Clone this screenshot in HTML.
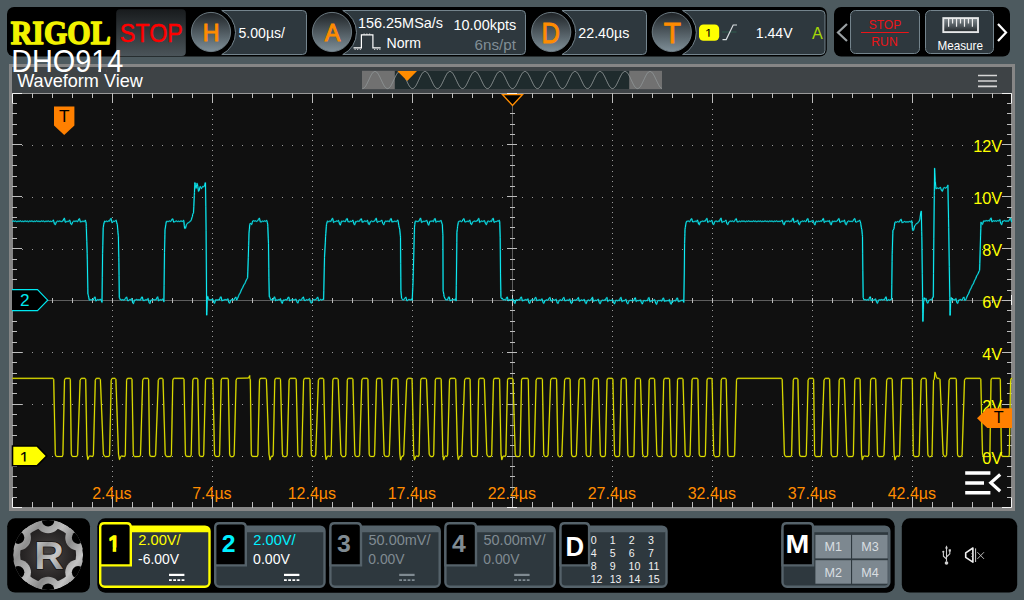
<!DOCTYPE html>
<html lang="en"><head><meta charset="utf-8"><title>RIGOL DHO914 - Waveform View</title>
<style>
html,body{margin:0;padding:0;background:#4d5a5f;overflow:hidden}
body{width:1024px;height:600px;font-family:"Liberation Sans", sans-serif}
svg{display:block;font-family:"Liberation Sans", sans-serif}
text{white-space:pre}
</style></head><body>
<svg width="1024" height="600" viewBox="0 0 1024 600">
<defs>
<linearGradient id="gc" x1="0" y1="0" x2="0" y2="1"><stop offset="0" stop-color="#1f2326"/><stop offset="0.45" stop-color="#4a545a"/><stop offset="1" stop-color="#7f8f98"/></linearGradient>
<linearGradient id="gs" x1="0" y1="0" x2="0" y2="1"><stop offset="0" stop-color="#181b1d"/><stop offset="1" stop-color="#4b5459"/></linearGradient>
<linearGradient id="gr" x1="0" y1="0" x2="0" y2="1"><stop offset="0" stop-color="#858e93"/><stop offset="0.6" stop-color="#4a5257"/><stop offset="1" stop-color="#22272a"/></linearGradient>
<linearGradient id="gm" gradientUnits="userSpaceOnUse" x1="13" y1="530" x2="83" y2="580"><stop offset="0" stop-color="#c9c9c9"/><stop offset="0.22" stop-color="#8f8f8f"/><stop offset="0.45" stop-color="#bdbdbd"/><stop offset="0.62" stop-color="#8a8a8a"/><stop offset="0.82" stop-color="#c4c4c4"/><stop offset="1" stop-color="#808080"/></linearGradient>
<radialGradient id="gd" gradientUnits="userSpaceOnUse" cx="48" cy="555" r="30"><stop offset="0" stop-color="#4b4746"/><stop offset="0.7" stop-color="#2c2929"/><stop offset="1" stop-color="#201e1e"/></radialGradient>
<linearGradient id="gl" x1="0" y1="0" x2="1" y2="1"><stop offset="0" stop-color="#e4e4e4"/><stop offset="0.35" stop-color="#9c9c9c"/><stop offset="0.6" stop-color="#c8c8c8"/><stop offset="1" stop-color="#7a7a7a"/></linearGradient>
</defs>
<rect x="0" y="0" width="1024" height="600" fill="#4d5a5f"/>
<rect x="7" y="7" width="819.8" height="49.5" rx="7" fill="#000"/>
<rect x="834" y="7" width="176" height="49.5" rx="7" fill="#000"/>
<text x="10.7" y="44.4" font-size="34.6" fill="#f2f200" textLength="100" lengthAdjust="spacingAndGlyphs" font-weight="bold" font-family='"Liberation Serif", serif' stroke="#f2f200" stroke-width="1.5" stroke-linejoin="round">RIGOL</text>
<rect x="116.2" y="9.2" width="69.6" height="46.7" rx="4" fill="url(#gs)"/>
<text x="119.8" y="42.2" font-size="26.6" fill="#ff0000" textLength="63" lengthAdjust="spacingAndGlyphs" stroke="#ff0000" stroke-width="0.45">STOP</text>
<path d="M221.78,10.5 H302.5 A4,4 0 0 1 306.5,14.5 V50.5 A4,4 0 0 1 302.5,54.5 H221.78 A24.5,24.5 0 0 0 221.78,10.5 Z" fill="#2e383e" stroke="#74848d" stroke-width="1"/>
<circle cx="211" cy="32" r="19.6" fill="url(#gc)" stroke="#74828a" stroke-width="0.9"/>
<text x="211.0" y="40.9" font-size="23.2" fill="#ff8c00" text-anchor="middle" stroke="#ff8c00" stroke-width="0.9">H</text>
<text x="238.5" y="38" font-size="14.5" fill="#fff" textLength="46.5" lengthAdjust="spacingAndGlyphs">5.00µs/</text>
<path d="M342.78,10.5 H521.5 A4,4 0 0 1 525.5,14.5 V50.5 A4,4 0 0 1 521.5,54.5 H342.78 A24.5,24.5 0 0 0 342.78,10.5 Z" fill="#2e383e" stroke="#74848d" stroke-width="1"/>
<circle cx="332" cy="32" r="19.6" fill="url(#gc)" stroke="#74828a" stroke-width="0.9"/>
<text x="332.6" y="40.9" font-size="23.2" fill="#ff8c00" text-anchor="middle" stroke="#ff8c00" stroke-width="0.9">A</text>
<text x="358" y="28.2" font-size="14.5" fill="#fff" textLength="85" lengthAdjust="spacingAndGlyphs">156.25MSa/s</text>
<text x="453.5" y="29.7" font-size="14.5" fill="#fff" textLength="62.7" lengthAdjust="spacingAndGlyphs">10.00kpts</text>
<text x="386.5" y="48" font-size="14.5" fill="#fff" textLength="34.5" lengthAdjust="spacingAndGlyphs">Norm</text>
<text x="474.6" y="49.7" font-size="14.5" fill="#818e96" textLength="41.3" lengthAdjust="spacingAndGlyphs">6ns/pt</text>
<path d="M353.5,47.9 H361.4 V34.9 H372.9 V47.9 H380.7" fill="none" stroke="#fff" stroke-width="1.2"/>
<path d="M354.6,49.4 h1 m1.6,0 h1 m1.6,0 h1 M374.2,49.4 h1 m1.6,0 h1 m1.6,0 h1 M363.6,34 h1 m1.8,0 h1 m1.8,0 h1" fill="none" stroke="#fff" stroke-width="0.9"/>
<path d="M561.98,10.5 H642.5 A4,4 0 0 1 646.5,14.5 V50.5 A4,4 0 0 1 642.5,54.5 H561.98 A24.5,24.5 0 0 0 561.98,10.5 Z" fill="#2e383e" stroke="#74848d" stroke-width="1"/>
<circle cx="551.2" cy="32" r="19.6" fill="url(#gc)" stroke="#74828a" stroke-width="0.9"/>
<text x="541.6" y="42.9" font-size="29.3" fill="#ff8c00" textLength="18.4" lengthAdjust="spacingAndGlyphs" stroke="#ff8c00" stroke-width="0.9">D</text>
<text x="578.3" y="38" font-size="14.5" fill="#fff" textLength="51" lengthAdjust="spacingAndGlyphs">22.40µs</text>
<path d="M682.58,10.5 H821.0 A4,4 0 0 1 825.0,14.5 V50.5 A4,4 0 0 1 821.0,54.5 H682.58 A24.5,24.5 0 0 0 682.58,10.5 Z" fill="#2e383e" stroke="#74848d" stroke-width="1"/>
<circle cx="671.8" cy="32" r="19.6" fill="url(#gc)" stroke="#74828a" stroke-width="0.9"/>
<text x="663.8" y="42.9" font-size="29.3" fill="#ff8c00" textLength="17.2" lengthAdjust="spacingAndGlyphs" stroke="#ff8c00" stroke-width="0.9">T</text>
<rect x="699" y="24.5" width="20.2" height="16.3" rx="4.5" fill="#ffff00"/>
<clipPath id="k1"><rect x="695.6" y="24.0" width="26" height="12.70"/></clipPath>
<g clip-path="url(#k1)">
<text x="708.6" y="38.23" font-size="13" fill="#000" text-anchor="middle">1</text>
</g>
<path d="M722,32 H736.5" stroke="#2f5a4c" stroke-width="1" fill="none"/>
<path d="M722.5,39.6 H726.2 L733.2,25 H737" stroke="#d8dde0" stroke-width="1.2" fill="none"/>
<text x="755.8" y="38" font-size="14.5" fill="#fff" textLength="36.8" lengthAdjust="spacingAndGlyphs">1.44V</text>
<text x="812.0" y="39.2" font-size="16.6" fill="#a6d608" textLength="10.8" lengthAdjust="spacingAndGlyphs">A</text>
<path d="M847,24 L838,32.5 L847,41" fill="none" stroke="#9aa0a3" stroke-width="2.2"/>
<rect x="850.5" y="10.5" width="69" height="43" rx="5" fill="#2e383e" stroke="#74848d" stroke-width="1"/>
<text x="868.7" y="28.8" font-size="12.6" fill="#ec1418" textLength="32.6" lengthAdjust="spacingAndGlyphs">STOP</text>
<path d="M861,32.5 H908.8" stroke="#ec1418" stroke-width="1"/>
<text x="871.3" y="45.6" font-size="12.6" fill="#ec1418" textLength="26.4" lengthAdjust="spacingAndGlyphs">RUN</text>
<rect x="925.5" y="10.5" width="68" height="43" rx="5" fill="#2e383e" stroke="#74848d" stroke-width="1"/>
<rect x="943.3" y="18.1" width="34.7" height="14" fill="url(#gr)" stroke="#e6e7e8" stroke-width="1.9"/>
<path d="M948.60,18.6 v8.2 M952.57,18.6 v5.0 M956.54,18.6 v8.2 M960.51,18.6 v5.0 M964.48,18.6 v8.2 M968.45,18.6 v5.0 M972.42,18.6 v8.2 " stroke="#eeeeee" stroke-width="1.2" fill="none"/>
<text x="937.5" y="50.2" font-size="12.8" fill="#fff" textLength="45.5" lengthAdjust="spacingAndGlyphs">Measure</text>
<path d="M998,24 L1006,32.5 L998,41" fill="none" stroke="#fff" stroke-width="2.2"/>
<rect x="9" y="64" width="1006" height="447" fill="#868686"/>
<rect x="12" y="67" width="1000" height="26" fill="#3e4346"/>
<rect x="13" y="94" width="998" height="413" fill="#101010"/>
<rect x="12" y="93" width="1000" height="1" fill="#9a9a9a"/>
<text x="17.2" y="86.6" font-size="18.6" fill="#fff" textLength="125.6" lengthAdjust="spacingAndGlyphs">Waveform View</text>
<path d="M978,75.5 H997 M978,81 H997 M978,86.3 H997" stroke="#d6d6d6" stroke-width="1.7" fill="none"/>
<rect x="362" y="70.8" width="300" height="18.4" fill="#717171"/>
<rect x="394.8" y="70.8" width="234.4" height="18.4" fill="#1f2b2d"/>
<polyline points="362.5,88.6 363.0,88.5 363.5,88.3 364.0,88.0 364.5,87.5 365.0,87.0 365.5,86.3 366.0,85.5 366.5,84.6 367.0,83.7 367.5,82.7 368.0,81.6 368.5,80.5 369.0,79.5 369.5,78.4 370.0,77.3 370.5,76.3 371.0,75.4 371.5,74.5 372.0,73.7 372.5,73.0 373.0,72.5 373.5,72.0 374.0,71.7 374.5,71.5 375.0,71.4 375.5,71.5 376.0,71.7 376.5,72.0 377.0,72.5 377.5,73.0 378.0,73.7 378.5,74.5 379.0,75.4 379.5,76.3 380.0,77.3 380.5,78.4 381.0,79.5 381.5,80.5 382.0,81.6 382.5,82.7 383.0,83.7 383.5,84.6 384.0,85.5 384.5,86.3 385.0,87.0 385.5,87.5 386.0,88.0 386.5,88.3 387.0,88.5 387.5,88.6 388.0,88.5 388.5,88.3 389.0,88.0 389.5,87.5 390.0,87.0 390.5,86.3 391.0,85.5 391.5,84.6 392.0,83.7 392.5,82.7 393.0,81.6 393.5,80.5 394.0,79.5 394.5,78.4 395.0,77.3 395.5,76.3 396.0,75.4 396.5,74.5 397.0,73.7 397.5,73.0 398.0,72.5 398.5,72.0 399.0,71.7 399.5,71.5 400.0,71.4 400.5,71.5 401.0,71.7 401.5,72.0 402.0,72.5 402.5,73.0 403.0,73.7 403.5,74.5 404.0,75.4 404.5,76.3 405.0,77.3 405.5,78.4 406.0,79.5 406.5,80.5 407.0,81.6 407.5,82.7 408.0,83.7 408.5,84.6 409.0,85.5 409.5,86.3 410.0,87.0 410.5,87.5 411.0,88.0 411.5,88.3 412.0,88.5 412.5,88.6 413.0,88.5 413.5,88.3 414.0,88.0 414.5,87.5 415.0,87.0 415.5,86.3 416.0,85.5 416.5,84.6 417.0,83.7 417.5,82.7 418.0,81.6 418.5,80.5 419.0,79.5 419.5,78.4 420.0,77.3 420.5,76.3 421.0,75.4 421.5,74.5 422.0,73.7 422.5,73.0 423.0,72.5 423.5,72.0 424.0,71.7 424.5,71.5 425.0,71.4 425.5,71.5 426.0,71.7 426.5,72.0 427.0,72.5 427.5,73.0 428.0,73.7 428.5,74.5 429.0,75.4 429.5,76.3 430.0,77.3 430.5,78.4 431.0,79.5 431.5,80.5 432.0,81.6 432.5,82.7 433.0,83.7 433.5,84.6 434.0,85.5 434.5,86.3 435.0,87.0 435.5,87.5 436.0,88.0 436.5,88.3 437.0,88.5 437.5,88.6 438.0,88.5 438.5,88.3 439.0,88.0 439.5,87.5 440.0,87.0 440.5,86.3 441.0,85.5 441.5,84.6 442.0,83.7 442.5,82.7 443.0,81.6 443.5,80.5 444.0,79.5 444.5,78.4 445.0,77.3 445.5,76.3 446.0,75.4 446.5,74.5 447.0,73.7 447.5,73.0 448.0,72.5 448.5,72.0 449.0,71.7 449.5,71.5 450.0,71.4 450.5,71.5 451.0,71.7 451.5,72.0 452.0,72.5 452.5,73.0 453.0,73.7 453.5,74.5 454.0,75.4 454.5,76.3 455.0,77.3 455.5,78.4 456.0,79.5 456.5,80.5 457.0,81.6 457.5,82.7 458.0,83.7 458.5,84.6 459.0,85.5 459.5,86.3 460.0,87.0 460.5,87.5 461.0,88.0 461.5,88.3 462.0,88.5 462.5,88.6 463.0,88.5 463.5,88.3 464.0,88.0 464.5,87.5 465.0,87.0 465.5,86.3 466.0,85.5 466.5,84.6 467.0,83.7 467.5,82.7 468.0,81.6 468.5,80.5 469.0,79.5 469.5,78.4 470.0,77.3 470.5,76.3 471.0,75.4 471.5,74.5 472.0,73.7 472.5,73.0 473.0,72.5 473.5,72.0 474.0,71.7 474.5,71.5 475.0,71.4 475.5,71.5 476.0,71.7 476.5,72.0 477.0,72.5 477.5,73.0 478.0,73.7 478.5,74.5 479.0,75.4 479.5,76.3 480.0,77.3 480.5,78.4 481.0,79.5 481.5,80.5 482.0,81.6 482.5,82.7 483.0,83.7 483.5,84.6 484.0,85.5 484.5,86.3 485.0,87.0 485.5,87.5 486.0,88.0 486.5,88.3 487.0,88.5 487.5,88.6 488.0,88.5 488.5,88.3 489.0,88.0 489.5,87.5 490.0,87.0 490.5,86.3 491.0,85.5 491.5,84.6 492.0,83.7 492.5,82.7 493.0,81.6 493.5,80.5 494.0,79.5 494.5,78.4 495.0,77.3 495.5,76.3 496.0,75.4 496.5,74.5 497.0,73.7 497.5,73.0 498.0,72.5 498.5,72.0 499.0,71.7 499.5,71.5 500.0,71.4 500.5,71.5 501.0,71.7 501.5,72.0 502.0,72.5 502.5,73.0 503.0,73.7 503.5,74.5 504.0,75.4 504.5,76.3 505.0,77.3 505.5,78.4 506.0,79.5 506.5,80.5 507.0,81.6 507.5,82.7 508.0,83.7 508.5,84.6 509.0,85.5 509.5,86.3 510.0,87.0 510.5,87.5 511.0,88.0 511.5,88.3 512.0,88.5 512.5,88.6 513.0,88.5 513.5,88.3 514.0,88.0 514.5,87.5 515.0,87.0 515.5,86.3 516.0,85.5 516.5,84.6 517.0,83.7 517.5,82.7 518.0,81.6 518.5,80.5 519.0,79.5 519.5,78.4 520.0,77.3 520.5,76.3 521.0,75.4 521.5,74.5 522.0,73.7 522.5,73.0 523.0,72.5 523.5,72.0 524.0,71.7 524.5,71.5 525.0,71.4 525.5,71.5 526.0,71.7 526.5,72.0 527.0,72.5 527.5,73.0 528.0,73.7 528.5,74.5 529.0,75.4 529.5,76.3 530.0,77.3 530.5,78.4 531.0,79.5 531.5,80.5 532.0,81.6 532.5,82.7 533.0,83.7 533.5,84.6 534.0,85.5 534.5,86.3 535.0,87.0 535.5,87.5 536.0,88.0 536.5,88.3 537.0,88.5 537.5,88.6 538.0,88.5 538.5,88.3 539.0,88.0 539.5,87.5 540.0,87.0 540.5,86.3 541.0,85.5 541.5,84.6 542.0,83.7 542.5,82.7 543.0,81.6 543.5,80.5 544.0,79.5 544.5,78.4 545.0,77.3 545.5,76.3 546.0,75.4 546.5,74.5 547.0,73.7 547.5,73.0 548.0,72.5 548.5,72.0 549.0,71.7 549.5,71.5 550.0,71.4 550.5,71.5 551.0,71.7 551.5,72.0 552.0,72.5 552.5,73.0 553.0,73.7 553.5,74.5 554.0,75.4 554.5,76.3 555.0,77.3 555.5,78.4 556.0,79.5 556.5,80.5 557.0,81.6 557.5,82.7 558.0,83.7 558.5,84.6 559.0,85.5 559.5,86.3 560.0,87.0 560.5,87.5 561.0,88.0 561.5,88.3 562.0,88.5 562.5,88.6 563.0,88.5 563.5,88.3 564.0,88.0 564.5,87.5 565.0,87.0 565.5,86.3 566.0,85.5 566.5,84.6 567.0,83.7 567.5,82.7 568.0,81.6 568.5,80.5 569.0,79.5 569.5,78.4 570.0,77.3 570.5,76.3 571.0,75.4 571.5,74.5 572.0,73.7 572.5,73.0 573.0,72.5 573.5,72.0 574.0,71.7 574.5,71.5 575.0,71.4 575.5,71.5 576.0,71.7 576.5,72.0 577.0,72.5 577.5,73.0 578.0,73.7 578.5,74.5 579.0,75.4 579.5,76.3 580.0,77.3 580.5,78.4 581.0,79.5 581.5,80.5 582.0,81.6 582.5,82.7 583.0,83.7 583.5,84.6 584.0,85.5 584.5,86.3 585.0,87.0 585.5,87.5 586.0,88.0 586.5,88.3 587.0,88.5 587.5,88.6 588.0,88.5 588.5,88.3 589.0,88.0 589.5,87.5 590.0,87.0 590.5,86.3 591.0,85.5 591.5,84.6 592.0,83.7 592.5,82.7 593.0,81.6 593.5,80.5 594.0,79.5 594.5,78.4 595.0,77.3 595.5,76.3 596.0,75.4 596.5,74.5 597.0,73.7 597.5,73.0 598.0,72.5 598.5,72.0 599.0,71.7 599.5,71.5 600.0,71.4 600.5,71.5 601.0,71.7 601.5,72.0 602.0,72.5 602.5,73.0 603.0,73.7 603.5,74.5 604.0,75.4 604.5,76.3 605.0,77.3 605.5,78.4 606.0,79.5 606.5,80.5 607.0,81.6 607.5,82.7 608.0,83.7 608.5,84.6 609.0,85.5 609.5,86.3 610.0,87.0 610.5,87.5 611.0,88.0 611.5,88.3 612.0,88.5 612.5,88.6 613.0,88.5 613.5,88.3 614.0,88.0 614.5,87.5 615.0,87.0 615.5,86.3 616.0,85.5 616.5,84.6 617.0,83.7 617.5,82.7 618.0,81.6 618.5,80.5 619.0,79.5 619.5,78.4 620.0,77.3 620.5,76.3 621.0,75.4 621.5,74.5 622.0,73.7 622.5,73.0 623.0,72.5 623.5,72.0 624.0,71.7 624.5,71.5 625.0,71.4 625.5,71.5 626.0,71.7 626.5,72.0 627.0,72.5 627.5,73.0 628.0,73.7 628.5,74.5 629.0,75.4 629.5,76.3 630.0,77.3 630.5,78.4 631.0,79.5 631.5,80.5 632.0,81.6 632.5,82.7 633.0,83.7 633.5,84.6 634.0,85.5 634.5,86.3 635.0,87.0 635.5,87.5 636.0,88.0 636.5,88.3 637.0,88.5 637.5,88.6 638.0,88.5 638.5,88.3 639.0,88.0 639.5,87.5 640.0,87.0 640.5,86.3 641.0,85.5 641.5,84.6 642.0,83.7 642.5,82.7 643.0,81.6 643.5,80.5 644.0,79.5 644.5,78.4 645.0,77.3 645.5,76.3 646.0,75.4 646.5,74.5 647.0,73.7 647.5,73.0 648.0,72.5 648.5,72.0 649.0,71.7 649.5,71.5 650.0,71.4 650.5,71.5 651.0,71.7 651.5,72.0 652.0,72.5 652.5,73.0 653.0,73.7 653.5,74.5 654.0,75.4 654.5,76.3 655.0,77.3 655.5,78.4 656.0,79.5 656.5,80.5 657.0,81.6 657.5,82.7 658.0,83.7 658.5,84.6 659.0,85.5 659.5,86.3 660.0,87.0 660.5,87.5 661.0,88.0 661.5,88.3 662.0,88.5" fill="none" stroke="#8f9596" stroke-width="1"/>
<path d="M397.3,71 H417 L407.2,81 Z" fill="#ff8c00"/>
<path d="M112,109.5h1M112,114.5h1M112,119.5h1M112,124.5h1M112,129.5h1M112,134.5h1M112,140.5h1M112,145.5h1M112,150.5h1M112,155.5h1M112,160.5h1M112,165.5h1M112,171.5h1M112,176.5h1M112,181.5h1M112,186.5h1M112,191.5h1M112,197.5h1M112,202.5h1M112,207.5h1M112,212.5h1M112,217.5h1M112,222.5h1M112,228.5h1M112,233.5h1M112,238.5h1M112,243.5h1M112,248.5h1M112,253.5h1M112,259.5h1M112,264.5h1M112,269.5h1M112,274.5h1M112,279.5h1M112,284.5h1M112,290.5h1M112,295.5h1M112,300.5h1M112,305.5h1M112,310.5h1M112,316.5h1M112,321.5h1M112,326.5h1M112,331.5h1M112,336.5h1M112,341.5h1M112,347.5h1M112,352.5h1M112,357.5h1M112,362.5h1M112,367.5h1M112,372.5h1M112,378.5h1M112,383.5h1M112,388.5h1M112,393.5h1M112,398.5h1M112,404.5h1M112,409.5h1M112,414.5h1M112,419.5h1M112,424.5h1M112,429.5h1M112,435.5h1M112,440.5h1M112,445.5h1M112,450.5h1M112,455.5h1M112,460.5h1M112,466.5h1M112,471.5h1M112,476.5h1M112,481.5h1M112,486.5h1M112,491.5h1M112,497.5h1M212,109.5h1M212,114.5h1M212,119.5h1M212,124.5h1M212,129.5h1M212,134.5h1M212,140.5h1M212,145.5h1M212,150.5h1M212,155.5h1M212,160.5h1M212,165.5h1M212,171.5h1M212,176.5h1M212,181.5h1M212,186.5h1M212,191.5h1M212,197.5h1M212,202.5h1M212,207.5h1M212,212.5h1M212,217.5h1M212,222.5h1M212,228.5h1M212,233.5h1M212,238.5h1M212,243.5h1M212,248.5h1M212,253.5h1M212,259.5h1M212,264.5h1M212,269.5h1M212,274.5h1M212,279.5h1M212,284.5h1M212,290.5h1M212,295.5h1M212,300.5h1M212,305.5h1M212,310.5h1M212,316.5h1M212,321.5h1M212,326.5h1M212,331.5h1M212,336.5h1M212,341.5h1M212,347.5h1M212,352.5h1M212,357.5h1M212,362.5h1M212,367.5h1M212,372.5h1M212,378.5h1M212,383.5h1M212,388.5h1M212,393.5h1M212,398.5h1M212,404.5h1M212,409.5h1M212,414.5h1M212,419.5h1M212,424.5h1M212,429.5h1M212,435.5h1M212,440.5h1M212,445.5h1M212,450.5h1M212,455.5h1M212,460.5h1M212,466.5h1M212,471.5h1M212,476.5h1M212,481.5h1M212,486.5h1M212,491.5h1M212,497.5h1M312,109.5h1M312,114.5h1M312,119.5h1M312,124.5h1M312,129.5h1M312,134.5h1M312,140.5h1M312,145.5h1M312,150.5h1M312,155.5h1M312,160.5h1M312,165.5h1M312,171.5h1M312,176.5h1M312,181.5h1M312,186.5h1M312,191.5h1M312,197.5h1M312,202.5h1M312,207.5h1M312,212.5h1M312,217.5h1M312,222.5h1M312,228.5h1M312,233.5h1M312,238.5h1M312,243.5h1M312,248.5h1M312,253.5h1M312,259.5h1M312,264.5h1M312,269.5h1M312,274.5h1M312,279.5h1M312,284.5h1M312,290.5h1M312,295.5h1M312,300.5h1M312,305.5h1M312,310.5h1M312,316.5h1M312,321.5h1M312,326.5h1M312,331.5h1M312,336.5h1M312,341.5h1M312,347.5h1M312,352.5h1M312,357.5h1M312,362.5h1M312,367.5h1M312,372.5h1M312,378.5h1M312,383.5h1M312,388.5h1M312,393.5h1M312,398.5h1M312,404.5h1M312,409.5h1M312,414.5h1M312,419.5h1M312,424.5h1M312,429.5h1M312,435.5h1M312,440.5h1M312,445.5h1M312,450.5h1M312,455.5h1M312,460.5h1M312,466.5h1M312,471.5h1M312,476.5h1M312,481.5h1M312,486.5h1M312,491.5h1M312,497.5h1M412,109.5h1M412,114.5h1M412,119.5h1M412,124.5h1M412,129.5h1M412,134.5h1M412,140.5h1M412,145.5h1M412,150.5h1M412,155.5h1M412,160.5h1M412,165.5h1M412,171.5h1M412,176.5h1M412,181.5h1M412,186.5h1M412,191.5h1M412,197.5h1M412,202.5h1M412,207.5h1M412,212.5h1M412,217.5h1M412,222.5h1M412,228.5h1M412,233.5h1M412,238.5h1M412,243.5h1M412,248.5h1M412,253.5h1M412,259.5h1M412,264.5h1M412,269.5h1M412,274.5h1M412,279.5h1M412,284.5h1M412,290.5h1M412,295.5h1M412,300.5h1M412,305.5h1M412,310.5h1M412,316.5h1M412,321.5h1M412,326.5h1M412,331.5h1M412,336.5h1M412,341.5h1M412,347.5h1M412,352.5h1M412,357.5h1M412,362.5h1M412,367.5h1M412,372.5h1M412,378.5h1M412,383.5h1M412,388.5h1M412,393.5h1M412,398.5h1M412,404.5h1M412,409.5h1M412,414.5h1M412,419.5h1M412,424.5h1M412,429.5h1M412,435.5h1M412,440.5h1M412,445.5h1M412,450.5h1M412,455.5h1M412,460.5h1M412,466.5h1M412,471.5h1M412,476.5h1M412,481.5h1M412,486.5h1M412,491.5h1M412,497.5h1M612,109.5h1M612,114.5h1M612,119.5h1M612,124.5h1M612,129.5h1M612,134.5h1M612,140.5h1M612,145.5h1M612,150.5h1M612,155.5h1M612,160.5h1M612,165.5h1M612,171.5h1M612,176.5h1M612,181.5h1M612,186.5h1M612,191.5h1M612,197.5h1M612,202.5h1M612,207.5h1M612,212.5h1M612,217.5h1M612,222.5h1M612,228.5h1M612,233.5h1M612,238.5h1M612,243.5h1M612,248.5h1M612,253.5h1M612,259.5h1M612,264.5h1M612,269.5h1M612,274.5h1M612,279.5h1M612,284.5h1M612,290.5h1M612,295.5h1M612,300.5h1M612,305.5h1M612,310.5h1M612,316.5h1M612,321.5h1M612,326.5h1M612,331.5h1M612,336.5h1M612,341.5h1M612,347.5h1M612,352.5h1M612,357.5h1M612,362.5h1M612,367.5h1M612,372.5h1M612,378.5h1M612,383.5h1M612,388.5h1M612,393.5h1M612,398.5h1M612,404.5h1M612,409.5h1M612,414.5h1M612,419.5h1M612,424.5h1M612,429.5h1M612,435.5h1M612,440.5h1M612,445.5h1M612,450.5h1M612,455.5h1M612,460.5h1M612,466.5h1M612,471.5h1M612,476.5h1M612,481.5h1M612,486.5h1M612,491.5h1M612,497.5h1M712,109.5h1M712,114.5h1M712,119.5h1M712,124.5h1M712,129.5h1M712,134.5h1M712,140.5h1M712,145.5h1M712,150.5h1M712,155.5h1M712,160.5h1M712,165.5h1M712,171.5h1M712,176.5h1M712,181.5h1M712,186.5h1M712,191.5h1M712,197.5h1M712,202.5h1M712,207.5h1M712,212.5h1M712,217.5h1M712,222.5h1M712,228.5h1M712,233.5h1M712,238.5h1M712,243.5h1M712,248.5h1M712,253.5h1M712,259.5h1M712,264.5h1M712,269.5h1M712,274.5h1M712,279.5h1M712,284.5h1M712,290.5h1M712,295.5h1M712,300.5h1M712,305.5h1M712,310.5h1M712,316.5h1M712,321.5h1M712,326.5h1M712,331.5h1M712,336.5h1M712,341.5h1M712,347.5h1M712,352.5h1M712,357.5h1M712,362.5h1M712,367.5h1M712,372.5h1M712,378.5h1M712,383.5h1M712,388.5h1M712,393.5h1M712,398.5h1M712,404.5h1M712,409.5h1M712,414.5h1M712,419.5h1M712,424.5h1M712,429.5h1M712,435.5h1M712,440.5h1M712,445.5h1M712,450.5h1M712,455.5h1M712,460.5h1M712,466.5h1M712,471.5h1M712,476.5h1M712,481.5h1M712,486.5h1M712,491.5h1M712,497.5h1M812,109.5h1M812,114.5h1M812,119.5h1M812,124.5h1M812,129.5h1M812,134.5h1M812,140.5h1M812,145.5h1M812,150.5h1M812,155.5h1M812,160.5h1M812,165.5h1M812,171.5h1M812,176.5h1M812,181.5h1M812,186.5h1M812,191.5h1M812,197.5h1M812,202.5h1M812,207.5h1M812,212.5h1M812,217.5h1M812,222.5h1M812,228.5h1M812,233.5h1M812,238.5h1M812,243.5h1M812,248.5h1M812,253.5h1M812,259.5h1M812,264.5h1M812,269.5h1M812,274.5h1M812,279.5h1M812,284.5h1M812,290.5h1M812,295.5h1M812,300.5h1M812,305.5h1M812,310.5h1M812,316.5h1M812,321.5h1M812,326.5h1M812,331.5h1M812,336.5h1M812,341.5h1M812,347.5h1M812,352.5h1M812,357.5h1M812,362.5h1M812,367.5h1M812,372.5h1M812,378.5h1M812,383.5h1M812,388.5h1M812,393.5h1M812,398.5h1M812,404.5h1M812,409.5h1M812,414.5h1M812,419.5h1M812,424.5h1M812,429.5h1M812,435.5h1M812,440.5h1M812,445.5h1M812,450.5h1M812,455.5h1M812,460.5h1M812,466.5h1M812,471.5h1M812,476.5h1M812,481.5h1M812,486.5h1M812,491.5h1M812,497.5h1M912,109.5h1M912,114.5h1M912,119.5h1M912,124.5h1M912,129.5h1M912,134.5h1M912,140.5h1M912,145.5h1M912,150.5h1M912,155.5h1M912,160.5h1M912,165.5h1M912,171.5h1M912,176.5h1M912,181.5h1M912,186.5h1M912,191.5h1M912,197.5h1M912,202.5h1M912,207.5h1M912,212.5h1M912,217.5h1M912,222.5h1M912,228.5h1M912,233.5h1M912,238.5h1M912,243.5h1M912,248.5h1M912,253.5h1M912,259.5h1M912,264.5h1M912,269.5h1M912,274.5h1M912,279.5h1M912,284.5h1M912,290.5h1M912,295.5h1M912,300.5h1M912,305.5h1M912,310.5h1M912,316.5h1M912,321.5h1M912,326.5h1M912,331.5h1M912,336.5h1M912,341.5h1M912,347.5h1M912,352.5h1M912,357.5h1M912,362.5h1M912,367.5h1M912,372.5h1M912,378.5h1M912,383.5h1M912,388.5h1M912,393.5h1M912,398.5h1M912,404.5h1M912,409.5h1M912,414.5h1M912,419.5h1M912,424.5h1M912,429.5h1M912,435.5h1M912,440.5h1M912,445.5h1M912,450.5h1M912,455.5h1M912,460.5h1M912,466.5h1M912,471.5h1M912,476.5h1M912,481.5h1M912,486.5h1M912,491.5h1M912,497.5h1M22,145.5h1M32,145.5h1M42,145.5h1M52,145.5h1M62,145.5h1M72,145.5h1M82,145.5h1M92,145.5h1M102,145.5h1M122,145.5h1M132,145.5h1M142,145.5h1M152,145.5h1M162,145.5h1M172,145.5h1M182,145.5h1M192,145.5h1M202,145.5h1M222,145.5h1M232,145.5h1M242,145.5h1M252,145.5h1M262,145.5h1M272,145.5h1M282,145.5h1M292,145.5h1M302,145.5h1M322,145.5h1M332,145.5h1M342,145.5h1M352,145.5h1M362,145.5h1M372,145.5h1M382,145.5h1M392,145.5h1M402,145.5h1M422,145.5h1M432,145.5h1M442,145.5h1M452,145.5h1M462,145.5h1M472,145.5h1M482,145.5h1M492,145.5h1M502,145.5h1M522,145.5h1M532,145.5h1M542,145.5h1M552,145.5h1M562,145.5h1M572,145.5h1M582,145.5h1M592,145.5h1M602,145.5h1M622,145.5h1M632,145.5h1M642,145.5h1M652,145.5h1M662,145.5h1M672,145.5h1M682,145.5h1M692,145.5h1M702,145.5h1M722,145.5h1M732,145.5h1M742,145.5h1M752,145.5h1M762,145.5h1M772,145.5h1M782,145.5h1M792,145.5h1M802,145.5h1M822,145.5h1M832,145.5h1M842,145.5h1M852,145.5h1M862,145.5h1M872,145.5h1M882,145.5h1M892,145.5h1M902,145.5h1M922,145.5h1M932,145.5h1M942,145.5h1M952,145.5h1M962,145.5h1M972,145.5h1M982,145.5h1M992,145.5h1M22,197.5h1M32,197.5h1M42,197.5h1M52,197.5h1M62,197.5h1M72,197.5h1M82,197.5h1M92,197.5h1M102,197.5h1M122,197.5h1M132,197.5h1M142,197.5h1M152,197.5h1M162,197.5h1M172,197.5h1M182,197.5h1M192,197.5h1M202,197.5h1M222,197.5h1M232,197.5h1M242,197.5h1M252,197.5h1M262,197.5h1M272,197.5h1M282,197.5h1M292,197.5h1M302,197.5h1M322,197.5h1M332,197.5h1M342,197.5h1M352,197.5h1M362,197.5h1M372,197.5h1M382,197.5h1M392,197.5h1M402,197.5h1M422,197.5h1M432,197.5h1M442,197.5h1M452,197.5h1M462,197.5h1M472,197.5h1M482,197.5h1M492,197.5h1M502,197.5h1M522,197.5h1M532,197.5h1M542,197.5h1M552,197.5h1M562,197.5h1M572,197.5h1M582,197.5h1M592,197.5h1M602,197.5h1M622,197.5h1M632,197.5h1M642,197.5h1M652,197.5h1M662,197.5h1M672,197.5h1M682,197.5h1M692,197.5h1M702,197.5h1M722,197.5h1M732,197.5h1M742,197.5h1M752,197.5h1M762,197.5h1M772,197.5h1M782,197.5h1M792,197.5h1M802,197.5h1M822,197.5h1M832,197.5h1M842,197.5h1M852,197.5h1M862,197.5h1M872,197.5h1M882,197.5h1M892,197.5h1M902,197.5h1M922,197.5h1M932,197.5h1M942,197.5h1M952,197.5h1M962,197.5h1M972,197.5h1M982,197.5h1M992,197.5h1M22,249.5h1M32,249.5h1M42,249.5h1M52,249.5h1M62,249.5h1M72,249.5h1M82,249.5h1M92,249.5h1M102,249.5h1M122,249.5h1M132,249.5h1M142,249.5h1M152,249.5h1M162,249.5h1M172,249.5h1M182,249.5h1M192,249.5h1M202,249.5h1M222,249.5h1M232,249.5h1M242,249.5h1M252,249.5h1M262,249.5h1M272,249.5h1M282,249.5h1M292,249.5h1M302,249.5h1M322,249.5h1M332,249.5h1M342,249.5h1M352,249.5h1M362,249.5h1M372,249.5h1M382,249.5h1M392,249.5h1M402,249.5h1M422,249.5h1M432,249.5h1M442,249.5h1M452,249.5h1M462,249.5h1M472,249.5h1M482,249.5h1M492,249.5h1M502,249.5h1M522,249.5h1M532,249.5h1M542,249.5h1M552,249.5h1M562,249.5h1M572,249.5h1M582,249.5h1M592,249.5h1M602,249.5h1M622,249.5h1M632,249.5h1M642,249.5h1M652,249.5h1M662,249.5h1M672,249.5h1M682,249.5h1M692,249.5h1M702,249.5h1M722,249.5h1M732,249.5h1M742,249.5h1M752,249.5h1M762,249.5h1M772,249.5h1M782,249.5h1M792,249.5h1M802,249.5h1M822,249.5h1M832,249.5h1M842,249.5h1M852,249.5h1M862,249.5h1M872,249.5h1M882,249.5h1M892,249.5h1M902,249.5h1M922,249.5h1M932,249.5h1M942,249.5h1M952,249.5h1M962,249.5h1M972,249.5h1M982,249.5h1M992,249.5h1M22,352.5h1M32,352.5h1M42,352.5h1M52,352.5h1M62,352.5h1M72,352.5h1M82,352.5h1M92,352.5h1M102,352.5h1M122,352.5h1M132,352.5h1M142,352.5h1M152,352.5h1M162,352.5h1M172,352.5h1M182,352.5h1M192,352.5h1M202,352.5h1M222,352.5h1M232,352.5h1M242,352.5h1M252,352.5h1M262,352.5h1M272,352.5h1M282,352.5h1M292,352.5h1M302,352.5h1M322,352.5h1M332,352.5h1M342,352.5h1M352,352.5h1M362,352.5h1M372,352.5h1M382,352.5h1M392,352.5h1M402,352.5h1M422,352.5h1M432,352.5h1M442,352.5h1M452,352.5h1M462,352.5h1M472,352.5h1M482,352.5h1M492,352.5h1M502,352.5h1M522,352.5h1M532,352.5h1M542,352.5h1M552,352.5h1M562,352.5h1M572,352.5h1M582,352.5h1M592,352.5h1M602,352.5h1M622,352.5h1M632,352.5h1M642,352.5h1M652,352.5h1M662,352.5h1M672,352.5h1M682,352.5h1M692,352.5h1M702,352.5h1M722,352.5h1M732,352.5h1M742,352.5h1M752,352.5h1M762,352.5h1M772,352.5h1M782,352.5h1M792,352.5h1M802,352.5h1M822,352.5h1M832,352.5h1M842,352.5h1M852,352.5h1M862,352.5h1M872,352.5h1M882,352.5h1M892,352.5h1M902,352.5h1M922,352.5h1M932,352.5h1M942,352.5h1M952,352.5h1M962,352.5h1M972,352.5h1M982,352.5h1M992,352.5h1M22,404.5h1M32,404.5h1M42,404.5h1M52,404.5h1M62,404.5h1M72,404.5h1M82,404.5h1M92,404.5h1M102,404.5h1M122,404.5h1M132,404.5h1M142,404.5h1M152,404.5h1M162,404.5h1M172,404.5h1M182,404.5h1M192,404.5h1M202,404.5h1M222,404.5h1M232,404.5h1M242,404.5h1M252,404.5h1M262,404.5h1M272,404.5h1M282,404.5h1M292,404.5h1M302,404.5h1M322,404.5h1M332,404.5h1M342,404.5h1M352,404.5h1M362,404.5h1M372,404.5h1M382,404.5h1M392,404.5h1M402,404.5h1M422,404.5h1M432,404.5h1M442,404.5h1M452,404.5h1M462,404.5h1M472,404.5h1M482,404.5h1M492,404.5h1M502,404.5h1M522,404.5h1M532,404.5h1M542,404.5h1M552,404.5h1M562,404.5h1M572,404.5h1M582,404.5h1M592,404.5h1M602,404.5h1M622,404.5h1M632,404.5h1M642,404.5h1M652,404.5h1M662,404.5h1M672,404.5h1M682,404.5h1M692,404.5h1M702,404.5h1M722,404.5h1M732,404.5h1M742,404.5h1M752,404.5h1M762,404.5h1M772,404.5h1M782,404.5h1M792,404.5h1M802,404.5h1M822,404.5h1M832,404.5h1M842,404.5h1M852,404.5h1M862,404.5h1M872,404.5h1M882,404.5h1M892,404.5h1M902,404.5h1M922,404.5h1M932,404.5h1M942,404.5h1M952,404.5h1M962,404.5h1M972,404.5h1M982,404.5h1M992,404.5h1M22,456.5h1M32,456.5h1M42,456.5h1M52,456.5h1M62,456.5h1M72,456.5h1M82,456.5h1M92,456.5h1M102,456.5h1M122,456.5h1M132,456.5h1M142,456.5h1M152,456.5h1M162,456.5h1M172,456.5h1M182,456.5h1M192,456.5h1M202,456.5h1M222,456.5h1M232,456.5h1M242,456.5h1M252,456.5h1M262,456.5h1M272,456.5h1M282,456.5h1M292,456.5h1M302,456.5h1M322,456.5h1M332,456.5h1M342,456.5h1M352,456.5h1M362,456.5h1M372,456.5h1M382,456.5h1M392,456.5h1M402,456.5h1M422,456.5h1M432,456.5h1M442,456.5h1M452,456.5h1M462,456.5h1M472,456.5h1M482,456.5h1M492,456.5h1M502,456.5h1M522,456.5h1M532,456.5h1M542,456.5h1M552,456.5h1M562,456.5h1M572,456.5h1M582,456.5h1M592,456.5h1M602,456.5h1M622,456.5h1M632,456.5h1M642,456.5h1M652,456.5h1M662,456.5h1M672,456.5h1M682,456.5h1M692,456.5h1M702,456.5h1M722,456.5h1M732,456.5h1M742,456.5h1M752,456.5h1M762,456.5h1M772,456.5h1M782,456.5h1M792,456.5h1M802,456.5h1M822,456.5h1M832,456.5h1M842,456.5h1M852,456.5h1M862,456.5h1M872,456.5h1M882,456.5h1M892,456.5h1M902,456.5h1M922,456.5h1M932,456.5h1M942,456.5h1M952,456.5h1M962,456.5h1M972,456.5h1M982,456.5h1M992,456.5h1" stroke="#9a9a9a" stroke-width="1" fill="none"/>
<path d="M13,300.5 H1011 M512.5,94 V507" stroke="#5e5e5e" stroke-width="1" fill="none"/>
<path d="M32.5,93v5M32.5,508v-6M32.5,298v5M52.5,93v5M52.5,508v-6M52.5,298v5M72.5,93v5M72.5,508v-6M72.5,298v5M92.5,93v5M92.5,508v-6M92.5,298v5M112.5,93v10M112.5,508v-11M112.5,298v5M132.5,93v5M132.5,508v-6M132.5,298v5M152.5,93v5M152.5,508v-6M152.5,298v5M172.5,93v5M172.5,508v-6M172.5,298v5M192.5,93v5M192.5,508v-6M192.5,298v5M212.5,93v10M212.5,508v-11M212.5,298v5M232.5,93v5M232.5,508v-6M232.5,298v5M252.5,93v5M252.5,508v-6M252.5,298v5M272.5,93v5M272.5,508v-6M272.5,298v5M292.5,93v5M292.5,508v-6M292.5,298v5M312.5,93v10M312.5,508v-11M312.5,298v5M332.5,93v5M332.5,508v-6M332.5,298v5M352.5,93v5M352.5,508v-6M352.5,298v5M372.5,93v5M372.5,508v-6M372.5,298v5M392.5,93v5M392.5,508v-6M392.5,298v5M412.5,93v10M412.5,508v-11M412.5,298v5M432.5,93v5M432.5,508v-6M432.5,298v5M452.5,93v5M452.5,508v-6M452.5,298v5M472.5,93v5M472.5,508v-6M472.5,298v5M492.5,93v5M492.5,508v-6M492.5,298v5M512.5,93v10M512.5,508v-11M532.5,93v5M532.5,508v-6M532.5,298v5M552.5,93v5M552.5,508v-6M552.5,298v5M572.5,93v5M572.5,508v-6M572.5,298v5M592.5,93v5M592.5,508v-6M592.5,298v5M612.5,93v10M612.5,508v-11M612.5,298v5M632.5,93v5M632.5,508v-6M632.5,298v5M652.5,93v5M652.5,508v-6M652.5,298v5M672.5,93v5M672.5,508v-6M672.5,298v5M692.5,93v5M692.5,508v-6M692.5,298v5M712.5,93v10M712.5,508v-11M712.5,298v5M732.5,93v5M732.5,508v-6M732.5,298v5M752.5,93v5M752.5,508v-6M752.5,298v5M772.5,93v5M772.5,508v-6M772.5,298v5M792.5,93v5M792.5,508v-6M792.5,298v5M812.5,93v10M812.5,508v-11M812.5,298v5M832.5,93v5M832.5,508v-6M832.5,298v5M852.5,93v5M852.5,508v-6M852.5,298v5M872.5,93v5M872.5,508v-6M872.5,298v5M892.5,93v5M892.5,508v-6M892.5,298v5M912.5,93v10M912.5,508v-11M912.5,298v5M932.5,93v5M932.5,508v-6M932.5,298v5M952.5,93v5M952.5,508v-6M952.5,298v5M972.5,93v5M972.5,508v-6M972.5,298v5M992.5,93v5M992.5,508v-6M992.5,298v5M12,103.5h5M1012,103.5h-5M510,103.5h5M12,113.5h5M1012,113.5h-5M510,113.5h5M12,124.5h5M1012,124.5h-5M510,124.5h5M12,134.5h5M1012,134.5h-5M510,134.5h5M12,144.5h10M1012,144.5h-10M507,144.5h10M12,155.5h5M1012,155.5h-5M510,155.5h5M12,165.5h5M1012,165.5h-5M510,165.5h5M12,176.5h5M1012,176.5h-5M510,176.5h5M12,186.5h5M1012,186.5h-5M510,186.5h5M12,196.5h10M1012,196.5h-10M507,196.5h10M12,207.5h5M1012,207.5h-5M510,207.5h5M12,217.5h5M1012,217.5h-5M510,217.5h5M12,227.5h5M1012,227.5h-5M510,227.5h5M12,238.5h5M1012,238.5h-5M510,238.5h5M12,248.5h10M1012,248.5h-10M507,248.5h10M12,259.5h5M1012,259.5h-5M510,259.5h5M12,269.5h5M1012,269.5h-5M510,269.5h5M12,279.5h5M1012,279.5h-5M510,279.5h5M12,290.5h5M1012,290.5h-5M510,290.5h5M12,300.5h10M1012,300.5h-10M12,310.5h5M1012,310.5h-5M510,310.5h5M12,321.5h5M1012,321.5h-5M510,321.5h5M12,331.5h5M1012,331.5h-5M510,331.5h5M12,342.5h5M1012,342.5h-5M510,342.5h5M12,352.5h10M1012,352.5h-10M507,352.5h10M12,362.5h5M1012,362.5h-5M510,362.5h5M12,373.5h5M1012,373.5h-5M510,373.5h5M12,383.5h5M1012,383.5h-5M510,383.5h5M12,393.5h5M1012,393.5h-5M510,393.5h5M12,404.5h10M1012,404.5h-10M507,404.5h10M12,414.5h5M1012,414.5h-5M510,414.5h5M12,425.5h5M1012,425.5h-5M510,425.5h5M12,435.5h5M1012,435.5h-5M510,435.5h5M1012,445.5h-5M510,445.5h5M12,456.5h10M1012,456.5h-10M507,456.5h10M12,466.5h5M1012,466.5h-5M510,466.5h5M12,476.5h5M1012,476.5h-5M510,476.5h5M12,487.5h5M1012,487.5h-5M510,487.5h5M12,497.5h5M1012,497.5h-5M510,497.5h5" stroke="#bdbdbd" stroke-width="1" fill="none"/>
<path d="M12.5,103 V93.5 H22 M1002,93.5 H1011.5 V103 M12.5,498 V507.5 H22 M1002,507.5 H1011.5 V498" stroke="#f2f2f2" stroke-width="1" fill="none"/>
<path d="M507,300.5 h11 M512.5,295 v11" stroke="#cfcfcf" stroke-width="1" fill="none"/>
<path d="M507,93.5 h10 M507,507.5 h10 M1011.5,295 v10" stroke="#f2f2f2" stroke-width="1" fill="none"/>
<path d="M12.30,221.6 L12.80,221.3 L13.30,221.0 L13.80,221.1 L14.30,221.3 L14.80,221.3 L15.30,221.1 L15.80,221.1 L16.30,221.4 L16.80,221.7 L17.30,221.5 L17.80,221.2 L18.30,221.2 L18.80,221.4 L19.30,221.4 L19.80,221.1 L20.30,220.9 L20.80,221.1 L21.30,221.5 L21.80,221.5 L22.30,221.3 L22.80,221.2 L23.30,221.4 L23.80,221.6 L24.30,221.4 L24.80,221.0 L25.30,221.0 L25.80,221.3 L26.30,221.4 L26.80,221.3 L27.30,221.1 L27.80,221.4 L28.30,221.6 L28.80,221.6 L29.30,221.2 L29.80,221.1 L30.30,221.2 L30.80,221.4 L31.30,221.2 L31.80,221.0 L32.30,221.1 L32.80,221.5 L33.30,221.6 L33.80,221.4 L34.30,221.2 L34.80,221.3 L35.30,221.5 L35.80,221.4 L36.30,221.0 L36.80,220.9 L37.30,221.2 L37.80,221.5 L38.30,221.4 L38.80,221.2 L39.30,221.3 L39.80,221.6 L40.30,221.6 L40.80,221.3 L41.30,221.0 L41.80,221.1 L42.30,221.3 L42.80,221.3 L43.30,221.1 L43.80,221.1 L44.30,221.5 L44.80,221.7 L45.30,221.5 L45.80,221.2 L46.30,221.2 L46.80,221.4 L47.30,221.4 L47.80,221.1 L48.30,221.0 L48.80,221.2 L49.30,221.5 L49.80,221.5 L50.30,221.3 L50.80,221.3 L51.30,221.5 L51.80,221.5 L52.30,221.3 L52.35,221.2 L52.80,220.6 L53.30,220.2 L53.45,220.1 L53.80,221.5 L54.30,223.3 L54.50,224.0 L54.80,224.2 L55.30,224.7 L55.80,223.4 L56.30,222.1 L56.35,222.0 L56.80,221.7 L57.30,221.2 L57.35,221.2 L57.80,221.1 L58.30,221.3 L58.80,221.4 L59.30,221.2 L59.80,221.0 L60.30,221.2 L60.80,221.5 L61.30,221.6 L61.80,221.4 L62.30,221.2 L62.65,221.3 L62.80,221.0 L63.30,220.0 L63.70,219.1 L63.80,218.9 L64.30,218.3 L64.40,218.2 L64.80,219.9 L65.25,222.2 L65.30,222.2 L65.80,222.2 L66.15,222.0 L66.30,221.8 L66.80,221.4 L67.15,221.3 L67.30,221.3 L67.80,221.6 L68.30,221.5 L68.65,221.3 L68.80,221.0 L69.30,220.4 L69.75,220.1 L69.80,220.3 L70.30,222.3 L70.80,223.9 L71.30,224.3 L71.60,224.6 L71.80,224.1 L72.30,222.9 L72.65,222.0 L72.80,221.9 L73.30,221.5 L73.65,221.2 L73.80,221.1 L74.30,221.2 L74.80,221.4 L75.30,221.3 L75.80,221.1 L76.30,221.0 L76.80,221.3 L77.30,221.6 L77.80,221.5 L78.30,220.2 L78.80,219.1 L78.85,219.0 L79.30,218.9 L79.55,218.7 L79.80,219.8 L80.30,221.7 L80.40,222.0 L80.80,221.7 L81.30,221.6 L81.80,221.6 L82.30,221.4 L82.80,221.2 L83.30,221.2 L83.80,221.5 L84.20,221.6 L84.30,221.6 L84.80,220.9 L85.30,220.1 L85.80,221.8 L86.20,223.3 L86.30,226.6 L86.35,228.2 L86.80,241.7 L87.15,252.0 L87.20,253.3 L87.30,259.1 L87.80,288.1 L87.90,294.0 L88.20,294.6 L88.30,295.2 L88.80,297.8 L89.20,299.6 L89.30,300.1 L89.80,299.8 L90.30,299.7 L90.80,299.8 L91.30,299.9 L91.80,299.7 L92.30,299.5 L92.80,299.5 L93.30,299.9 L93.80,298.9 L94.30,297.7 L94.35,297.5 L94.80,297.1 L95.05,297.0 L95.30,298.2 L95.80,300.6 L95.90,301.0 L96.30,300.7 L96.80,300.1 L97.30,299.7 L97.80,299.7 L98.30,299.9 L98.80,299.8 L99.30,299.6 L99.75,299.7 L99.80,299.7 L100.30,299.6 L100.80,299.2 L100.85,299.1 L101.30,300.4 L101.80,301.9 L101.90,302.2 L102.00,302.3 L102.30,277.8 L102.60,253.4 L102.70,249.6 L102.80,245.3 L103.20,228.0 L103.30,227.3 L103.75,224.2 L103.80,224.0 L104.30,222.2 L104.60,221.2 L104.75,221.3 L104.80,221.4 L105.30,221.6 L105.80,221.5 L106.30,221.2 L106.80,221.3 L107.30,221.5 L107.80,221.5 L108.30,221.1 L108.80,220.9 L109.30,221.1 L109.35,221.2 L109.80,220.4 L110.30,219.3 L110.40,219.1 L110.80,218.6 L111.10,218.4 L111.30,219.3 L111.80,221.8 L111.95,222.5 L112.30,222.4 L112.80,221.9 L112.85,221.9 L113.30,221.3 L113.80,221.1 L113.85,221.1 L114.30,221.3 L114.80,221.4 L115.05,221.3 L115.30,220.9 L115.80,220.4 L116.15,220.2 L116.30,220.8 L116.80,222.9 L117.20,224.2 L117.30,224.3 L117.80,230.3 L118.00,232.8 L118.30,235.3 L118.40,236.2 L118.80,257.5 L118.90,262.8 L119.05,275.5 L119.30,297.3 L119.80,298.7 L120.05,299.4 L120.10,299.5 L120.30,299.4 L120.80,299.6 L121.30,299.9 L121.80,300.0 L122.30,299.8 L122.80,299.7 L123.30,299.9 L123.80,300.1 L124.30,299.9 L124.80,299.5 L124.90,299.5 L125.30,298.6 L125.80,297.8 L125.95,297.5 L126.30,297.4 L126.65,297.0 L126.80,297.6 L127.30,299.7 L127.50,300.6 L127.80,300.6 L128.30,300.7 L128.40,300.6 L128.80,300.4 L129.30,299.8 L129.40,299.7 L129.80,299.6 L130.30,299.7 L130.50,299.8 L130.80,299.6 L131.30,299.0 L131.60,298.6 L131.80,299.2 L132.30,301.0 L132.65,302.4 L132.80,302.7 L133.30,303.5 L133.45,303.6 L133.80,302.4 L134.30,300.6 L134.50,300.0 L134.80,300.0 L135.30,300.0 L135.50,300.0 L135.80,299.9 L136.30,299.6 L136.80,299.4 L137.30,299.7 L137.80,300.0 L138.30,299.9 L138.80,299.7 L139.30,299.8 L139.80,300.0 L140.30,300.1 L140.55,300.0 L140.80,299.3 L141.30,297.9 L141.60,297.2 L141.80,297.1 L142.30,297.0 L142.80,299.2 L143.15,300.6 L143.30,300.5 L143.80,300.2 L144.05,300.2 L144.30,300.3 L144.80,300.3 L145.05,300.1 L145.30,300.0 L145.80,299.7 L146.30,299.7 L146.80,299.9 L146.95,299.9 L147.30,299.6 L147.80,298.9 L148.05,298.5 L148.30,299.3 L148.80,301.2 L149.10,302.5 L149.30,302.8 L149.80,303.4 L149.90,303.5 L150.30,302.1 L150.80,300.5 L150.95,300.1 L151.30,300.1 L151.80,300.1 L151.95,300.0 L152.30,299.8 L152.80,299.5 L153.30,299.5 L153.80,299.8 L154.30,299.9 L154.80,299.8 L155.30,299.7 L155.80,299.9 L155.90,299.9 L156.30,299.3 L156.80,298.1 L156.95,297.7 L157.30,297.2 L157.65,296.8 L157.80,297.4 L158.30,299.8 L158.50,300.7 L158.80,300.6 L159.30,300.3 L159.40,300.2 L159.80,299.8 L160.30,299.7 L160.40,299.7 L160.80,300.0 L161.30,300.1 L161.80,299.9 L161.95,299.8 L162.30,299.4 L162.80,299.0 L163.05,298.9 L163.30,299.8 L163.80,301.4 L163.90,301.7 L164.10,285.6 L164.30,269.1 L164.50,252.7 L164.80,239.2 L164.90,234.8 L165.00,229.9 L165.30,228.0 L165.80,224.7 L165.95,223.6 L166.30,222.0 L166.40,221.5 L166.80,221.3 L166.95,221.2 L167.30,221.3 L167.80,221.6 L168.30,221.6 L168.80,221.2 L169.30,221.0 L169.80,221.1 L170.30,221.4 L170.80,221.3 L171.05,221.2 L171.30,220.6 L171.80,219.5 L172.10,219.0 L172.30,219.0 L172.80,218.9 L173.30,220.9 L173.65,222.1 L173.80,222.0 L174.30,221.8 L174.55,221.8 L174.80,221.7 L175.30,221.5 L175.55,221.2 L175.80,221.1 L176.30,221.0 L176.80,221.2 L177.30,221.5 L177.80,221.5 L178.30,221.3 L178.80,221.2 L179.30,221.5 L179.80,221.5 L180.30,221.3 L180.80,221.0 L181.30,221.0 L181.80,221.3 L182.30,221.4 L182.55,221.4 L182.80,221.0 L183.30,220.5 L183.65,220.3 L183.80,220.9 L184.30,225.6 L184.60,228.2 L184.70,228.4 L184.80,228.4 L185.30,228.2 L185.50,228.2 L185.80,227.0 L186.30,225.3 L186.55,224.5 L186.80,224.2 L187.30,223.5 L187.55,223.1 L187.80,222.9 L188.00,222.8 L188.30,222.7 L188.80,222.6 L189.30,222.3 L189.80,221.6 L190.30,221.1 L190.80,220.8 L190.95,220.7 L191.30,219.8 L191.80,218.1 L192.00,217.4 L192.30,216.8 L192.40,216.6 L192.70,214.3 L192.80,214.1 L193.30,213.2 L193.50,212.8 L193.55,212.0 L193.80,206.6 L194.30,195.7 L194.45,192.4 L194.80,184.8 L194.90,182.7 L195.30,184.6 L195.45,185.4 L195.80,187.3 L196.00,188.3 L196.30,187.1 L196.35,186.9 L196.80,184.5 L197.00,183.4 L197.30,184.0 L197.45,184.3 L197.80,186.6 L198.30,190.0 L198.50,191.3 L198.80,190.9 L199.30,190.2 L199.80,187.6 L200.00,186.7 L200.30,186.6 L200.35,186.6 L200.80,187.6 L201.30,188.3 L201.35,188.3 L201.50,188.6 L201.80,187.9 L202.30,187.1 L202.80,186.4 L203.00,186.1 L203.30,186.5 L203.55,186.8 L203.80,186.6 L204.30,186.3 L204.40,186.3 L204.60,185.2 L204.80,184.5 L205.30,182.7 L205.50,182.9 L205.80,206.8 L206.10,230.7 L206.15,238.0 L206.30,259.0 L206.70,315.1 L206.80,312.2 L207.05,304.9 L207.20,300.5 L207.30,299.7 L207.70,296.4 L207.80,296.7 L208.05,297.5 L208.30,298.4 L208.60,299.5 L208.80,299.4 L209.30,299.6 L209.80,299.9 L210.30,299.9 L210.80,299.8 L211.30,299.7 L211.55,299.8 L211.80,299.7 L212.30,299.5 L212.65,299.0 L212.80,299.5 L213.30,300.8 L213.70,302.1 L213.80,302.3 L214.30,303.0 L214.50,303.3 L214.80,302.4 L215.30,300.7 L215.55,299.9 L215.80,299.8 L216.30,299.9 L216.55,300.0 L216.80,300.1 L217.30,300.1 L217.80,299.8 L218.30,299.7 L218.80,299.8 L219.30,299.9 L219.35,299.9 L219.80,298.7 L220.30,297.4 L220.40,297.1 L220.80,297.0 L221.10,296.9 L221.30,298.0 L221.80,300.3 L221.95,300.9 L222.30,300.6 L222.80,300.3 L222.85,300.2 L223.30,300.2 L223.80,300.1 L223.85,300.1 L224.30,299.9 L224.80,299.6 L225.30,299.5 L225.80,299.7 L226.30,299.9 L226.80,299.8 L227.30,299.2 L227.80,298.9 L227.90,298.8 L228.30,300.5 L228.80,302.2 L228.95,302.7 L229.30,302.8 L229.75,303.1 L229.80,302.9 L230.30,301.5 L230.80,300.2 L231.30,299.9 L231.80,299.5 L232.30,299.5 L232.80,299.9 L233.30,300.1 L233.80,300.0 L234.10,299.8 L234.30,299.3 L234.80,298.2 L235.15,297.6 L235.30,297.6 L235.80,297.2 L235.85,297.1 L236.30,298.8 L236.60,299.9 L236.70,300.1 L236.80,299.9 L237.30,298.9 L237.60,298.3 L237.80,297.9 L238.30,296.7 L238.60,295.8 L238.80,295.3 L239.30,294.3 L239.80,293.6 L240.30,292.7 L240.80,291.4 L241.30,290.1 L241.80,289.1 L242.30,288.3 L242.80,287.3 L243.30,286.1 L243.80,285.1 L244.30,284.3 L244.80,283.6 L245.30,282.5 L245.80,281.2 L246.30,280.1 L246.80,279.2 L247.30,278.3 L247.60,277.6 L247.80,271.9 L248.30,257.7 L248.65,245.5 L248.80,240.2 L249.00,233.1 L249.30,229.9 L249.75,224.8 L249.80,224.5 L249.90,223.7 L250.30,223.6 L250.80,223.4 L251.30,224.2 L251.60,224.6 L251.80,224.1 L252.30,222.4 L252.65,221.1 L252.80,220.9 L253.30,220.7 L253.65,220.8 L253.80,220.9 L254.30,221.1 L254.80,221.0 L255.30,220.9 L255.80,221.0 L256.30,221.3 L256.80,221.3 L257.30,221.0 L257.65,220.9 L257.80,220.5 L258.30,219.6 L258.70,218.8 L258.80,218.8 L259.30,218.3 L259.40,218.2 L259.80,219.8 L260.25,221.8 L260.30,221.8 L260.80,221.9 L261.15,222.0 L261.30,221.9 L261.80,221.5 L262.15,221.1 L262.30,221.1 L262.80,221.2 L263.30,221.4 L263.80,221.3 L264.30,221.0 L264.80,220.9 L265.30,221.1 L265.55,221.3 L265.80,221.2 L266.30,220.7 L266.65,220.3 L266.80,220.7 L267.30,222.5 L267.70,224.1 L267.80,226.6 L268.30,238.9 L268.50,243.7 L268.80,268.8 L268.90,277.2 L269.30,296.8 L269.55,296.6 L269.80,297.3 L270.30,298.6 L270.55,299.2 L270.80,299.8 L271.30,299.6 L271.80,299.6 L272.30,299.9 L272.80,300.2 L272.95,300.2 L273.30,299.3 L273.80,297.8 L274.00,297.3 L274.30,297.1 L274.70,297.0 L274.80,297.5 L275.30,299.7 L275.55,300.7 L275.80,300.4 L276.30,300.0 L276.45,300.0 L276.80,300.0 L277.30,300.1 L277.45,300.1 L277.80,300.1 L278.30,299.8 L278.80,299.7 L279.30,299.9 L279.80,299.6 L280.30,298.9 L280.40,298.7 L280.80,299.9 L281.30,301.6 L281.45,302.2 L281.80,302.8 L282.25,303.4 L282.30,303.3 L282.80,301.6 L283.30,300.0 L283.80,300.0 L284.30,300.1 L284.80,300.1 L285.30,299.7 L285.80,299.5 L286.30,299.7 L286.80,299.9 L287.10,299.8 L287.30,299.3 L287.80,298.0 L288.15,297.3 L288.30,297.3 L288.80,297.3 L288.85,297.2 L289.30,299.3 L289.70,300.9 L289.80,300.8 L290.30,300.3 L290.60,300.2 L290.80,300.2 L291.30,300.1 L291.60,299.9 L291.80,299.8 L292.30,299.5 L292.80,299.5 L293.30,299.8 L293.80,300.0 L294.30,299.9 L294.80,299.7 L294.85,299.7 L295.30,299.4 L295.80,299.2 L295.95,299.1 L296.30,300.2 L296.80,301.6 L297.00,302.2 L297.30,302.4 L297.80,303.1 L298.30,301.8 L298.80,300.3 L298.85,300.1 L299.30,299.8 L299.80,299.7 L299.85,299.7 L300.30,300.0 L300.80,300.2 L301.30,300.0 L301.65,299.7 L301.80,299.3 L302.30,298.2 L302.70,297.5 L302.80,297.5 L303.30,297.1 L303.40,297.0 L303.80,298.5 L304.25,300.4 L304.30,300.4 L304.80,300.4 L305.15,300.5 L305.30,300.5 L305.80,300.2 L306.15,299.9 L306.30,299.8 L306.80,299.7 L307.30,299.9 L307.80,300.0 L308.30,299.7 L308.50,299.6 L308.80,299.2 L309.30,298.8 L309.60,298.7 L309.80,299.5 L310.30,301.4 L310.65,302.4 L310.80,302.5 L311.30,303.0 L311.45,303.2 L311.80,302.4 L312.30,301.1 L312.50,300.4 L312.80,300.2 L313.30,299.7 L313.50,299.5 L313.80,299.5 L314.30,299.7 L314.80,299.9 L315.30,299.7 L315.80,299.5 L316.00,299.6 L316.30,299.1 L316.80,298.3 L317.05,297.9 L317.30,297.6 L317.75,297.1 L317.80,297.3 L318.30,299.3 L318.60,300.6 L318.80,300.6 L319.30,300.5 L319.50,300.4 L319.80,300.1 L320.30,299.6 L320.50,299.4 L320.80,299.5 L321.30,299.8 L321.80,300.0 L322.30,299.9 L322.35,299.9 L322.80,299.3 L323.30,299.0 L323.45,298.9 L323.60,299.5 L323.80,290.3 L324.30,267.1 L324.50,257.7 L324.80,252.0 L325.30,242.9 L325.60,236.3 L325.80,233.6 L326.30,226.8 L326.35,226.1 L326.50,224.4 L326.80,223.3 L327.30,221.5 L327.35,221.3 L327.40,221.1 L327.80,221.2 L328.30,221.5 L328.80,221.7 L329.30,221.4 L329.80,221.1 L330.30,221.2 L330.80,221.4 L330.95,221.4 L331.30,220.5 L331.80,219.2 L332.00,218.7 L332.30,218.5 L332.70,218.4 L332.80,219.0 L333.30,221.4 L333.55,222.5 L333.80,222.3 L334.30,221.8 L334.45,221.7 L334.80,221.6 L335.30,221.5 L335.45,221.5 L335.80,221.5 L336.30,221.2 L336.80,220.9 L337.30,221.1 L337.40,221.2 L337.80,221.0 L338.30,220.6 L338.50,220.4 L338.80,221.3 L339.30,223.0 L339.55,223.9 L339.80,224.4 L340.30,225.1 L340.35,225.1 L340.80,223.5 L341.30,221.7 L341.40,221.3 L341.80,221.2 L342.30,221.3 L342.40,221.3 L342.80,221.4 L343.30,221.2 L343.80,221.1 L344.30,221.3 L344.80,221.6 L345.30,221.6 L345.50,221.5 L345.80,220.6 L346.30,219.4 L346.55,218.9 L346.80,218.8 L347.25,218.6 L347.30,218.8 L347.80,220.8 L348.10,221.9 L348.30,221.8 L348.80,221.6 L349.00,221.7 L349.30,221.8 L349.80,221.7 L350.00,221.5 L350.30,221.4 L350.80,221.2 L351.30,221.4 L351.70,221.5 L351.80,221.5 L352.30,220.9 L352.80,220.1 L353.30,221.7 L353.80,223.6 L353.85,223.8 L354.30,224.5 L354.65,224.9 L354.80,224.4 L355.30,222.7 L355.70,221.5 L355.80,221.6 L356.30,221.7 L356.70,221.7 L356.80,221.6 L357.30,221.3 L357.80,221.1 L358.30,221.2 L358.80,221.4 L359.30,221.3 L359.65,221.1 L359.80,220.7 L360.30,219.6 L360.70,219.0 L360.80,219.0 L361.30,218.9 L361.40,218.8 L361.80,220.4 L362.25,222.2 L362.30,222.1 L362.80,221.9 L363.15,221.9 L363.30,221.9 L363.80,221.6 L364.15,221.2 L364.30,221.1 L364.80,220.9 L365.30,221.1 L365.80,221.5 L366.30,221.5 L366.40,221.4 L366.80,220.9 L367.30,220.4 L367.50,220.3 L367.80,221.5 L368.30,223.4 L368.55,224.1 L368.80,224.2 L369.30,224.5 L369.35,224.5 L369.80,223.2 L370.30,221.9 L370.40,221.6 L370.80,221.5 L371.30,221.2 L371.40,221.1 L371.80,221.1 L372.30,221.4 L372.80,221.7 L373.30,221.6 L373.80,221.2 L374.30,221.1 L374.50,221.2 L374.80,220.7 L375.30,219.6 L375.55,219.0 L375.80,218.7 L376.25,218.2 L376.30,218.4 L376.80,220.7 L377.10,222.2 L377.30,222.3 L377.80,222.2 L378.00,222.0 L378.30,221.7 L378.80,221.3 L379.00,221.3 L379.30,221.4 L379.80,221.5 L380.30,221.4 L380.80,221.0 L381.30,220.5 L381.80,220.3 L381.90,220.3 L382.30,221.8 L382.80,223.4 L382.95,223.8 L383.30,224.2 L383.75,224.8 L383.80,224.7 L384.30,223.4 L384.80,221.9 L385.30,221.4 L385.80,221.0 L386.30,221.2 L386.80,221.4 L387.30,221.3 L387.80,221.0 L388.30,221.1 L388.80,221.5 L389.30,221.6 L389.50,221.6 L389.80,220.8 L390.30,219.5 L390.55,218.9 L390.80,218.8 L391.25,218.6 L391.30,218.9 L391.80,221.0 L392.10,222.1 L392.30,221.9 L392.80,221.5 L393.00,221.5 L393.30,221.6 L393.80,221.6 L394.00,221.5 L394.30,221.4 L394.80,221.2 L395.30,221.3 L395.80,221.5 L396.30,221.6 L396.70,221.3 L396.80,221.2 L397.30,220.4 L397.80,220.1 L398.30,222.1 L398.80,225.5 L398.85,225.8 L399.30,227.6 L399.65,229.1 L399.70,229.2 L399.80,230.1 L400.30,235.2 L400.50,237.2 L400.70,263.7 L400.80,277.1 L400.90,290.6 L401.30,295.1 L401.60,298.3 L401.70,298.4 L401.80,298.5 L402.30,299.3 L402.50,299.7 L402.80,299.8 L403.30,299.9 L403.80,299.6 L404.15,299.5 L404.30,299.1 L404.80,298.3 L405.20,297.7 L405.30,297.7 L405.80,297.3 L405.90,297.2 L406.30,298.8 L406.75,300.6 L406.80,300.6 L407.30,300.6 L407.65,300.5 L407.80,300.4 L408.30,300.0 L408.65,299.5 L408.80,299.5 L409.30,299.5 L409.80,299.8 L410.30,300.0 L410.75,299.8 L410.80,299.8 L411.30,299.2 L411.80,298.9 L411.85,298.9 L412.20,300.3 L412.30,298.2 L412.80,287.4 L412.90,285.2 L413.00,282.8 L413.30,271.7 L413.70,257.0 L413.80,252.9 L414.30,234.4 L414.50,227.1 L414.75,224.7 L414.80,224.3 L415.20,221.4 L415.30,221.4 L415.75,221.1 L415.80,221.0 L416.30,221.2 L416.80,221.5 L417.30,221.6 L417.80,221.4 L418.30,221.2 L418.80,221.3 L418.85,221.3 L419.30,220.5 L419.80,219.2 L419.90,218.9 L420.30,218.4 L420.60,218.1 L420.80,219.0 L421.30,221.5 L421.45,222.3 L421.80,222.3 L422.30,222.0 L422.35,221.9 L422.80,221.5 L423.30,221.3 L423.35,221.3 L423.80,221.5 L424.30,221.5 L424.80,221.2 L425.30,221.0 L425.70,221.1 L425.80,221.0 L426.30,220.8 L426.80,220.4 L427.30,221.9 L427.80,223.6 L427.85,223.8 L428.30,224.6 L428.65,225.2 L428.80,224.7 L429.30,223.0 L429.70,221.5 L429.80,221.4 L430.30,221.3 L430.70,221.3 L430.80,221.3 L431.30,221.3 L431.80,221.1 L432.30,221.0 L432.80,221.3 L433.30,221.6 L433.45,221.6 L433.80,220.8 L434.30,219.4 L434.50,218.9 L434.80,218.7 L435.20,218.6 L435.30,219.1 L435.80,221.3 L436.05,222.3 L436.30,222.0 L436.80,221.5 L436.95,221.4 L437.30,221.4 L437.80,221.4 L437.95,221.4 L438.30,221.5 L438.80,221.3 L439.30,221.2 L439.80,221.4 L439.85,221.5 L440.30,221.2 L440.80,220.6 L440.95,220.4 L441.30,221.3 L441.80,222.9 L442.00,223.7 L442.30,224.2 L442.80,233.8 L442.90,235.3 L443.10,290.6 L443.30,291.7 L443.80,294.4 L443.85,294.7 L444.00,296.1 L444.30,296.8 L444.80,298.0 L444.85,298.1 L445.30,299.1 L445.80,299.8 L446.30,299.7 L446.80,299.8 L447.30,299.9 L447.50,299.9 L447.80,299.1 L448.30,297.7 L448.55,297.1 L448.80,297.0 L449.25,297.0 L449.30,297.3 L449.80,299.7 L450.10,300.9 L450.30,300.7 L450.80,300.3 L451.00,300.2 L451.30,300.2 L451.80,300.2 L452.00,300.1 L452.30,300.0 L452.80,299.6 L453.30,299.5 L453.80,299.7 L454.30,299.9 L454.45,299.9 L454.80,299.5 L455.30,298.9 L455.55,298.7 L455.80,299.6 L456.10,300.8 L456.30,285.7 L456.60,263.0 L456.80,242.5 L456.90,232.3 L457.30,229.3 L457.40,228.6 L457.60,226.3 L457.80,225.1 L458.30,222.6 L458.45,221.8 L458.60,221.5 L458.80,221.5 L459.30,221.4 L459.45,221.2 L459.80,221.1 L460.30,221.0 L460.80,221.3 L461.30,221.6 L461.80,221.5 L462.20,221.3 L462.30,221.0 L462.80,219.9 L463.25,219.1 L463.30,219.1 L463.80,218.7 L463.95,218.6 L464.30,219.9 L464.80,221.8 L465.30,221.8 L465.70,221.9 L465.80,221.9 L466.30,221.7 L466.70,221.3 L466.80,221.3 L467.30,221.2 L467.80,221.5 L468.30,221.6 L468.65,221.5 L468.80,221.3 L469.30,220.5 L469.75,220.0 L469.80,220.2 L470.30,222.2 L470.80,224.0 L471.30,224.4 L471.60,224.6 L471.80,224.0 L472.30,222.7 L472.65,221.9 L472.80,221.9 L473.30,221.7 L473.65,221.4 L473.80,221.3 L474.30,221.1 L474.80,221.3 L475.30,221.4 L475.80,221.2 L476.30,221.0 L476.80,221.1 L477.00,221.2 L477.30,220.8 L477.80,219.8 L478.05,219.2 L478.30,218.9 L478.75,218.4 L478.80,218.6 L479.30,221.0 L479.60,222.4 L479.80,222.4 L480.30,222.0 L480.50,221.8 L480.80,221.4 L481.30,221.1 L481.50,221.0 L481.80,221.2 L482.30,221.4 L482.80,221.3 L483.30,221.2 L483.40,221.2 L483.80,220.9 L484.30,220.8 L484.50,220.7 L484.80,221.6 L485.30,223.0 L485.55,223.7 L485.80,223.9 L486.30,224.6 L486.35,224.7 L486.80,223.5 L487.30,221.9 L487.40,221.5 L487.80,221.2 L488.30,221.1 L488.40,221.1 L488.80,221.4 L489.30,221.6 L489.80,221.5 L490.30,221.2 L490.80,221.2 L491.30,221.4 L491.55,221.5 L491.80,220.8 L492.30,219.4 L492.60,218.7 L492.80,218.5 L493.30,218.4 L493.80,220.9 L494.15,222.4 L494.30,222.3 L494.80,221.9 L495.05,221.7 L495.30,221.6 L495.80,221.6 L496.05,221.6 L496.30,221.6 L496.80,221.3 L497.30,221.0 L497.80,221.0 L498.15,221.2 L498.30,221.2 L498.80,220.8 L499.25,220.2 L499.30,220.4 L499.70,221.7 L499.80,224.8 L500.20,237.3 L500.30,249.4 L500.50,273.1 L500.80,290.8 L500.90,296.6 L501.10,297.8 L501.30,298.1 L501.80,298.8 L502.15,298.2 L502.30,298.3 L502.80,299.1 L503.15,299.7 L503.30,299.9 L503.80,299.7 L504.30,299.5 L504.80,299.7 L505.30,300.0 L505.65,300.1 L505.80,299.8 L506.30,298.4 L506.70,297.4 L506.80,297.4 L507.30,297.2 L507.40,297.2 L507.80,299.0 L508.25,300.8 L508.30,300.7 L508.80,300.2 L509.15,300.0 L509.30,299.9 L509.80,300.0 L510.15,300.0 L510.30,300.0 L510.80,299.9 L511.30,299.7 L511.80,299.9 L511.95,300.0 L512.30,299.8 L512.80,299.3 L513.05,299.0 L513.30,299.6 L513.80,301.2 L514.10,302.3 L514.30,302.6 L514.80,303.3 L514.90,303.4 L515.30,302.1 L515.80,300.4 L515.95,299.9 L516.30,299.9 L516.80,300.1 L516.95,300.2 L517.30,300.2 L517.80,300.0 L518.30,299.8 L518.80,299.8 L519.30,300.0 L519.75,300.0 L519.80,299.8 L520.30,298.4 L520.80,297.3 L521.30,297.2 L521.50,297.2 L521.80,298.6 L522.30,300.7 L522.35,300.9 L522.80,300.6 L523.25,300.4 L523.30,300.4 L523.80,300.4 L524.25,300.2 L524.30,300.2 L524.80,299.9 L525.30,299.6 L525.80,299.7 L526.30,300.0 L526.80,300.0 L527.30,299.4 L527.80,298.9 L527.90,298.8 L528.30,300.5 L528.80,302.4 L528.95,302.9 L529.30,303.1 L529.75,303.3 L529.80,303.2 L530.30,301.6 L530.80,300.3 L531.30,300.2 L531.80,299.8 L532.30,299.6 L532.80,299.9 L533.30,300.2 L533.80,300.2 L534.10,300.1 L534.30,299.6 L534.80,298.4 L535.15,297.7 L535.30,297.7 L535.80,297.4 L535.85,297.4 L536.30,299.1 L536.70,300.6 L536.80,300.5 L537.30,300.3 L537.60,300.4 L537.80,300.4 L538.30,300.3 L538.60,300.1 L538.80,300.0 L539.30,299.9 L539.80,300.1 L540.30,300.3 L540.80,300.2 L540.90,300.2 L541.30,299.5 L541.80,298.9 L542.00,298.8 L542.30,300.0 L542.80,301.8 L543.05,302.7 L543.30,302.8 L543.80,303.2 L543.85,303.3 L544.30,302.1 L544.80,300.9 L544.90,300.6 L545.30,300.6 L545.80,300.1 L545.90,300.1 L546.30,299.9 L546.80,300.0 L547.30,300.2 L547.80,300.0 L548.30,299.8 L548.80,298.6 L549.30,297.9 L549.35,297.8 L549.80,297.7 L550.05,297.5 L550.30,298.5 L550.80,300.5 L550.90,300.9 L551.30,300.8 L551.80,300.8 L552.30,300.5 L552.80,299.9 L553.30,299.7 L553.80,299.9 L554.30,300.2 L554.80,300.1 L555.10,300.0 L555.30,299.8 L555.80,299.4 L556.20,299.2 L556.30,299.7 L556.80,301.5 L557.25,302.9 L557.30,302.9 L557.80,303.1 L558.05,303.4 L558.30,302.7 L558.80,301.4 L559.10,300.5 L559.30,300.4 L559.80,300.0 L560.10,299.8 L560.30,299.8 L560.80,300.1 L561.30,300.4 L561.80,300.4 L562.20,300.2 L562.30,299.9 L562.80,298.7 L563.25,297.9 L563.30,297.9 L563.80,297.6 L563.95,297.4 L564.30,298.8 L564.80,300.7 L565.30,300.6 L565.70,300.7 L565.80,300.7 L566.30,300.5 L566.70,300.2 L566.80,300.1 L567.30,300.1 L567.80,300.3 L568.30,300.5 L568.65,300.4 L568.80,300.2 L569.30,299.4 L569.75,298.9 L569.80,299.1 L570.30,301.0 L570.80,302.9 L571.30,303.3 L571.60,303.5 L571.80,302.9 L572.30,301.5 L572.65,300.7 L572.80,300.7 L573.30,300.6 L573.65,300.3 L573.80,300.2 L574.30,300.0 L574.80,300.2 L575.30,300.3 L575.80,300.1 L576.30,299.9 L576.65,299.9 L576.80,299.6 L577.30,298.9 L577.70,298.2 L577.80,298.1 L578.30,297.6 L578.40,297.5 L578.80,299.1 L579.25,301.1 L579.30,301.1 L579.80,301.1 L580.15,300.9 L580.30,300.8 L580.80,300.2 L581.15,299.9 L581.30,299.9 L581.80,300.1 L582.30,300.4 L582.80,300.3 L583.25,300.1 L583.30,300.1 L583.80,299.7 L584.30,299.6 L584.35,299.5 L584.80,301.1 L585.30,302.6 L585.40,302.8 L585.80,303.1 L586.20,303.6 L586.30,303.3 L586.80,302.0 L587.25,300.6 L587.30,300.6 L587.80,300.2 L588.25,300.0 L588.30,300.0 L588.80,300.3 L589.30,300.6 L589.80,300.5 L590.30,300.2 L590.75,300.2 L590.80,300.1 L591.30,299.2 L591.80,298.1 L592.30,297.5 L592.50,297.2 L592.80,298.4 L593.30,300.8 L593.35,301.1 L593.80,301.1 L594.25,301.0 L594.30,301.0 L594.80,300.5 L595.25,300.2 L595.30,300.3 L595.80,300.5 L596.30,300.6 L596.80,300.4 L597.20,300.1 L597.30,300.0 L597.80,299.5 L598.30,299.3 L598.80,301.1 L599.30,302.7 L599.35,302.8 L599.80,303.2 L600.15,303.8 L600.30,303.4 L600.80,302.2 L601.20,301.0 L601.30,300.9 L601.80,300.4 L602.20,300.2 L602.30,300.2 L602.80,300.3 L603.30,300.4 L603.80,300.3 L604.30,300.0 L604.80,300.2 L605.15,300.4 L605.30,300.2 L605.80,299.2 L606.20,298.2 L606.30,298.1 L606.80,297.6 L606.90,297.5 L607.30,299.4 L607.75,301.5 L607.80,301.5 L608.30,301.1 L608.65,300.7 L608.80,300.5 L609.30,300.2 L609.65,300.2 L609.80,300.3 L610.30,300.5 L610.80,300.4 L611.30,300.3 L611.55,300.3 L611.80,300.2 L612.30,300.0 L612.65,299.8 L612.80,300.2 L613.30,301.6 L613.70,302.8 L613.80,302.9 L614.30,303.5 L614.50,303.9 L614.80,303.1 L615.30,301.5 L615.55,300.6 L615.80,300.4 L616.30,300.3 L616.55,300.4 L616.80,300.6 L617.30,300.8 L617.80,300.6 L618.30,300.3 L618.80,300.4 L619.30,300.6 L619.35,300.6 L619.80,299.5 L620.30,298.1 L620.40,297.9 L620.80,297.5 L621.10,297.4 L621.30,298.4 L621.80,300.9 L621.95,301.6 L622.30,301.4 L622.80,301.0 L622.85,300.9 L623.30,300.7 L623.80,300.7 L623.85,300.7 L624.30,300.7 L624.80,300.5 L624.85,300.4 L625.30,299.8 L625.80,299.4 L625.95,299.3 L626.30,300.7 L626.80,302.5 L627.00,303.1 L627.30,303.3 L627.80,303.8 L628.30,302.6 L628.80,301.3 L628.85,301.2 L629.30,300.9 L629.80,300.4 L629.85,300.4 L630.30,300.3 L630.80,300.5 L631.30,300.6 L631.80,300.4 L632.30,300.2 L632.80,300.4 L633.30,300.7 L633.65,300.8 L633.80,300.5 L634.30,299.2 L634.70,298.1 L634.80,298.1 L635.30,297.9 L635.40,297.9 L635.80,299.7 L636.25,301.5 L636.30,301.4 L636.80,300.9 L637.15,300.7 L637.30,300.6 L637.80,300.7 L638.15,300.7 L638.30,300.7 L638.80,300.6 L639.30,300.4 L639.40,300.5 L639.80,300.3 L640.30,300.1 L640.50,299.9 L640.80,300.8 L641.30,302.2 L641.55,302.9 L641.80,303.2 L642.30,303.9 L642.35,304.0 L642.80,302.8 L643.30,301.1 L643.40,300.8 L643.80,300.5 L644.30,300.5 L644.40,300.5 L644.80,300.8 L645.30,300.9 L645.80,300.7 L646.30,300.5 L646.80,300.5 L647.30,300.7 L647.35,300.7 L647.80,299.6 L648.30,298.3 L648.40,298.0 L648.80,297.7 L649.10,297.6 L649.30,298.6 L649.80,301.1 L649.95,301.8 L650.30,301.5 L650.80,301.1 L650.85,301.1 L651.30,300.9 L651.80,300.9 L651.85,300.9 L652.30,300.9 L652.80,300.5 L653.30,300.3 L653.55,300.3 L653.80,300.2 L654.30,300.0 L654.65,299.7 L654.80,300.2 L655.30,301.8 L655.70,303.1 L655.80,303.2 L656.30,304.1 L656.50,304.4 L656.80,303.6 L657.30,301.9 L657.55,300.9 L657.80,300.7 L658.30,300.5 L658.55,300.6 L658.80,300.7 L659.30,300.7 L659.80,300.5 L660.30,300.4 L660.80,300.6 L661.30,301.0 L661.80,301.0 L661.85,300.9 L662.30,299.7 L662.80,298.5 L662.90,298.3 L663.30,298.2 L663.60,298.1 L663.80,298.9 L664.30,300.9 L664.45,301.4 L664.80,301.1 L665.30,300.9 L665.35,300.9 L665.80,301.0 L666.30,300.9 L666.35,300.9 L666.80,300.7 L667.30,300.6 L667.80,300.8 L668.25,301.0 L668.30,301.0 L668.80,300.4 L669.30,299.6 L669.35,299.5 L669.80,301.0 L670.30,302.9 L670.40,303.3 L670.80,303.9 L671.20,304.2 L671.30,303.9 L671.80,302.2 L672.25,300.9 L672.30,301.0 L672.80,301.1 L673.25,301.1 L673.30,301.1 L673.80,300.8 L674.30,300.6 L674.80,300.7 L675.30,300.9 L675.80,300.7 L676.30,299.4 L676.80,298.3 L676.85,298.2 L677.30,298.2 L677.55,298.2 L677.80,299.3 L678.30,301.4 L678.40,301.8 L678.80,301.4 L679.30,301.3 L679.80,301.3 L680.30,301.0 L680.80,300.6 L681.30,300.4 L681.80,300.6 L681.95,300.7 L682.30,300.6 L682.80,300.1 L683.05,299.8 L683.30,300.5 L683.80,302.3 L684.10,285.0 L684.30,273.0 L684.60,243.5 L684.80,236.7 L684.90,233.3 L685.00,229.5 L685.30,227.5 L685.80,224.2 L685.95,223.3 L686.30,222.2 L686.60,221.3 L686.80,221.4 L686.95,221.4 L687.30,221.3 L687.80,221.1 L688.30,221.0 L688.80,221.3 L689.30,221.6 L689.80,221.6 L690.00,221.4 L690.30,220.6 L690.80,219.5 L691.05,219.0 L691.30,218.9 L691.75,218.7 L691.80,218.9 L692.30,220.8 L692.60,221.9 L692.80,221.7 L693.30,221.7 L693.50,221.7 L693.80,221.8 L694.30,221.6 L694.50,221.4 L694.80,221.3 L695.30,221.2 L695.80,221.4 L696.30,221.6 L696.40,221.6 L696.80,221.1 L697.30,220.3 L697.50,220.0 L697.80,221.0 L698.30,223.0 L698.55,224.0 L698.80,224.3 L699.30,224.7 L699.35,224.7 L699.80,223.2 L700.30,221.9 L700.40,221.7 L700.80,221.8 L701.30,221.6 L701.40,221.6 L701.80,221.3 L702.30,221.1 L702.80,221.3 L703.30,221.4 L703.80,221.2 L704.30,221.0 L704.80,221.1 L705.15,221.3 L705.30,221.1 L705.80,220.2 L706.20,219.2 L706.30,219.1 L706.80,218.5 L706.90,218.4 L707.30,220.3 L707.75,222.4 L707.80,222.4 L708.30,222.1 L708.65,221.7 L708.80,221.5 L709.30,221.1 L709.65,221.1 L709.80,221.2 L710.30,221.4 L710.75,221.4 L710.80,221.3 L711.30,220.7 L711.80,220.3 L711.85,220.3 L712.30,222.1 L712.80,223.9 L712.90,224.2 L713.30,224.4 L713.70,224.6 L713.80,224.2 L714.30,222.8 L714.75,221.6 L714.80,221.6 L715.30,221.4 L715.75,221.1 L715.80,221.1 L716.30,221.1 L716.80,221.4 L717.30,221.6 L717.80,221.5 L718.30,221.2 L718.80,221.2 L719.30,221.4 L719.35,221.4 L719.80,220.4 L720.30,219.0 L720.40,218.8 L720.80,218.3 L721.10,218.2 L721.30,219.2 L721.80,221.7 L721.95,222.4 L722.30,222.2 L722.80,221.8 L722.85,221.8 L723.30,221.5 L723.80,221.5 L723.85,221.5 L724.30,221.6 L724.80,221.3 L724.85,221.3 L725.30,220.6 L725.80,220.2 L725.95,220.1 L726.30,221.5 L726.80,223.3 L727.00,223.9 L727.30,224.2 L727.80,224.6 L728.30,223.3 L728.80,222.1 L728.85,222.0 L729.30,221.7 L729.80,221.3 L729.85,221.2 L730.30,221.1 L730.80,221.3 L731.30,221.4 L731.80,221.2 L732.30,221.0 L732.80,221.1 L733.30,221.5 L733.80,221.6 L734.30,221.4 L734.50,221.3 L734.80,220.6 L735.30,219.6 L735.55,219.2 L735.80,219.0 L736.25,218.6 L736.30,218.8 L736.80,220.6 L737.10,221.8 L737.30,221.8 L737.80,221.8 L738.00,221.9 L738.30,221.8 L738.80,221.5 L739.00,221.3 L739.30,221.2 L739.80,221.3 L740.30,221.6 L740.80,221.6 L741.30,221.3 L741.80,221.0 L742.30,221.1 L742.80,221.4 L743.30,221.3 L743.80,221.1 L744.30,221.1 L744.80,221.5 L745.30,221.7 L745.80,221.5 L746.30,221.2 L746.80,221.2 L747.30,221.4 L747.80,221.4 L748.30,221.1 L748.80,220.9 L749.30,221.2 L749.80,221.5 L750.30,221.5 L750.80,221.3 L751.30,221.3 L751.80,221.5 L752.30,221.6 L752.80,221.3 L753.30,221.0 L753.80,221.0 L754.30,221.3 L754.80,221.4 L755.30,221.2 L755.80,221.2 L756.30,221.4 L756.80,221.7 L757.30,221.5 L757.80,221.2 L758.30,221.1 L758.80,221.3 L759.30,221.4 L759.80,221.2 L760.30,221.0 L760.80,221.2 L761.30,221.5 L761.80,221.6 L762.30,221.4 L762.80,221.2 L763.30,221.4 L763.80,221.5 L764.30,221.3 L764.80,221.0 L765.30,221.0 L765.80,221.3 L766.30,221.5 L766.80,221.3 L767.30,221.2 L767.80,221.4 L768.30,221.6 L768.80,221.5 L769.30,221.2 L769.80,221.0 L770.30,221.2 L770.80,221.4 L771.30,221.3 L771.80,221.1 L772.30,221.2 L772.80,221.5 L773.30,221.7 L773.80,221.4 L774.30,221.2 L774.80,221.2 L775.30,221.4 L775.80,221.3 L776.30,221.0 L776.80,221.0 L777.30,221.3 L777.80,221.6 L778.30,221.5 L778.80,221.3 L779.30,221.3 L779.80,221.5 L780.30,221.5 L780.80,221.2 L781.15,221.0 L781.30,220.8 L781.80,220.5 L782.25,220.4 L782.30,220.5 L782.80,222.3 L783.30,223.8 L783.80,224.4 L784.10,224.9 L784.30,224.4 L784.80,223.0 L785.15,221.8 L785.30,221.7 L785.80,221.2 L786.15,221.1 L786.30,221.1 L786.80,221.3 L787.30,221.4 L787.80,221.1 L788.30,221.0 L788.80,221.3 L789.30,221.6 L789.80,221.6 L790.30,221.3 L790.80,221.2 L791.30,221.4 L791.40,221.4 L791.80,220.6 L792.30,219.3 L792.45,218.8 L792.80,218.4 L793.15,218.2 L793.30,218.9 L793.80,221.4 L794.00,222.4 L794.30,222.3 L794.80,221.9 L794.90,221.8 L795.30,221.5 L795.80,221.5 L795.90,221.5 L796.30,221.6 L796.55,221.6 L796.80,221.2 L797.30,220.4 L797.65,220.0 L797.80,220.5 L798.30,222.4 L798.70,224.0 L798.80,224.1 L799.30,224.5 L799.50,224.7 L799.80,223.7 L800.30,222.3 L800.55,221.7 L800.80,221.8 L801.30,221.7 L801.55,221.5 L801.80,221.4 L802.30,221.1 L802.80,221.2 L803.30,221.4 L803.80,221.3 L804.30,221.0 L804.80,221.0 L805.30,221.4 L805.80,221.6 L806.15,221.5 L806.30,221.1 L806.80,219.8 L807.20,219.0 L807.30,218.9 L807.80,218.8 L807.90,218.7 L808.30,220.4 L808.75,222.1 L808.80,222.0 L809.30,221.6 L809.65,221.5 L809.80,221.6 L810.30,221.6 L810.65,221.4 L810.80,221.4 L811.30,221.2 L811.80,221.2 L811.95,221.3 L812.30,221.2 L812.80,220.9 L813.05,220.5 L813.30,221.2 L813.80,222.6 L814.10,223.6 L814.30,223.9 L814.80,224.7 L814.90,224.9 L815.30,223.6 L815.80,221.9 L815.95,221.4 L816.30,221.2 L816.80,221.4 L816.95,221.5 L817.30,221.6 L817.80,221.6 L818.30,221.3 L818.80,221.2 L819.30,221.4 L819.80,221.4 L820.30,221.2 L820.80,220.9 L821.30,221.1 L821.65,221.3 L821.80,221.1 L822.30,220.1 L822.70,219.1 L822.80,218.9 L823.30,218.5 L823.40,218.5 L823.80,220.4 L824.25,222.5 L824.30,222.5 L824.80,222.1 L825.15,221.6 L825.30,221.5 L825.80,221.2 L826.15,221.2 L826.30,221.3 L826.80,221.4 L827.30,221.2 L827.80,221.1 L828.25,221.3 L828.30,221.3 L828.80,221.1 L829.30,220.7 L829.35,220.6 L829.80,221.8 L830.30,223.4 L830.40,223.7 L830.80,224.3 L831.20,224.9 L831.30,224.6 L831.80,222.9 L832.25,221.3 L832.30,221.3 L832.80,221.2 L833.25,221.4 L833.30,221.4 L833.80,221.6 L834.30,221.4 L834.80,221.2 L835.30,221.3 L835.80,221.5 L836.30,221.4 L836.80,221.1 L837.25,220.9 L837.30,220.8 L837.80,220.0 L838.30,219.1 L838.80,218.7 L839.00,218.5 L839.30,219.7 L839.80,222.0 L839.85,222.2 L840.30,222.3 L840.75,222.1 L840.80,222.1 L841.30,221.5 L841.75,221.0 L841.80,221.0 L842.30,221.1 L842.80,221.3 L843.30,221.3 L843.40,221.3 L843.80,220.7 L844.30,220.3 L844.50,220.2 L844.80,221.4 L845.30,223.4 L845.55,224.2 L845.80,224.4 L846.30,224.7 L846.35,224.7 L846.80,223.3 L847.30,222.0 L847.40,221.7 L847.80,221.6 L848.30,221.1 L848.40,221.1 L848.80,220.9 L849.30,221.2 L849.80,221.5 L850.30,221.5 L850.80,221.3 L851.30,221.3 L851.80,221.5 L852.30,221.6 L852.80,221.3 L853.05,221.1 L853.30,220.5 L853.80,219.4 L854.10,218.9 L854.30,218.9 L854.80,218.6 L855.30,220.6 L855.65,222.0 L855.80,222.0 L856.30,222.0 L856.55,222.0 L856.80,222.0 L857.30,221.7 L857.55,221.4 L857.80,221.2 L858.30,221.1 L858.65,221.2 L858.80,221.1 L859.30,220.8 L859.75,220.2 L859.80,220.4 L860.30,221.9 L860.70,223.3 L860.80,224.2 L861.30,227.2 L861.60,229.0 L861.80,229.2 L862.30,234.6 L862.50,236.7 L862.65,253.2 L862.80,270.2 L863.20,297.6 L863.30,297.9 L863.65,299.0 L863.80,299.4 L864.00,300.0 L864.30,299.8 L864.80,299.5 L865.30,299.5 L865.80,299.8 L866.30,300.0 L866.80,299.9 L867.30,299.7 L867.80,299.8 L868.30,300.1 L868.65,300.1 L868.80,299.7 L869.30,298.3 L869.70,297.2 L869.80,297.1 L870.30,296.9 L870.40,296.9 L870.80,298.8 L871.25,300.7 L871.30,300.7 L871.80,300.2 L872.15,300.1 L872.30,300.1 L872.80,300.2 L873.15,300.2 L873.30,300.2 L873.80,300.0 L874.30,299.7 L874.45,299.6 L874.80,299.4 L875.30,299.1 L875.55,298.9 L875.80,299.7 L876.30,301.1 L876.60,302.1 L876.80,302.3 L877.30,303.1 L877.40,303.3 L877.80,302.3 L878.30,300.8 L878.45,300.2 L878.80,300.0 L879.30,299.8 L879.45,299.8 L879.80,300.0 L880.30,300.0 L880.80,299.7 L881.30,299.5 L881.80,299.6 L882.30,299.8 L882.80,299.9 L883.30,299.7 L883.80,299.7 L884.30,299.9 L884.80,299.1 L885.30,297.8 L885.35,297.7 L885.80,297.0 L886.05,296.8 L886.30,297.9 L886.80,300.2 L886.90,300.7 L887.30,300.6 L887.80,300.2 L888.30,299.8 L888.80,299.7 L889.30,300.1 L889.80,300.1 L890.30,299.8 L890.80,299.7 L891.00,299.7 L891.30,299.6 L891.60,299.4 L891.80,284.3 L892.10,261.6 L892.20,254.4 L892.30,250.9 L892.80,233.8 L892.90,230.4 L893.15,230.3 L893.30,230.0 L893.80,229.0 L893.95,228.7 L894.30,226.4 L894.80,222.9 L895.00,222.2 L895.30,222.0 L895.80,222.0 L896.00,222.1 L896.30,222.2 L896.80,222.1 L897.30,221.7 L897.80,221.6 L898.30,221.8 L898.80,222.0 L899.30,221.9 L899.50,221.8 L899.80,221.0 L900.30,220.0 L900.55,219.6 L900.80,219.6 L901.25,219.4 L901.30,219.6 L901.80,221.6 L902.10,222.7 L902.30,222.5 L902.80,222.4 L903.00,222.3 L903.30,222.3 L903.80,222.0 L904.00,221.7 L904.30,221.6 L904.80,221.5 L905.30,221.8 L905.80,222.1 L906.30,222.0 L906.80,221.8 L907.30,221.8 L907.80,222.0 L908.30,222.0 L908.80,221.7 L909.30,221.5 L909.80,221.6 L910.30,221.9 L910.65,221.9 L910.80,221.8 L911.30,221.1 L911.75,220.7 L911.80,220.9 L912.30,227.2 L912.50,229.7 L912.80,230.5 L913.30,230.3 L913.60,230.1 L913.80,229.2 L914.30,227.1 L914.65,225.9 L914.80,225.8 L915.30,225.2 L915.65,224.6 L915.80,224.3 L916.00,224.1 L916.30,223.7 L916.80,223.5 L917.30,223.4 L917.80,222.9 L918.30,222.1 L918.80,221.5 L919.10,221.3 L919.30,220.8 L919.80,219.3 L920.00,218.6 L920.15,217.3 L920.30,216.1 L920.80,212.3 L920.85,212.0 L921.30,211.2 L921.70,231.7 L921.80,236.3 L921.90,241.0 L922.30,273.3 L922.60,297.3 L922.80,313.3 L922.90,321.4 L923.30,309.1 L923.50,303.0 L923.60,302.2 L923.80,300.7 L924.20,297.8 L924.30,298.0 L924.80,299.0 L924.85,299.1 L925.20,299.3 L925.30,299.2 L925.80,298.6 L925.95,298.5 L926.30,299.9 L926.80,301.8 L927.00,302.5 L927.30,302.7 L927.80,303.1 L928.30,301.8 L928.80,300.5 L928.85,300.4 L929.30,300.3 L929.80,299.8 L929.85,299.8 L930.30,299.6 L930.80,299.7 L931.30,299.9 L931.75,299.8 L931.80,299.7 L932.30,298.3 L932.80,297.2 L933.30,297.2 L933.50,273.3 L933.80,238.8 L934.30,195.5 L934.35,191.2 L934.60,168.3 L934.80,172.3 L935.20,180.5 L935.25,181.0 L935.30,181.5 L935.80,186.8 L936.00,188.8 L936.25,188.6 L936.30,188.6 L936.80,188.2 L937.30,188.0 L937.80,188.2 L938.30,188.4 L938.80,188.4 L939.30,188.1 L939.40,188.1 L939.80,187.8 L940.30,187.6 L940.50,187.4 L940.80,188.5 L941.30,189.9 L941.55,190.5 L941.80,190.6 L942.30,191.2 L942.35,191.3 L942.80,190.1 L943.30,188.5 L943.40,188.2 L943.80,187.8 L944.30,187.6 L944.40,187.6 L944.80,187.8 L945.30,188.1 L945.80,187.9 L946.30,187.6 L946.80,187.5 L947.30,186.5 L947.80,185.4 L947.85,185.3 L947.90,185.2 L948.30,206.0 L948.55,218.9 L948.70,227.5 L948.80,234.0 L949.30,266.5 L949.40,273.0 L949.80,297.3 L950.10,315.3 L950.30,310.6 L950.60,303.5 L950.80,301.4 L951.20,297.5 L951.30,297.7 L951.80,299.0 L952.20,300.1 L952.30,300.1 L952.80,299.9 L953.30,299.5 L953.80,299.5 L954.30,299.8 L954.75,299.9 L954.80,299.9 L955.30,299.3 L955.80,298.7 L955.85,298.6 L956.30,300.4 L956.80,302.4 L956.90,302.8 L957.30,303.1 L957.70,303.3 L957.80,303.0 L958.30,301.3 L958.75,300.0 L958.80,300.0 L959.30,300.0 L959.75,299.8 L959.80,299.7 L960.30,299.5 L960.80,299.6 L961.30,300.0 L961.80,300.1 L962.25,300.0 L962.30,299.8 L962.80,298.5 L963.30,297.5 L963.80,297.3 L964.00,297.2 L964.30,298.4 L964.80,300.2 L964.85,300.4 L965.30,300.1 L965.50,300.1 L965.75,299.7 L965.80,299.6 L966.30,298.5 L966.75,297.3 L966.80,297.2 L967.30,295.9 L967.80,295.0 L968.30,294.2 L968.80,293.2 L969.30,291.8 L969.80,290.5 L970.30,289.5 L970.80,288.7 L971.30,287.6 L971.80,286.4 L972.30,285.3 L972.80,284.6 L973.30,283.8 L973.80,282.6 L974.30,281.2 L974.80,280.2 L975.30,279.3 L975.80,278.3 L976.30,276.9 L976.80,275.7 L977.30,274.9 L977.80,274.2 L978.30,273.2 L978.80,271.9 L979.30,270.8 L979.50,270.4 L979.60,270.2 L979.80,263.4 L980.20,249.6 L980.30,246.0 L980.60,235.1 L980.80,228.7 L981.00,222.2 L981.30,222.7 L981.65,223.5 L981.80,223.5 L982.00,223.6 L982.30,224.1 L982.45,224.4 L982.80,223.4 L983.30,221.7 L983.50,221.0 L983.80,220.9 L984.30,221.0 L984.50,221.0 L984.80,221.2 L985.30,221.1 L985.80,220.7 L986.30,220.6 L986.80,220.8 L987.30,220.9 L987.80,220.7 L988.30,220.5 L988.80,220.7 L989.30,221.1 L989.40,221.1 L989.80,220.3 L990.30,219.0 L990.45,218.6 L990.80,218.2 L991.15,218.0 L991.30,218.7 L991.80,221.1 L992.00,221.9 L992.30,221.7 L992.80,221.1 L992.90,221.0 L993.30,220.8 L993.80,220.9 L993.90,220.9 L994.30,221.1 L994.80,221.0 L995.30,220.8 L995.80,220.9 L996.30,221.2 L996.80,221.1 L997.30,220.8 L997.80,220.6 L998.30,220.8 L998.70,220.9 L998.80,220.9 L999.30,220.4 L999.80,219.7 L1000.30,221.5 L1000.80,223.6 L1000.85,223.8 L1001.30,224.4 L1001.65,224.7 L1001.80,224.1 L1002.30,222.3 L1002.70,221.1 L1002.80,221.1 L1003.30,221.1 L1003.70,221.0 L1003.80,221.0 L1004.30,220.7 L1004.80,220.6 L1005.30,220.9 L1005.80,221.2 L1006.30,221.2 L1006.80,220.9 L1007.30,220.9 L1007.80,221.2 L1008.30,221.2 L1008.80,220.9 L1008.90,220.8 L1009.30,219.8 L1009.80,218.8 L1009.95,218.5 L1010.30,218.5 L1010.65,218.3 L1010.80,219.0 L1011.30,221.0 L1011.50,221.8 L1011.70,221.7" fill="none" stroke="#00989e" stroke-width="1.7" stroke-linejoin="round" opacity="0.5"/>
<path d="M12.30,221.6 L12.80,221.3 L13.30,221.0 L13.80,221.1 L14.30,221.3 L14.80,221.3 L15.30,221.1 L15.80,221.1 L16.30,221.4 L16.80,221.7 L17.30,221.5 L17.80,221.2 L18.30,221.2 L18.80,221.4 L19.30,221.4 L19.80,221.1 L20.30,220.9 L20.80,221.1 L21.30,221.5 L21.80,221.5 L22.30,221.3 L22.80,221.2 L23.30,221.4 L23.80,221.6 L24.30,221.4 L24.80,221.0 L25.30,221.0 L25.80,221.3 L26.30,221.4 L26.80,221.3 L27.30,221.1 L27.80,221.4 L28.30,221.6 L28.80,221.6 L29.30,221.2 L29.80,221.1 L30.30,221.2 L30.80,221.4 L31.30,221.2 L31.80,221.0 L32.30,221.1 L32.80,221.5 L33.30,221.6 L33.80,221.4 L34.30,221.2 L34.80,221.3 L35.30,221.5 L35.80,221.4 L36.30,221.0 L36.80,220.9 L37.30,221.2 L37.80,221.5 L38.30,221.4 L38.80,221.2 L39.30,221.3 L39.80,221.6 L40.30,221.6 L40.80,221.3 L41.30,221.0 L41.80,221.1 L42.30,221.3 L42.80,221.3 L43.30,221.1 L43.80,221.1 L44.30,221.5 L44.80,221.7 L45.30,221.5 L45.80,221.2 L46.30,221.2 L46.80,221.4 L47.30,221.4 L47.80,221.1 L48.30,221.0 L48.80,221.2 L49.30,221.5 L49.80,221.5 L50.30,221.3 L50.80,221.3 L51.30,221.5 L51.80,221.5 L52.30,221.3 L52.35,221.2 L52.80,220.6 L53.30,220.2 L53.45,220.1 L53.80,221.5 L54.30,223.3 L54.50,224.0 L54.80,224.2 L55.30,224.7 L55.80,223.4 L56.30,222.1 L56.35,222.0 L56.80,221.7 L57.30,221.2 L57.35,221.2 L57.80,221.1 L58.30,221.3 L58.80,221.4 L59.30,221.2 L59.80,221.0 L60.30,221.2 L60.80,221.5 L61.30,221.6 L61.80,221.4 L62.30,221.2 L62.65,221.3 L62.80,221.0 L63.30,220.0 L63.70,219.1 L63.80,218.9 L64.30,218.3 L64.40,218.2 L64.80,219.9 L65.25,222.2 L65.30,222.2 L65.80,222.2 L66.15,222.0 L66.30,221.8 L66.80,221.4 L67.15,221.3 L67.30,221.3 L67.80,221.6 L68.30,221.5 L68.65,221.3 L68.80,221.0 L69.30,220.4 L69.75,220.1 L69.80,220.3 L70.30,222.3 L70.80,223.9 L71.30,224.3 L71.60,224.6 L71.80,224.1 L72.30,222.9 L72.65,222.0 L72.80,221.9 L73.30,221.5 L73.65,221.2 L73.80,221.1 L74.30,221.2 L74.80,221.4 L75.30,221.3 L75.80,221.1 L76.30,221.0 L76.80,221.3 L77.30,221.6 L77.80,221.5 L78.30,220.2 L78.80,219.1 L78.85,219.0 L79.30,218.9 L79.55,218.7 L79.80,219.8 L80.30,221.7 L80.40,222.0 L80.80,221.7 L81.30,221.6 L81.80,221.6 L82.30,221.4 L82.80,221.2 L83.30,221.2 L83.80,221.5 L84.20,221.6 L84.30,221.6 L84.80,220.9 L85.30,220.1 L85.80,221.8 L86.20,223.3 L86.30,226.6 L86.35,228.2 L86.80,241.7 L87.15,252.0 L87.20,253.3 L87.30,259.1 L87.80,288.1 L87.90,294.0 L88.20,294.6 L88.30,295.2 L88.80,297.8 L89.20,299.6 L89.30,300.1 L89.80,299.8 L90.30,299.7 L90.80,299.8 L91.30,299.9 L91.80,299.7 L92.30,299.5 L92.80,299.5 L93.30,299.9 L93.80,298.9 L94.30,297.7 L94.35,297.5 L94.80,297.1 L95.05,297.0 L95.30,298.2 L95.80,300.6 L95.90,301.0 L96.30,300.7 L96.80,300.1 L97.30,299.7 L97.80,299.7 L98.30,299.9 L98.80,299.8 L99.30,299.6 L99.75,299.7 L99.80,299.7 L100.30,299.6 L100.80,299.2 L100.85,299.1 L101.30,300.4 L101.80,301.9 L101.90,302.2 L102.00,302.3 L102.30,277.8 L102.60,253.4 L102.70,249.6 L102.80,245.3 L103.20,228.0 L103.30,227.3 L103.75,224.2 L103.80,224.0 L104.30,222.2 L104.60,221.2 L104.75,221.3 L104.80,221.4 L105.30,221.6 L105.80,221.5 L106.30,221.2 L106.80,221.3 L107.30,221.5 L107.80,221.5 L108.30,221.1 L108.80,220.9 L109.30,221.1 L109.35,221.2 L109.80,220.4 L110.30,219.3 L110.40,219.1 L110.80,218.6 L111.10,218.4 L111.30,219.3 L111.80,221.8 L111.95,222.5 L112.30,222.4 L112.80,221.9 L112.85,221.9 L113.30,221.3 L113.80,221.1 L113.85,221.1 L114.30,221.3 L114.80,221.4 L115.05,221.3 L115.30,220.9 L115.80,220.4 L116.15,220.2 L116.30,220.8 L116.80,222.9 L117.20,224.2 L117.30,224.3 L117.80,230.3 L118.00,232.8 L118.30,235.3 L118.40,236.2 L118.80,257.5 L118.90,262.8 L119.05,275.5 L119.30,297.3 L119.80,298.7 L120.05,299.4 L120.10,299.5 L120.30,299.4 L120.80,299.6 L121.30,299.9 L121.80,300.0 L122.30,299.8 L122.80,299.7 L123.30,299.9 L123.80,300.1 L124.30,299.9 L124.80,299.5 L124.90,299.5 L125.30,298.6 L125.80,297.8 L125.95,297.5 L126.30,297.4 L126.65,297.0 L126.80,297.6 L127.30,299.7 L127.50,300.6 L127.80,300.6 L128.30,300.7 L128.40,300.6 L128.80,300.4 L129.30,299.8 L129.40,299.7 L129.80,299.6 L130.30,299.7 L130.50,299.8 L130.80,299.6 L131.30,299.0 L131.60,298.6 L131.80,299.2 L132.30,301.0 L132.65,302.4 L132.80,302.7 L133.30,303.5 L133.45,303.6 L133.80,302.4 L134.30,300.6 L134.50,300.0 L134.80,300.0 L135.30,300.0 L135.50,300.0 L135.80,299.9 L136.30,299.6 L136.80,299.4 L137.30,299.7 L137.80,300.0 L138.30,299.9 L138.80,299.7 L139.30,299.8 L139.80,300.0 L140.30,300.1 L140.55,300.0 L140.80,299.3 L141.30,297.9 L141.60,297.2 L141.80,297.1 L142.30,297.0 L142.80,299.2 L143.15,300.6 L143.30,300.5 L143.80,300.2 L144.05,300.2 L144.30,300.3 L144.80,300.3 L145.05,300.1 L145.30,300.0 L145.80,299.7 L146.30,299.7 L146.80,299.9 L146.95,299.9 L147.30,299.6 L147.80,298.9 L148.05,298.5 L148.30,299.3 L148.80,301.2 L149.10,302.5 L149.30,302.8 L149.80,303.4 L149.90,303.5 L150.30,302.1 L150.80,300.5 L150.95,300.1 L151.30,300.1 L151.80,300.1 L151.95,300.0 L152.30,299.8 L152.80,299.5 L153.30,299.5 L153.80,299.8 L154.30,299.9 L154.80,299.8 L155.30,299.7 L155.80,299.9 L155.90,299.9 L156.30,299.3 L156.80,298.1 L156.95,297.7 L157.30,297.2 L157.65,296.8 L157.80,297.4 L158.30,299.8 L158.50,300.7 L158.80,300.6 L159.30,300.3 L159.40,300.2 L159.80,299.8 L160.30,299.7 L160.40,299.7 L160.80,300.0 L161.30,300.1 L161.80,299.9 L161.95,299.8 L162.30,299.4 L162.80,299.0 L163.05,298.9 L163.30,299.8 L163.80,301.4 L163.90,301.7 L164.10,285.6 L164.30,269.1 L164.50,252.7 L164.80,239.2 L164.90,234.8 L165.00,229.9 L165.30,228.0 L165.80,224.7 L165.95,223.6 L166.30,222.0 L166.40,221.5 L166.80,221.3 L166.95,221.2 L167.30,221.3 L167.80,221.6 L168.30,221.6 L168.80,221.2 L169.30,221.0 L169.80,221.1 L170.30,221.4 L170.80,221.3 L171.05,221.2 L171.30,220.6 L171.80,219.5 L172.10,219.0 L172.30,219.0 L172.80,218.9 L173.30,220.9 L173.65,222.1 L173.80,222.0 L174.30,221.8 L174.55,221.8 L174.80,221.7 L175.30,221.5 L175.55,221.2 L175.80,221.1 L176.30,221.0 L176.80,221.2 L177.30,221.5 L177.80,221.5 L178.30,221.3 L178.80,221.2 L179.30,221.5 L179.80,221.5 L180.30,221.3 L180.80,221.0 L181.30,221.0 L181.80,221.3 L182.30,221.4 L182.55,221.4 L182.80,221.0 L183.30,220.5 L183.65,220.3 L183.80,220.9 L184.30,225.6 L184.60,228.2 L184.70,228.4 L184.80,228.4 L185.30,228.2 L185.50,228.2 L185.80,227.0 L186.30,225.3 L186.55,224.5 L186.80,224.2 L187.30,223.5 L187.55,223.1 L187.80,222.9 L188.00,222.8 L188.30,222.7 L188.80,222.6 L189.30,222.3 L189.80,221.6 L190.30,221.1 L190.80,220.8 L190.95,220.7 L191.30,219.8 L191.80,218.1 L192.00,217.4 L192.30,216.8 L192.40,216.6 L192.70,214.3 L192.80,214.1 L193.30,213.2 L193.50,212.8 L193.55,212.0 L193.80,206.6 L194.30,195.7 L194.45,192.4 L194.80,184.8 L194.90,182.7 L195.30,184.6 L195.45,185.4 L195.80,187.3 L196.00,188.3 L196.30,187.1 L196.35,186.9 L196.80,184.5 L197.00,183.4 L197.30,184.0 L197.45,184.3 L197.80,186.6 L198.30,190.0 L198.50,191.3 L198.80,190.9 L199.30,190.2 L199.80,187.6 L200.00,186.7 L200.30,186.6 L200.35,186.6 L200.80,187.6 L201.30,188.3 L201.35,188.3 L201.50,188.6 L201.80,187.9 L202.30,187.1 L202.80,186.4 L203.00,186.1 L203.30,186.5 L203.55,186.8 L203.80,186.6 L204.30,186.3 L204.40,186.3 L204.60,185.2 L204.80,184.5 L205.30,182.7 L205.50,182.9 L205.80,206.8 L206.10,230.7 L206.15,238.0 L206.30,259.0 L206.70,315.1 L206.80,312.2 L207.05,304.9 L207.20,300.5 L207.30,299.7 L207.70,296.4 L207.80,296.7 L208.05,297.5 L208.30,298.4 L208.60,299.5 L208.80,299.4 L209.30,299.6 L209.80,299.9 L210.30,299.9 L210.80,299.8 L211.30,299.7 L211.55,299.8 L211.80,299.7 L212.30,299.5 L212.65,299.0 L212.80,299.5 L213.30,300.8 L213.70,302.1 L213.80,302.3 L214.30,303.0 L214.50,303.3 L214.80,302.4 L215.30,300.7 L215.55,299.9 L215.80,299.8 L216.30,299.9 L216.55,300.0 L216.80,300.1 L217.30,300.1 L217.80,299.8 L218.30,299.7 L218.80,299.8 L219.30,299.9 L219.35,299.9 L219.80,298.7 L220.30,297.4 L220.40,297.1 L220.80,297.0 L221.10,296.9 L221.30,298.0 L221.80,300.3 L221.95,300.9 L222.30,300.6 L222.80,300.3 L222.85,300.2 L223.30,300.2 L223.80,300.1 L223.85,300.1 L224.30,299.9 L224.80,299.6 L225.30,299.5 L225.80,299.7 L226.30,299.9 L226.80,299.8 L227.30,299.2 L227.80,298.9 L227.90,298.8 L228.30,300.5 L228.80,302.2 L228.95,302.7 L229.30,302.8 L229.75,303.1 L229.80,302.9 L230.30,301.5 L230.80,300.2 L231.30,299.9 L231.80,299.5 L232.30,299.5 L232.80,299.9 L233.30,300.1 L233.80,300.0 L234.10,299.8 L234.30,299.3 L234.80,298.2 L235.15,297.6 L235.30,297.6 L235.80,297.2 L235.85,297.1 L236.30,298.8 L236.60,299.9 L236.70,300.1 L236.80,299.9 L237.30,298.9 L237.60,298.3 L237.80,297.9 L238.30,296.7 L238.60,295.8 L238.80,295.3 L239.30,294.3 L239.80,293.6 L240.30,292.7 L240.80,291.4 L241.30,290.1 L241.80,289.1 L242.30,288.3 L242.80,287.3 L243.30,286.1 L243.80,285.1 L244.30,284.3 L244.80,283.6 L245.30,282.5 L245.80,281.2 L246.30,280.1 L246.80,279.2 L247.30,278.3 L247.60,277.6 L247.80,271.9 L248.30,257.7 L248.65,245.5 L248.80,240.2 L249.00,233.1 L249.30,229.9 L249.75,224.8 L249.80,224.5 L249.90,223.7 L250.30,223.6 L250.80,223.4 L251.30,224.2 L251.60,224.6 L251.80,224.1 L252.30,222.4 L252.65,221.1 L252.80,220.9 L253.30,220.7 L253.65,220.8 L253.80,220.9 L254.30,221.1 L254.80,221.0 L255.30,220.9 L255.80,221.0 L256.30,221.3 L256.80,221.3 L257.30,221.0 L257.65,220.9 L257.80,220.5 L258.30,219.6 L258.70,218.8 L258.80,218.8 L259.30,218.3 L259.40,218.2 L259.80,219.8 L260.25,221.8 L260.30,221.8 L260.80,221.9 L261.15,222.0 L261.30,221.9 L261.80,221.5 L262.15,221.1 L262.30,221.1 L262.80,221.2 L263.30,221.4 L263.80,221.3 L264.30,221.0 L264.80,220.9 L265.30,221.1 L265.55,221.3 L265.80,221.2 L266.30,220.7 L266.65,220.3 L266.80,220.7 L267.30,222.5 L267.70,224.1 L267.80,226.6 L268.30,238.9 L268.50,243.7 L268.80,268.8 L268.90,277.2 L269.30,296.8 L269.55,296.6 L269.80,297.3 L270.30,298.6 L270.55,299.2 L270.80,299.8 L271.30,299.6 L271.80,299.6 L272.30,299.9 L272.80,300.2 L272.95,300.2 L273.30,299.3 L273.80,297.8 L274.00,297.3 L274.30,297.1 L274.70,297.0 L274.80,297.5 L275.30,299.7 L275.55,300.7 L275.80,300.4 L276.30,300.0 L276.45,300.0 L276.80,300.0 L277.30,300.1 L277.45,300.1 L277.80,300.1 L278.30,299.8 L278.80,299.7 L279.30,299.9 L279.80,299.6 L280.30,298.9 L280.40,298.7 L280.80,299.9 L281.30,301.6 L281.45,302.2 L281.80,302.8 L282.25,303.4 L282.30,303.3 L282.80,301.6 L283.30,300.0 L283.80,300.0 L284.30,300.1 L284.80,300.1 L285.30,299.7 L285.80,299.5 L286.30,299.7 L286.80,299.9 L287.10,299.8 L287.30,299.3 L287.80,298.0 L288.15,297.3 L288.30,297.3 L288.80,297.3 L288.85,297.2 L289.30,299.3 L289.70,300.9 L289.80,300.8 L290.30,300.3 L290.60,300.2 L290.80,300.2 L291.30,300.1 L291.60,299.9 L291.80,299.8 L292.30,299.5 L292.80,299.5 L293.30,299.8 L293.80,300.0 L294.30,299.9 L294.80,299.7 L294.85,299.7 L295.30,299.4 L295.80,299.2 L295.95,299.1 L296.30,300.2 L296.80,301.6 L297.00,302.2 L297.30,302.4 L297.80,303.1 L298.30,301.8 L298.80,300.3 L298.85,300.1 L299.30,299.8 L299.80,299.7 L299.85,299.7 L300.30,300.0 L300.80,300.2 L301.30,300.0 L301.65,299.7 L301.80,299.3 L302.30,298.2 L302.70,297.5 L302.80,297.5 L303.30,297.1 L303.40,297.0 L303.80,298.5 L304.25,300.4 L304.30,300.4 L304.80,300.4 L305.15,300.5 L305.30,300.5 L305.80,300.2 L306.15,299.9 L306.30,299.8 L306.80,299.7 L307.30,299.9 L307.80,300.0 L308.30,299.7 L308.50,299.6 L308.80,299.2 L309.30,298.8 L309.60,298.7 L309.80,299.5 L310.30,301.4 L310.65,302.4 L310.80,302.5 L311.30,303.0 L311.45,303.2 L311.80,302.4 L312.30,301.1 L312.50,300.4 L312.80,300.2 L313.30,299.7 L313.50,299.5 L313.80,299.5 L314.30,299.7 L314.80,299.9 L315.30,299.7 L315.80,299.5 L316.00,299.6 L316.30,299.1 L316.80,298.3 L317.05,297.9 L317.30,297.6 L317.75,297.1 L317.80,297.3 L318.30,299.3 L318.60,300.6 L318.80,300.6 L319.30,300.5 L319.50,300.4 L319.80,300.1 L320.30,299.6 L320.50,299.4 L320.80,299.5 L321.30,299.8 L321.80,300.0 L322.30,299.9 L322.35,299.9 L322.80,299.3 L323.30,299.0 L323.45,298.9 L323.60,299.5 L323.80,290.3 L324.30,267.1 L324.50,257.7 L324.80,252.0 L325.30,242.9 L325.60,236.3 L325.80,233.6 L326.30,226.8 L326.35,226.1 L326.50,224.4 L326.80,223.3 L327.30,221.5 L327.35,221.3 L327.40,221.1 L327.80,221.2 L328.30,221.5 L328.80,221.7 L329.30,221.4 L329.80,221.1 L330.30,221.2 L330.80,221.4 L330.95,221.4 L331.30,220.5 L331.80,219.2 L332.00,218.7 L332.30,218.5 L332.70,218.4 L332.80,219.0 L333.30,221.4 L333.55,222.5 L333.80,222.3 L334.30,221.8 L334.45,221.7 L334.80,221.6 L335.30,221.5 L335.45,221.5 L335.80,221.5 L336.30,221.2 L336.80,220.9 L337.30,221.1 L337.40,221.2 L337.80,221.0 L338.30,220.6 L338.50,220.4 L338.80,221.3 L339.30,223.0 L339.55,223.9 L339.80,224.4 L340.30,225.1 L340.35,225.1 L340.80,223.5 L341.30,221.7 L341.40,221.3 L341.80,221.2 L342.30,221.3 L342.40,221.3 L342.80,221.4 L343.30,221.2 L343.80,221.1 L344.30,221.3 L344.80,221.6 L345.30,221.6 L345.50,221.5 L345.80,220.6 L346.30,219.4 L346.55,218.9 L346.80,218.8 L347.25,218.6 L347.30,218.8 L347.80,220.8 L348.10,221.9 L348.30,221.8 L348.80,221.6 L349.00,221.7 L349.30,221.8 L349.80,221.7 L350.00,221.5 L350.30,221.4 L350.80,221.2 L351.30,221.4 L351.70,221.5 L351.80,221.5 L352.30,220.9 L352.80,220.1 L353.30,221.7 L353.80,223.6 L353.85,223.8 L354.30,224.5 L354.65,224.9 L354.80,224.4 L355.30,222.7 L355.70,221.5 L355.80,221.6 L356.30,221.7 L356.70,221.7 L356.80,221.6 L357.30,221.3 L357.80,221.1 L358.30,221.2 L358.80,221.4 L359.30,221.3 L359.65,221.1 L359.80,220.7 L360.30,219.6 L360.70,219.0 L360.80,219.0 L361.30,218.9 L361.40,218.8 L361.80,220.4 L362.25,222.2 L362.30,222.1 L362.80,221.9 L363.15,221.9 L363.30,221.9 L363.80,221.6 L364.15,221.2 L364.30,221.1 L364.80,220.9 L365.30,221.1 L365.80,221.5 L366.30,221.5 L366.40,221.4 L366.80,220.9 L367.30,220.4 L367.50,220.3 L367.80,221.5 L368.30,223.4 L368.55,224.1 L368.80,224.2 L369.30,224.5 L369.35,224.5 L369.80,223.2 L370.30,221.9 L370.40,221.6 L370.80,221.5 L371.30,221.2 L371.40,221.1 L371.80,221.1 L372.30,221.4 L372.80,221.7 L373.30,221.6 L373.80,221.2 L374.30,221.1 L374.50,221.2 L374.80,220.7 L375.30,219.6 L375.55,219.0 L375.80,218.7 L376.25,218.2 L376.30,218.4 L376.80,220.7 L377.10,222.2 L377.30,222.3 L377.80,222.2 L378.00,222.0 L378.30,221.7 L378.80,221.3 L379.00,221.3 L379.30,221.4 L379.80,221.5 L380.30,221.4 L380.80,221.0 L381.30,220.5 L381.80,220.3 L381.90,220.3 L382.30,221.8 L382.80,223.4 L382.95,223.8 L383.30,224.2 L383.75,224.8 L383.80,224.7 L384.30,223.4 L384.80,221.9 L385.30,221.4 L385.80,221.0 L386.30,221.2 L386.80,221.4 L387.30,221.3 L387.80,221.0 L388.30,221.1 L388.80,221.5 L389.30,221.6 L389.50,221.6 L389.80,220.8 L390.30,219.5 L390.55,218.9 L390.80,218.8 L391.25,218.6 L391.30,218.9 L391.80,221.0 L392.10,222.1 L392.30,221.9 L392.80,221.5 L393.00,221.5 L393.30,221.6 L393.80,221.6 L394.00,221.5 L394.30,221.4 L394.80,221.2 L395.30,221.3 L395.80,221.5 L396.30,221.6 L396.70,221.3 L396.80,221.2 L397.30,220.4 L397.80,220.1 L398.30,222.1 L398.80,225.5 L398.85,225.8 L399.30,227.6 L399.65,229.1 L399.70,229.2 L399.80,230.1 L400.30,235.2 L400.50,237.2 L400.70,263.7 L400.80,277.1 L400.90,290.6 L401.30,295.1 L401.60,298.3 L401.70,298.4 L401.80,298.5 L402.30,299.3 L402.50,299.7 L402.80,299.8 L403.30,299.9 L403.80,299.6 L404.15,299.5 L404.30,299.1 L404.80,298.3 L405.20,297.7 L405.30,297.7 L405.80,297.3 L405.90,297.2 L406.30,298.8 L406.75,300.6 L406.80,300.6 L407.30,300.6 L407.65,300.5 L407.80,300.4 L408.30,300.0 L408.65,299.5 L408.80,299.5 L409.30,299.5 L409.80,299.8 L410.30,300.0 L410.75,299.8 L410.80,299.8 L411.30,299.2 L411.80,298.9 L411.85,298.9 L412.20,300.3 L412.30,298.2 L412.80,287.4 L412.90,285.2 L413.00,282.8 L413.30,271.7 L413.70,257.0 L413.80,252.9 L414.30,234.4 L414.50,227.1 L414.75,224.7 L414.80,224.3 L415.20,221.4 L415.30,221.4 L415.75,221.1 L415.80,221.0 L416.30,221.2 L416.80,221.5 L417.30,221.6 L417.80,221.4 L418.30,221.2 L418.80,221.3 L418.85,221.3 L419.30,220.5 L419.80,219.2 L419.90,218.9 L420.30,218.4 L420.60,218.1 L420.80,219.0 L421.30,221.5 L421.45,222.3 L421.80,222.3 L422.30,222.0 L422.35,221.9 L422.80,221.5 L423.30,221.3 L423.35,221.3 L423.80,221.5 L424.30,221.5 L424.80,221.2 L425.30,221.0 L425.70,221.1 L425.80,221.0 L426.30,220.8 L426.80,220.4 L427.30,221.9 L427.80,223.6 L427.85,223.8 L428.30,224.6 L428.65,225.2 L428.80,224.7 L429.30,223.0 L429.70,221.5 L429.80,221.4 L430.30,221.3 L430.70,221.3 L430.80,221.3 L431.30,221.3 L431.80,221.1 L432.30,221.0 L432.80,221.3 L433.30,221.6 L433.45,221.6 L433.80,220.8 L434.30,219.4 L434.50,218.9 L434.80,218.7 L435.20,218.6 L435.30,219.1 L435.80,221.3 L436.05,222.3 L436.30,222.0 L436.80,221.5 L436.95,221.4 L437.30,221.4 L437.80,221.4 L437.95,221.4 L438.30,221.5 L438.80,221.3 L439.30,221.2 L439.80,221.4 L439.85,221.5 L440.30,221.2 L440.80,220.6 L440.95,220.4 L441.30,221.3 L441.80,222.9 L442.00,223.7 L442.30,224.2 L442.80,233.8 L442.90,235.3 L443.10,290.6 L443.30,291.7 L443.80,294.4 L443.85,294.7 L444.00,296.1 L444.30,296.8 L444.80,298.0 L444.85,298.1 L445.30,299.1 L445.80,299.8 L446.30,299.7 L446.80,299.8 L447.30,299.9 L447.50,299.9 L447.80,299.1 L448.30,297.7 L448.55,297.1 L448.80,297.0 L449.25,297.0 L449.30,297.3 L449.80,299.7 L450.10,300.9 L450.30,300.7 L450.80,300.3 L451.00,300.2 L451.30,300.2 L451.80,300.2 L452.00,300.1 L452.30,300.0 L452.80,299.6 L453.30,299.5 L453.80,299.7 L454.30,299.9 L454.45,299.9 L454.80,299.5 L455.30,298.9 L455.55,298.7 L455.80,299.6 L456.10,300.8 L456.30,285.7 L456.60,263.0 L456.80,242.5 L456.90,232.3 L457.30,229.3 L457.40,228.6 L457.60,226.3 L457.80,225.1 L458.30,222.6 L458.45,221.8 L458.60,221.5 L458.80,221.5 L459.30,221.4 L459.45,221.2 L459.80,221.1 L460.30,221.0 L460.80,221.3 L461.30,221.6 L461.80,221.5 L462.20,221.3 L462.30,221.0 L462.80,219.9 L463.25,219.1 L463.30,219.1 L463.80,218.7 L463.95,218.6 L464.30,219.9 L464.80,221.8 L465.30,221.8 L465.70,221.9 L465.80,221.9 L466.30,221.7 L466.70,221.3 L466.80,221.3 L467.30,221.2 L467.80,221.5 L468.30,221.6 L468.65,221.5 L468.80,221.3 L469.30,220.5 L469.75,220.0 L469.80,220.2 L470.30,222.2 L470.80,224.0 L471.30,224.4 L471.60,224.6 L471.80,224.0 L472.30,222.7 L472.65,221.9 L472.80,221.9 L473.30,221.7 L473.65,221.4 L473.80,221.3 L474.30,221.1 L474.80,221.3 L475.30,221.4 L475.80,221.2 L476.30,221.0 L476.80,221.1 L477.00,221.2 L477.30,220.8 L477.80,219.8 L478.05,219.2 L478.30,218.9 L478.75,218.4 L478.80,218.6 L479.30,221.0 L479.60,222.4 L479.80,222.4 L480.30,222.0 L480.50,221.8 L480.80,221.4 L481.30,221.1 L481.50,221.0 L481.80,221.2 L482.30,221.4 L482.80,221.3 L483.30,221.2 L483.40,221.2 L483.80,220.9 L484.30,220.8 L484.50,220.7 L484.80,221.6 L485.30,223.0 L485.55,223.7 L485.80,223.9 L486.30,224.6 L486.35,224.7 L486.80,223.5 L487.30,221.9 L487.40,221.5 L487.80,221.2 L488.30,221.1 L488.40,221.1 L488.80,221.4 L489.30,221.6 L489.80,221.5 L490.30,221.2 L490.80,221.2 L491.30,221.4 L491.55,221.5 L491.80,220.8 L492.30,219.4 L492.60,218.7 L492.80,218.5 L493.30,218.4 L493.80,220.9 L494.15,222.4 L494.30,222.3 L494.80,221.9 L495.05,221.7 L495.30,221.6 L495.80,221.6 L496.05,221.6 L496.30,221.6 L496.80,221.3 L497.30,221.0 L497.80,221.0 L498.15,221.2 L498.30,221.2 L498.80,220.8 L499.25,220.2 L499.30,220.4 L499.70,221.7 L499.80,224.8 L500.20,237.3 L500.30,249.4 L500.50,273.1 L500.80,290.8 L500.90,296.6 L501.10,297.8 L501.30,298.1 L501.80,298.8 L502.15,298.2 L502.30,298.3 L502.80,299.1 L503.15,299.7 L503.30,299.9 L503.80,299.7 L504.30,299.5 L504.80,299.7 L505.30,300.0 L505.65,300.1 L505.80,299.8 L506.30,298.4 L506.70,297.4 L506.80,297.4 L507.30,297.2 L507.40,297.2 L507.80,299.0 L508.25,300.8 L508.30,300.7 L508.80,300.2 L509.15,300.0 L509.30,299.9 L509.80,300.0 L510.15,300.0 L510.30,300.0 L510.80,299.9 L511.30,299.7 L511.80,299.9 L511.95,300.0 L512.30,299.8 L512.80,299.3 L513.05,299.0 L513.30,299.6 L513.80,301.2 L514.10,302.3 L514.30,302.6 L514.80,303.3 L514.90,303.4 L515.30,302.1 L515.80,300.4 L515.95,299.9 L516.30,299.9 L516.80,300.1 L516.95,300.2 L517.30,300.2 L517.80,300.0 L518.30,299.8 L518.80,299.8 L519.30,300.0 L519.75,300.0 L519.80,299.8 L520.30,298.4 L520.80,297.3 L521.30,297.2 L521.50,297.2 L521.80,298.6 L522.30,300.7 L522.35,300.9 L522.80,300.6 L523.25,300.4 L523.30,300.4 L523.80,300.4 L524.25,300.2 L524.30,300.2 L524.80,299.9 L525.30,299.6 L525.80,299.7 L526.30,300.0 L526.80,300.0 L527.30,299.4 L527.80,298.9 L527.90,298.8 L528.30,300.5 L528.80,302.4 L528.95,302.9 L529.30,303.1 L529.75,303.3 L529.80,303.2 L530.30,301.6 L530.80,300.3 L531.30,300.2 L531.80,299.8 L532.30,299.6 L532.80,299.9 L533.30,300.2 L533.80,300.2 L534.10,300.1 L534.30,299.6 L534.80,298.4 L535.15,297.7 L535.30,297.7 L535.80,297.4 L535.85,297.4 L536.30,299.1 L536.70,300.6 L536.80,300.5 L537.30,300.3 L537.60,300.4 L537.80,300.4 L538.30,300.3 L538.60,300.1 L538.80,300.0 L539.30,299.9 L539.80,300.1 L540.30,300.3 L540.80,300.2 L540.90,300.2 L541.30,299.5 L541.80,298.9 L542.00,298.8 L542.30,300.0 L542.80,301.8 L543.05,302.7 L543.30,302.8 L543.80,303.2 L543.85,303.3 L544.30,302.1 L544.80,300.9 L544.90,300.6 L545.30,300.6 L545.80,300.1 L545.90,300.1 L546.30,299.9 L546.80,300.0 L547.30,300.2 L547.80,300.0 L548.30,299.8 L548.80,298.6 L549.30,297.9 L549.35,297.8 L549.80,297.7 L550.05,297.5 L550.30,298.5 L550.80,300.5 L550.90,300.9 L551.30,300.8 L551.80,300.8 L552.30,300.5 L552.80,299.9 L553.30,299.7 L553.80,299.9 L554.30,300.2 L554.80,300.1 L555.10,300.0 L555.30,299.8 L555.80,299.4 L556.20,299.2 L556.30,299.7 L556.80,301.5 L557.25,302.9 L557.30,302.9 L557.80,303.1 L558.05,303.4 L558.30,302.7 L558.80,301.4 L559.10,300.5 L559.30,300.4 L559.80,300.0 L560.10,299.8 L560.30,299.8 L560.80,300.1 L561.30,300.4 L561.80,300.4 L562.20,300.2 L562.30,299.9 L562.80,298.7 L563.25,297.9 L563.30,297.9 L563.80,297.6 L563.95,297.4 L564.30,298.8 L564.80,300.7 L565.30,300.6 L565.70,300.7 L565.80,300.7 L566.30,300.5 L566.70,300.2 L566.80,300.1 L567.30,300.1 L567.80,300.3 L568.30,300.5 L568.65,300.4 L568.80,300.2 L569.30,299.4 L569.75,298.9 L569.80,299.1 L570.30,301.0 L570.80,302.9 L571.30,303.3 L571.60,303.5 L571.80,302.9 L572.30,301.5 L572.65,300.7 L572.80,300.7 L573.30,300.6 L573.65,300.3 L573.80,300.2 L574.30,300.0 L574.80,300.2 L575.30,300.3 L575.80,300.1 L576.30,299.9 L576.65,299.9 L576.80,299.6 L577.30,298.9 L577.70,298.2 L577.80,298.1 L578.30,297.6 L578.40,297.5 L578.80,299.1 L579.25,301.1 L579.30,301.1 L579.80,301.1 L580.15,300.9 L580.30,300.8 L580.80,300.2 L581.15,299.9 L581.30,299.9 L581.80,300.1 L582.30,300.4 L582.80,300.3 L583.25,300.1 L583.30,300.1 L583.80,299.7 L584.30,299.6 L584.35,299.5 L584.80,301.1 L585.30,302.6 L585.40,302.8 L585.80,303.1 L586.20,303.6 L586.30,303.3 L586.80,302.0 L587.25,300.6 L587.30,300.6 L587.80,300.2 L588.25,300.0 L588.30,300.0 L588.80,300.3 L589.30,300.6 L589.80,300.5 L590.30,300.2 L590.75,300.2 L590.80,300.1 L591.30,299.2 L591.80,298.1 L592.30,297.5 L592.50,297.2 L592.80,298.4 L593.30,300.8 L593.35,301.1 L593.80,301.1 L594.25,301.0 L594.30,301.0 L594.80,300.5 L595.25,300.2 L595.30,300.3 L595.80,300.5 L596.30,300.6 L596.80,300.4 L597.20,300.1 L597.30,300.0 L597.80,299.5 L598.30,299.3 L598.80,301.1 L599.30,302.7 L599.35,302.8 L599.80,303.2 L600.15,303.8 L600.30,303.4 L600.80,302.2 L601.20,301.0 L601.30,300.9 L601.80,300.4 L602.20,300.2 L602.30,300.2 L602.80,300.3 L603.30,300.4 L603.80,300.3 L604.30,300.0 L604.80,300.2 L605.15,300.4 L605.30,300.2 L605.80,299.2 L606.20,298.2 L606.30,298.1 L606.80,297.6 L606.90,297.5 L607.30,299.4 L607.75,301.5 L607.80,301.5 L608.30,301.1 L608.65,300.7 L608.80,300.5 L609.30,300.2 L609.65,300.2 L609.80,300.3 L610.30,300.5 L610.80,300.4 L611.30,300.3 L611.55,300.3 L611.80,300.2 L612.30,300.0 L612.65,299.8 L612.80,300.2 L613.30,301.6 L613.70,302.8 L613.80,302.9 L614.30,303.5 L614.50,303.9 L614.80,303.1 L615.30,301.5 L615.55,300.6 L615.80,300.4 L616.30,300.3 L616.55,300.4 L616.80,300.6 L617.30,300.8 L617.80,300.6 L618.30,300.3 L618.80,300.4 L619.30,300.6 L619.35,300.6 L619.80,299.5 L620.30,298.1 L620.40,297.9 L620.80,297.5 L621.10,297.4 L621.30,298.4 L621.80,300.9 L621.95,301.6 L622.30,301.4 L622.80,301.0 L622.85,300.9 L623.30,300.7 L623.80,300.7 L623.85,300.7 L624.30,300.7 L624.80,300.5 L624.85,300.4 L625.30,299.8 L625.80,299.4 L625.95,299.3 L626.30,300.7 L626.80,302.5 L627.00,303.1 L627.30,303.3 L627.80,303.8 L628.30,302.6 L628.80,301.3 L628.85,301.2 L629.30,300.9 L629.80,300.4 L629.85,300.4 L630.30,300.3 L630.80,300.5 L631.30,300.6 L631.80,300.4 L632.30,300.2 L632.80,300.4 L633.30,300.7 L633.65,300.8 L633.80,300.5 L634.30,299.2 L634.70,298.1 L634.80,298.1 L635.30,297.9 L635.40,297.9 L635.80,299.7 L636.25,301.5 L636.30,301.4 L636.80,300.9 L637.15,300.7 L637.30,300.6 L637.80,300.7 L638.15,300.7 L638.30,300.7 L638.80,300.6 L639.30,300.4 L639.40,300.5 L639.80,300.3 L640.30,300.1 L640.50,299.9 L640.80,300.8 L641.30,302.2 L641.55,302.9 L641.80,303.2 L642.30,303.9 L642.35,304.0 L642.80,302.8 L643.30,301.1 L643.40,300.8 L643.80,300.5 L644.30,300.5 L644.40,300.5 L644.80,300.8 L645.30,300.9 L645.80,300.7 L646.30,300.5 L646.80,300.5 L647.30,300.7 L647.35,300.7 L647.80,299.6 L648.30,298.3 L648.40,298.0 L648.80,297.7 L649.10,297.6 L649.30,298.6 L649.80,301.1 L649.95,301.8 L650.30,301.5 L650.80,301.1 L650.85,301.1 L651.30,300.9 L651.80,300.9 L651.85,300.9 L652.30,300.9 L652.80,300.5 L653.30,300.3 L653.55,300.3 L653.80,300.2 L654.30,300.0 L654.65,299.7 L654.80,300.2 L655.30,301.8 L655.70,303.1 L655.80,303.2 L656.30,304.1 L656.50,304.4 L656.80,303.6 L657.30,301.9 L657.55,300.9 L657.80,300.7 L658.30,300.5 L658.55,300.6 L658.80,300.7 L659.30,300.7 L659.80,300.5 L660.30,300.4 L660.80,300.6 L661.30,301.0 L661.80,301.0 L661.85,300.9 L662.30,299.7 L662.80,298.5 L662.90,298.3 L663.30,298.2 L663.60,298.1 L663.80,298.9 L664.30,300.9 L664.45,301.4 L664.80,301.1 L665.30,300.9 L665.35,300.9 L665.80,301.0 L666.30,300.9 L666.35,300.9 L666.80,300.7 L667.30,300.6 L667.80,300.8 L668.25,301.0 L668.30,301.0 L668.80,300.4 L669.30,299.6 L669.35,299.5 L669.80,301.0 L670.30,302.9 L670.40,303.3 L670.80,303.9 L671.20,304.2 L671.30,303.9 L671.80,302.2 L672.25,300.9 L672.30,301.0 L672.80,301.1 L673.25,301.1 L673.30,301.1 L673.80,300.8 L674.30,300.6 L674.80,300.7 L675.30,300.9 L675.80,300.7 L676.30,299.4 L676.80,298.3 L676.85,298.2 L677.30,298.2 L677.55,298.2 L677.80,299.3 L678.30,301.4 L678.40,301.8 L678.80,301.4 L679.30,301.3 L679.80,301.3 L680.30,301.0 L680.80,300.6 L681.30,300.4 L681.80,300.6 L681.95,300.7 L682.30,300.6 L682.80,300.1 L683.05,299.8 L683.30,300.5 L683.80,302.3 L684.10,285.0 L684.30,273.0 L684.60,243.5 L684.80,236.7 L684.90,233.3 L685.00,229.5 L685.30,227.5 L685.80,224.2 L685.95,223.3 L686.30,222.2 L686.60,221.3 L686.80,221.4 L686.95,221.4 L687.30,221.3 L687.80,221.1 L688.30,221.0 L688.80,221.3 L689.30,221.6 L689.80,221.6 L690.00,221.4 L690.30,220.6 L690.80,219.5 L691.05,219.0 L691.30,218.9 L691.75,218.7 L691.80,218.9 L692.30,220.8 L692.60,221.9 L692.80,221.7 L693.30,221.7 L693.50,221.7 L693.80,221.8 L694.30,221.6 L694.50,221.4 L694.80,221.3 L695.30,221.2 L695.80,221.4 L696.30,221.6 L696.40,221.6 L696.80,221.1 L697.30,220.3 L697.50,220.0 L697.80,221.0 L698.30,223.0 L698.55,224.0 L698.80,224.3 L699.30,224.7 L699.35,224.7 L699.80,223.2 L700.30,221.9 L700.40,221.7 L700.80,221.8 L701.30,221.6 L701.40,221.6 L701.80,221.3 L702.30,221.1 L702.80,221.3 L703.30,221.4 L703.80,221.2 L704.30,221.0 L704.80,221.1 L705.15,221.3 L705.30,221.1 L705.80,220.2 L706.20,219.2 L706.30,219.1 L706.80,218.5 L706.90,218.4 L707.30,220.3 L707.75,222.4 L707.80,222.4 L708.30,222.1 L708.65,221.7 L708.80,221.5 L709.30,221.1 L709.65,221.1 L709.80,221.2 L710.30,221.4 L710.75,221.4 L710.80,221.3 L711.30,220.7 L711.80,220.3 L711.85,220.3 L712.30,222.1 L712.80,223.9 L712.90,224.2 L713.30,224.4 L713.70,224.6 L713.80,224.2 L714.30,222.8 L714.75,221.6 L714.80,221.6 L715.30,221.4 L715.75,221.1 L715.80,221.1 L716.30,221.1 L716.80,221.4 L717.30,221.6 L717.80,221.5 L718.30,221.2 L718.80,221.2 L719.30,221.4 L719.35,221.4 L719.80,220.4 L720.30,219.0 L720.40,218.8 L720.80,218.3 L721.10,218.2 L721.30,219.2 L721.80,221.7 L721.95,222.4 L722.30,222.2 L722.80,221.8 L722.85,221.8 L723.30,221.5 L723.80,221.5 L723.85,221.5 L724.30,221.6 L724.80,221.3 L724.85,221.3 L725.30,220.6 L725.80,220.2 L725.95,220.1 L726.30,221.5 L726.80,223.3 L727.00,223.9 L727.30,224.2 L727.80,224.6 L728.30,223.3 L728.80,222.1 L728.85,222.0 L729.30,221.7 L729.80,221.3 L729.85,221.2 L730.30,221.1 L730.80,221.3 L731.30,221.4 L731.80,221.2 L732.30,221.0 L732.80,221.1 L733.30,221.5 L733.80,221.6 L734.30,221.4 L734.50,221.3 L734.80,220.6 L735.30,219.6 L735.55,219.2 L735.80,219.0 L736.25,218.6 L736.30,218.8 L736.80,220.6 L737.10,221.8 L737.30,221.8 L737.80,221.8 L738.00,221.9 L738.30,221.8 L738.80,221.5 L739.00,221.3 L739.30,221.2 L739.80,221.3 L740.30,221.6 L740.80,221.6 L741.30,221.3 L741.80,221.0 L742.30,221.1 L742.80,221.4 L743.30,221.3 L743.80,221.1 L744.30,221.1 L744.80,221.5 L745.30,221.7 L745.80,221.5 L746.30,221.2 L746.80,221.2 L747.30,221.4 L747.80,221.4 L748.30,221.1 L748.80,220.9 L749.30,221.2 L749.80,221.5 L750.30,221.5 L750.80,221.3 L751.30,221.3 L751.80,221.5 L752.30,221.6 L752.80,221.3 L753.30,221.0 L753.80,221.0 L754.30,221.3 L754.80,221.4 L755.30,221.2 L755.80,221.2 L756.30,221.4 L756.80,221.7 L757.30,221.5 L757.80,221.2 L758.30,221.1 L758.80,221.3 L759.30,221.4 L759.80,221.2 L760.30,221.0 L760.80,221.2 L761.30,221.5 L761.80,221.6 L762.30,221.4 L762.80,221.2 L763.30,221.4 L763.80,221.5 L764.30,221.3 L764.80,221.0 L765.30,221.0 L765.80,221.3 L766.30,221.5 L766.80,221.3 L767.30,221.2 L767.80,221.4 L768.30,221.6 L768.80,221.5 L769.30,221.2 L769.80,221.0 L770.30,221.2 L770.80,221.4 L771.30,221.3 L771.80,221.1 L772.30,221.2 L772.80,221.5 L773.30,221.7 L773.80,221.4 L774.30,221.2 L774.80,221.2 L775.30,221.4 L775.80,221.3 L776.30,221.0 L776.80,221.0 L777.30,221.3 L777.80,221.6 L778.30,221.5 L778.80,221.3 L779.30,221.3 L779.80,221.5 L780.30,221.5 L780.80,221.2 L781.15,221.0 L781.30,220.8 L781.80,220.5 L782.25,220.4 L782.30,220.5 L782.80,222.3 L783.30,223.8 L783.80,224.4 L784.10,224.9 L784.30,224.4 L784.80,223.0 L785.15,221.8 L785.30,221.7 L785.80,221.2 L786.15,221.1 L786.30,221.1 L786.80,221.3 L787.30,221.4 L787.80,221.1 L788.30,221.0 L788.80,221.3 L789.30,221.6 L789.80,221.6 L790.30,221.3 L790.80,221.2 L791.30,221.4 L791.40,221.4 L791.80,220.6 L792.30,219.3 L792.45,218.8 L792.80,218.4 L793.15,218.2 L793.30,218.9 L793.80,221.4 L794.00,222.4 L794.30,222.3 L794.80,221.9 L794.90,221.8 L795.30,221.5 L795.80,221.5 L795.90,221.5 L796.30,221.6 L796.55,221.6 L796.80,221.2 L797.30,220.4 L797.65,220.0 L797.80,220.5 L798.30,222.4 L798.70,224.0 L798.80,224.1 L799.30,224.5 L799.50,224.7 L799.80,223.7 L800.30,222.3 L800.55,221.7 L800.80,221.8 L801.30,221.7 L801.55,221.5 L801.80,221.4 L802.30,221.1 L802.80,221.2 L803.30,221.4 L803.80,221.3 L804.30,221.0 L804.80,221.0 L805.30,221.4 L805.80,221.6 L806.15,221.5 L806.30,221.1 L806.80,219.8 L807.20,219.0 L807.30,218.9 L807.80,218.8 L807.90,218.7 L808.30,220.4 L808.75,222.1 L808.80,222.0 L809.30,221.6 L809.65,221.5 L809.80,221.6 L810.30,221.6 L810.65,221.4 L810.80,221.4 L811.30,221.2 L811.80,221.2 L811.95,221.3 L812.30,221.2 L812.80,220.9 L813.05,220.5 L813.30,221.2 L813.80,222.6 L814.10,223.6 L814.30,223.9 L814.80,224.7 L814.90,224.9 L815.30,223.6 L815.80,221.9 L815.95,221.4 L816.30,221.2 L816.80,221.4 L816.95,221.5 L817.30,221.6 L817.80,221.6 L818.30,221.3 L818.80,221.2 L819.30,221.4 L819.80,221.4 L820.30,221.2 L820.80,220.9 L821.30,221.1 L821.65,221.3 L821.80,221.1 L822.30,220.1 L822.70,219.1 L822.80,218.9 L823.30,218.5 L823.40,218.5 L823.80,220.4 L824.25,222.5 L824.30,222.5 L824.80,222.1 L825.15,221.6 L825.30,221.5 L825.80,221.2 L826.15,221.2 L826.30,221.3 L826.80,221.4 L827.30,221.2 L827.80,221.1 L828.25,221.3 L828.30,221.3 L828.80,221.1 L829.30,220.7 L829.35,220.6 L829.80,221.8 L830.30,223.4 L830.40,223.7 L830.80,224.3 L831.20,224.9 L831.30,224.6 L831.80,222.9 L832.25,221.3 L832.30,221.3 L832.80,221.2 L833.25,221.4 L833.30,221.4 L833.80,221.6 L834.30,221.4 L834.80,221.2 L835.30,221.3 L835.80,221.5 L836.30,221.4 L836.80,221.1 L837.25,220.9 L837.30,220.8 L837.80,220.0 L838.30,219.1 L838.80,218.7 L839.00,218.5 L839.30,219.7 L839.80,222.0 L839.85,222.2 L840.30,222.3 L840.75,222.1 L840.80,222.1 L841.30,221.5 L841.75,221.0 L841.80,221.0 L842.30,221.1 L842.80,221.3 L843.30,221.3 L843.40,221.3 L843.80,220.7 L844.30,220.3 L844.50,220.2 L844.80,221.4 L845.30,223.4 L845.55,224.2 L845.80,224.4 L846.30,224.7 L846.35,224.7 L846.80,223.3 L847.30,222.0 L847.40,221.7 L847.80,221.6 L848.30,221.1 L848.40,221.1 L848.80,220.9 L849.30,221.2 L849.80,221.5 L850.30,221.5 L850.80,221.3 L851.30,221.3 L851.80,221.5 L852.30,221.6 L852.80,221.3 L853.05,221.1 L853.30,220.5 L853.80,219.4 L854.10,218.9 L854.30,218.9 L854.80,218.6 L855.30,220.6 L855.65,222.0 L855.80,222.0 L856.30,222.0 L856.55,222.0 L856.80,222.0 L857.30,221.7 L857.55,221.4 L857.80,221.2 L858.30,221.1 L858.65,221.2 L858.80,221.1 L859.30,220.8 L859.75,220.2 L859.80,220.4 L860.30,221.9 L860.70,223.3 L860.80,224.2 L861.30,227.2 L861.60,229.0 L861.80,229.2 L862.30,234.6 L862.50,236.7 L862.65,253.2 L862.80,270.2 L863.20,297.6 L863.30,297.9 L863.65,299.0 L863.80,299.4 L864.00,300.0 L864.30,299.8 L864.80,299.5 L865.30,299.5 L865.80,299.8 L866.30,300.0 L866.80,299.9 L867.30,299.7 L867.80,299.8 L868.30,300.1 L868.65,300.1 L868.80,299.7 L869.30,298.3 L869.70,297.2 L869.80,297.1 L870.30,296.9 L870.40,296.9 L870.80,298.8 L871.25,300.7 L871.30,300.7 L871.80,300.2 L872.15,300.1 L872.30,300.1 L872.80,300.2 L873.15,300.2 L873.30,300.2 L873.80,300.0 L874.30,299.7 L874.45,299.6 L874.80,299.4 L875.30,299.1 L875.55,298.9 L875.80,299.7 L876.30,301.1 L876.60,302.1 L876.80,302.3 L877.30,303.1 L877.40,303.3 L877.80,302.3 L878.30,300.8 L878.45,300.2 L878.80,300.0 L879.30,299.8 L879.45,299.8 L879.80,300.0 L880.30,300.0 L880.80,299.7 L881.30,299.5 L881.80,299.6 L882.30,299.8 L882.80,299.9 L883.30,299.7 L883.80,299.7 L884.30,299.9 L884.80,299.1 L885.30,297.8 L885.35,297.7 L885.80,297.0 L886.05,296.8 L886.30,297.9 L886.80,300.2 L886.90,300.7 L887.30,300.6 L887.80,300.2 L888.30,299.8 L888.80,299.7 L889.30,300.1 L889.80,300.1 L890.30,299.8 L890.80,299.7 L891.00,299.7 L891.30,299.6 L891.60,299.4 L891.80,284.3 L892.10,261.6 L892.20,254.4 L892.30,250.9 L892.80,233.8 L892.90,230.4 L893.15,230.3 L893.30,230.0 L893.80,229.0 L893.95,228.7 L894.30,226.4 L894.80,222.9 L895.00,222.2 L895.30,222.0 L895.80,222.0 L896.00,222.1 L896.30,222.2 L896.80,222.1 L897.30,221.7 L897.80,221.6 L898.30,221.8 L898.80,222.0 L899.30,221.9 L899.50,221.8 L899.80,221.0 L900.30,220.0 L900.55,219.6 L900.80,219.6 L901.25,219.4 L901.30,219.6 L901.80,221.6 L902.10,222.7 L902.30,222.5 L902.80,222.4 L903.00,222.3 L903.30,222.3 L903.80,222.0 L904.00,221.7 L904.30,221.6 L904.80,221.5 L905.30,221.8 L905.80,222.1 L906.30,222.0 L906.80,221.8 L907.30,221.8 L907.80,222.0 L908.30,222.0 L908.80,221.7 L909.30,221.5 L909.80,221.6 L910.30,221.9 L910.65,221.9 L910.80,221.8 L911.30,221.1 L911.75,220.7 L911.80,220.9 L912.30,227.2 L912.50,229.7 L912.80,230.5 L913.30,230.3 L913.60,230.1 L913.80,229.2 L914.30,227.1 L914.65,225.9 L914.80,225.8 L915.30,225.2 L915.65,224.6 L915.80,224.3 L916.00,224.1 L916.30,223.7 L916.80,223.5 L917.30,223.4 L917.80,222.9 L918.30,222.1 L918.80,221.5 L919.10,221.3 L919.30,220.8 L919.80,219.3 L920.00,218.6 L920.15,217.3 L920.30,216.1 L920.80,212.3 L920.85,212.0 L921.30,211.2 L921.70,231.7 L921.80,236.3 L921.90,241.0 L922.30,273.3 L922.60,297.3 L922.80,313.3 L922.90,321.4 L923.30,309.1 L923.50,303.0 L923.60,302.2 L923.80,300.7 L924.20,297.8 L924.30,298.0 L924.80,299.0 L924.85,299.1 L925.20,299.3 L925.30,299.2 L925.80,298.6 L925.95,298.5 L926.30,299.9 L926.80,301.8 L927.00,302.5 L927.30,302.7 L927.80,303.1 L928.30,301.8 L928.80,300.5 L928.85,300.4 L929.30,300.3 L929.80,299.8 L929.85,299.8 L930.30,299.6 L930.80,299.7 L931.30,299.9 L931.75,299.8 L931.80,299.7 L932.30,298.3 L932.80,297.2 L933.30,297.2 L933.50,273.3 L933.80,238.8 L934.30,195.5 L934.35,191.2 L934.60,168.3 L934.80,172.3 L935.20,180.5 L935.25,181.0 L935.30,181.5 L935.80,186.8 L936.00,188.8 L936.25,188.6 L936.30,188.6 L936.80,188.2 L937.30,188.0 L937.80,188.2 L938.30,188.4 L938.80,188.4 L939.30,188.1 L939.40,188.1 L939.80,187.8 L940.30,187.6 L940.50,187.4 L940.80,188.5 L941.30,189.9 L941.55,190.5 L941.80,190.6 L942.30,191.2 L942.35,191.3 L942.80,190.1 L943.30,188.5 L943.40,188.2 L943.80,187.8 L944.30,187.6 L944.40,187.6 L944.80,187.8 L945.30,188.1 L945.80,187.9 L946.30,187.6 L946.80,187.5 L947.30,186.5 L947.80,185.4 L947.85,185.3 L947.90,185.2 L948.30,206.0 L948.55,218.9 L948.70,227.5 L948.80,234.0 L949.30,266.5 L949.40,273.0 L949.80,297.3 L950.10,315.3 L950.30,310.6 L950.60,303.5 L950.80,301.4 L951.20,297.5 L951.30,297.7 L951.80,299.0 L952.20,300.1 L952.30,300.1 L952.80,299.9 L953.30,299.5 L953.80,299.5 L954.30,299.8 L954.75,299.9 L954.80,299.9 L955.30,299.3 L955.80,298.7 L955.85,298.6 L956.30,300.4 L956.80,302.4 L956.90,302.8 L957.30,303.1 L957.70,303.3 L957.80,303.0 L958.30,301.3 L958.75,300.0 L958.80,300.0 L959.30,300.0 L959.75,299.8 L959.80,299.7 L960.30,299.5 L960.80,299.6 L961.30,300.0 L961.80,300.1 L962.25,300.0 L962.30,299.8 L962.80,298.5 L963.30,297.5 L963.80,297.3 L964.00,297.2 L964.30,298.4 L964.80,300.2 L964.85,300.4 L965.30,300.1 L965.50,300.1 L965.75,299.7 L965.80,299.6 L966.30,298.5 L966.75,297.3 L966.80,297.2 L967.30,295.9 L967.80,295.0 L968.30,294.2 L968.80,293.2 L969.30,291.8 L969.80,290.5 L970.30,289.5 L970.80,288.7 L971.30,287.6 L971.80,286.4 L972.30,285.3 L972.80,284.6 L973.30,283.8 L973.80,282.6 L974.30,281.2 L974.80,280.2 L975.30,279.3 L975.80,278.3 L976.30,276.9 L976.80,275.7 L977.30,274.9 L977.80,274.2 L978.30,273.2 L978.80,271.9 L979.30,270.8 L979.50,270.4 L979.60,270.2 L979.80,263.4 L980.20,249.6 L980.30,246.0 L980.60,235.1 L980.80,228.7 L981.00,222.2 L981.30,222.7 L981.65,223.5 L981.80,223.5 L982.00,223.6 L982.30,224.1 L982.45,224.4 L982.80,223.4 L983.30,221.7 L983.50,221.0 L983.80,220.9 L984.30,221.0 L984.50,221.0 L984.80,221.2 L985.30,221.1 L985.80,220.7 L986.30,220.6 L986.80,220.8 L987.30,220.9 L987.80,220.7 L988.30,220.5 L988.80,220.7 L989.30,221.1 L989.40,221.1 L989.80,220.3 L990.30,219.0 L990.45,218.6 L990.80,218.2 L991.15,218.0 L991.30,218.7 L991.80,221.1 L992.00,221.9 L992.30,221.7 L992.80,221.1 L992.90,221.0 L993.30,220.8 L993.80,220.9 L993.90,220.9 L994.30,221.1 L994.80,221.0 L995.30,220.8 L995.80,220.9 L996.30,221.2 L996.80,221.1 L997.30,220.8 L997.80,220.6 L998.30,220.8 L998.70,220.9 L998.80,220.9 L999.30,220.4 L999.80,219.7 L1000.30,221.5 L1000.80,223.6 L1000.85,223.8 L1001.30,224.4 L1001.65,224.7 L1001.80,224.1 L1002.30,222.3 L1002.70,221.1 L1002.80,221.1 L1003.30,221.1 L1003.70,221.0 L1003.80,221.0 L1004.30,220.7 L1004.80,220.6 L1005.30,220.9 L1005.80,221.2 L1006.30,221.2 L1006.80,220.9 L1007.30,220.9 L1007.80,221.2 L1008.30,221.2 L1008.80,220.9 L1008.90,220.8 L1009.30,219.8 L1009.80,218.8 L1009.95,218.5 L1010.30,218.5 L1010.65,218.3 L1010.80,219.0 L1011.30,221.0 L1011.50,221.8 L1011.70,221.7" fill="none" stroke="#0eeef6" stroke-width="1.0" stroke-linejoin="round"/>
<path d="M12.3,378.3 L53.0,378.3 L53.7,379.5 L55.3,454.1 L55.9,456.0 L56.8,456.5 L62.2,456.5 L62.9,454.8 L64.5,380.3 L65.2,378.6 L66.0,378.3 L69.7,378.3 L70.3,379.5 L71.3,454.1 L71.9,456.0 L72.7,456.5 L76.7,456.5 L77.6,454.8 L80.1,380.3 L81.0,378.6 L81.8,378.3 L85.0,378.3 L85.7,379.5 L87.0,454.1 L87.8,459.5 L88.9,456.6 L89.9,456.0 L92.7,456.5 L93.4,454.8 L95.3,380.3 L96.0,378.6 L96.8,378.3 L99.4,378.3 L100.4,379.5 L103.4,454.1 L104.4,456.0 L105.2,456.6 L108.9,456.5 L109.6,454.8 L111.2,380.3 L111.9,378.6 L112.7,378.3 L115.0,378.3 L115.9,379.5 L118.5,454.1 L119.5,459.5 L120.6,456.6 L121.6,456.0 L124.7,456.5 L125.3,454.8 L126.6,380.3 L127.2,378.6 L128.0,378.3 L131.4,378.3 L132.0,379.5 L133.3,454.1 L133.8,456.0 L134.7,456.6 L139.7,456.5 L140.5,454.8 L142.7,380.3 L143.5,378.6 L144.3,378.3 L148.0,378.3 L148.6,379.5 L149.6,454.1 L150.2,456.0 L151.0,456.4 L154.7,456.5 L155.6,454.8 L158.3,380.3 L159.2,378.6 L160.0,378.3 L162.2,378.3 L163.0,379.5 L165.2,454.1 L166.0,456.0 L166.8,456.6 L170.7,456.5 L171.4,454.8 L172.8,380.3 L173.5,378.6 L174.3,378.3 L183.4,378.3 L184.0,379.5 L185.4,454.1 L186.0,456.0 L186.8,456.4 L190.5,456.5 L191.2,454.8 L192.8,380.3 L193.5,378.6 L194.3,378.3 L197.2,378.3 L197.8,379.5 L199.2,454.1 L199.8,456.0 L200.6,456.4 L203.0,456.5 L203.7,454.8 L205.5,380.3 L206.2,378.6 L207.0,378.3 L212.2,378.3 L212.9,379.5 L214.5,454.1 L215.2,456.0 L216.0,456.5 L218.9,456.5 L219.6,454.8 L221.2,380.3 L221.8,378.6 L222.7,378.3 L227.7,378.3 L228.3,379.5 L229.6,454.1 L230.2,456.0 L231.0,456.7 L233.4,456.5 L234.2,454.8 L236.1,380.3 L236.8,378.6 L237.7,378.3 L248.6,378.0 L249.7,375.7 L249.7,378.3 L250.3,379.5 L251.3,454.1 L251.8,456.0 L252.7,456.4 L257.2,456.5 L257.9,454.8 L259.5,380.3 L260.1,378.6 L261.0,378.3 L265.5,378.3 L266.4,379.5 L269.0,454.1 L270.0,459.8 L271.1,456.6 L272.1,456.0 L272.5,456.5 L273.2,454.8 L274.8,380.3 L275.4,378.6 L276.3,378.3 L279.7,378.3 L280.5,379.5 L282.4,454.1 L283.1,456.0 L284.0,456.7 L286.4,456.5 L287.2,454.8 L289.1,380.3 L289.8,378.6 L290.7,378.3 L295.5,378.3 L296.2,379.5 L297.8,454.1 L298.4,456.0 L299.3,456.6 L301.0,456.5 L301.8,454.8 L303.6,380.3 L304.3,378.6 L305.2,378.3 L309.4,378.3 L310.0,379.5 L311.3,454.1 L311.8,456.0 L312.7,456.5 L314.7,456.5 L315.7,454.8 L318.4,380.3 L319.3,378.6 L320.2,378.3 L323.0,378.3 L323.7,379.5 L325.3,454.1 L326.1,459.5 L327.2,456.6 L328.2,456.0 L330.5,456.5 L331.2,454.8 L332.8,380.3 L333.4,378.6 L334.3,378.3 L337.2,378.3 L338.2,379.5 L340.9,454.1 L341.8,456.0 L342.7,456.7 L345.1,456.5 L345.8,454.8 L347.3,380.3 L347.9,378.6 L348.8,378.3 L352.2,378.3 L352.9,379.5 L354.8,454.1 L355.4,456.0 L356.3,456.5 L358.7,456.5 L359.6,454.8 L361.8,380.3 L362.6,378.6 L363.5,378.3 L367.2,378.3 L367.9,379.5 L369.2,454.1 L369.8,456.0 L370.7,456.5 L373.9,456.5 L374.6,454.8 L376.5,380.3 L377.1,378.6 L378.0,378.3 L381.0,378.3 L381.8,379.5 L384.1,454.1 L384.8,456.0 L385.7,456.4 L388.4,456.5 L389.3,454.8 L391.8,380.3 L392.6,378.6 L393.5,378.3 L397.2,378.3 L397.9,379.5 L399.8,454.1 L400.6,459.9 L401.7,456.6 L402.7,456.0 L402.7,456.5 L403.7,454.8 L406.7,380.3 L407.6,378.6 L408.5,378.3 L411.4,378.3 L412.1,379.5 L413.7,454.1 L414.5,459.8 L415.6,456.6 L416.6,456.0 L418.4,456.5 L419.1,454.8 L420.7,380.3 L421.3,378.6 L422.2,378.3 L425.5,378.3 L426.5,379.5 L429.2,454.1 L430.1,456.0 L431.0,456.6 L433.0,456.5 L433.7,454.8 L435.3,380.3 L435.9,378.6 L436.8,378.3 L440.5,378.3 L441.2,379.5 L442.8,454.1 L443.6,459.8 L444.7,456.6 L445.7,456.0 L446.9,456.5 L447.6,454.8 L449.5,380.3 L450.1,378.6 L451.0,378.3 L455.0,378.3 L455.7,379.5 L457.5,454.1 L458.3,459.5 L459.4,456.6 L460.4,456.0 L461.0,456.5 L461.9,454.8 L464.6,380.3 L465.4,378.6 L466.3,378.3 L469.4,378.3 L470.1,379.5 L471.5,454.1 L472.1,456.0 L473.0,456.5 L476.7,456.5 L477.4,454.8 L478.7,380.3 L479.3,378.6 L480.2,378.3 L483.4,378.3 L484.3,379.5 L486.8,454.1 L487.6,456.0 L488.5,456.6 L491.0,456.5 L491.7,454.8 L493.5,380.3 L494.1,378.6 L495.0,378.3 L498.9,378.3 L499.6,379.5 L501.0,454.1 L501.8,459.7 L502.9,456.6 L503.9,456.0 L505.2,456.5 L505.9,454.8 L507.5,380.3 L508.1,378.6 L509.0,378.3 L512.2,378.3 L513.0,379.5 L515.2,454.1 L515.9,456.0 L516.8,456.6 L519.4,456.5 L520.1,454.8 L521.5,380.3 L522.1,378.6 L523.0,378.3 L527.7,378.3 L528.3,379.5 L529.6,454.1 L530.1,456.0 L531.0,456.6 L533.4,456.5 L534.2,454.8 L536.1,380.3 L536.9,378.6 L537.7,378.3 L541.7,378.3 L542.4,379.5 L543.7,454.1 L544.4,456.0 L545.2,456.5 L547.2,456.5 L548.1,454.8 L550.6,380.3 L551.4,378.6 L552.3,378.3 L556.0,378.3 L556.6,379.5 L557.9,454.1 L558.4,456.0 L559.3,456.7 L561.0,456.5 L561.9,454.8 L564.6,380.3 L565.4,378.6 L566.3,378.3 L569.4,378.3 L570.1,379.5 L571.5,454.1 L572.1,456.0 L573.0,456.6 L575.5,456.5 L576.4,454.8 L579.0,380.3 L579.9,378.6 L580.7,378.3 L583.9,378.3 L584.6,379.5 L586.2,454.1 L586.9,456.0 L587.7,456.5 L589.7,456.5 L590.6,454.8 L593.0,380.3 L593.9,378.6 L594.7,378.3 L597.7,378.3 L598.4,379.5 L600.3,454.1 L600.9,456.0 L601.8,456.6 L604.7,456.5 L605.4,454.8 L607.0,380.3 L607.6,378.6 L608.5,378.3 L612.2,378.3 L612.9,379.5 L614.5,454.1 L615.1,456.0 L616.0,456.6 L618.9,456.5 L619.6,454.8 L621.2,380.3 L621.9,378.6 L622.7,378.3 L625.5,378.3 L626.2,379.5 L627.8,454.1 L628.4,456.0 L629.3,456.7 L633.4,456.5 L634.0,454.8 L635.4,380.3 L635.9,378.6 L636.8,378.3 L639.7,378.3 L640.5,379.5 L642.6,454.1 L643.4,456.0 L644.2,456.7 L646.9,456.5 L647.6,454.8 L649.2,380.3 L649.9,378.6 L650.7,378.3 L653.7,378.3 L654.6,379.5 L656.8,454.1 L657.6,456.0 L658.5,456.5 L661.4,456.5 L662.1,454.8 L663.7,380.3 L664.4,378.6 L665.2,378.3 L668.9,378.3 L669.6,379.5 L671.2,454.1 L671.9,456.0 L672.7,456.7 L675.5,456.5 L676.2,454.8 L677.5,380.3 L678.1,378.6 L679.0,378.3 L682.2,378.3 L683.0,379.5 L685.2,454.1 L685.9,456.0 L686.8,456.4 L689.4,456.5 L690.1,454.8 L692.0,380.3 L692.6,378.6 L693.5,378.3 L697.2,378.3 L697.9,379.5 L699.2,454.1 L699.9,456.0 L700.7,456.5 L704.7,456.5 L705.4,454.8 L707.0,380.3 L707.6,378.6 L708.5,378.3 L711.4,378.3 L712.1,379.5 L713.7,454.1 L714.4,456.0 L715.2,456.7 L718.9,456.5 L719.6,454.8 L721.2,380.3 L721.9,378.6 L722.7,378.3 L725.5,378.3 L726.2,379.5 L727.8,454.1 L728.4,456.0 L729.3,456.5 L733.9,456.5 L734.6,454.8 L736.5,380.3 L737.1,378.6 L738.0,378.3 L781.4,378.3 L782.2,379.5 L784.4,454.1 L785.1,456.0 L786.0,456.6 L790.9,456.5 L791.6,454.8 L793.3,380.3 L793.9,378.6 L794.8,378.3 L797.2,378.3 L797.9,379.5 L799.5,454.1 L800.1,456.0 L801.0,456.4 L805.5,456.5 L806.3,454.8 L808.1,380.3 L808.9,378.6 L809.7,378.3 L813.0,378.3 L813.6,379.5 L814.6,454.1 L815.1,456.0 L816.0,456.6 L820.5,456.5 L821.4,454.8 L824.0,380.3 L824.9,378.6 L825.7,378.3 L828.9,378.3 L829.6,379.5 L831.2,454.1 L831.9,456.0 L832.7,456.7 L836.7,456.5 L837.4,454.8 L839.2,380.3 L839.9,378.6 L840.7,378.3 L843.4,378.3 L844.3,379.5 L846.8,454.1 L847.6,456.0 L848.5,456.6 L852.7,456.5 L853.4,454.8 L854.8,380.3 L855.4,378.6 L856.3,378.3 L859.4,378.3 L860.1,379.5 L861.5,454.1 L862.3,459.7 L863.4,456.6 L864.4,456.0 L868.0,456.5 L868.8,454.8 L870.6,380.3 L871.4,378.6 L872.2,378.3 L875.0,378.3 L875.7,379.5 L877.5,454.1 L878.1,456.0 L879.0,456.6 L883.0,456.5 L884.0,454.8 L886.7,380.3 L887.6,378.6 L888.5,378.3 L891.4,378.3 L892.2,379.5 L894.1,454.1 L895.0,459.8 L896.1,456.6 L897.1,456.0 L898.9,456.5 L899.6,454.8 L901.5,380.3 L902.1,378.6 L903.0,378.3 L911.7,378.3 L912.3,379.5 L913.3,454.1 L913.9,456.0 L914.7,456.6 L918.4,456.5 L919.2,454.8 L921.1,380.3 L921.9,378.6 L922.7,378.3 L925.5,378.3 L926.2,379.5 L927.8,454.1 L928.4,456.0 L929.3,456.7 L931.4,456.5 L932.1,454.8 L933.5,380.3 L934.3,379.3 L935.0,372.3 L936.4,376.8 L937.2,378.3 L938.9,378.3 L940.0,379.5 L943.1,454.1 L944.1,456.0 L945.0,456.7 L945.7,456.5 L946.6,454.8 L949.1,380.3 L949.9,378.6 L950.8,378.3 L955.7,378.3 L956.3,379.5 L957.5,454.1 L958.0,456.0 L958.9,456.6 L961.2,456.5 L962.1,454.8 L964.5,380.3 L965.4,378.6 L966.2,378.3 L980.1,378.3 L980.8,379.5 L982.5,454.1 L983.1,456.0 L984.0,456.6 L989.3,456.5 L989.9,454.8 L991.0,380.3 L991.5,378.6 L992.4,378.3 L999.7,378.3 L1000.3,379.5 L1001.4,454.1 L1001.9,456.0 L1002.8,456.4 L1008.7,456.5 L1009.3,454.8 L1010.6,380.3 L1011.1,378.6 L1012.0,378.3 L1011.7,378.3" fill="none" stroke="#8a8a00" stroke-width="1.65" stroke-linejoin="round" opacity="0.66"/>
<path d="M12.3,378.3 L53.0,378.3 L53.7,379.5 L55.3,454.1 L55.9,456.0 L56.8,456.5 L62.2,456.5 L62.9,454.8 L64.5,380.3 L65.2,378.6 L66.0,378.3 L69.7,378.3 L70.3,379.5 L71.3,454.1 L71.9,456.0 L72.7,456.5 L76.7,456.5 L77.6,454.8 L80.1,380.3 L81.0,378.6 L81.8,378.3 L85.0,378.3 L85.7,379.5 L87.0,454.1 L87.8,459.5 L88.9,456.6 L89.9,456.0 L92.7,456.5 L93.4,454.8 L95.3,380.3 L96.0,378.6 L96.8,378.3 L99.4,378.3 L100.4,379.5 L103.4,454.1 L104.4,456.0 L105.2,456.6 L108.9,456.5 L109.6,454.8 L111.2,380.3 L111.9,378.6 L112.7,378.3 L115.0,378.3 L115.9,379.5 L118.5,454.1 L119.5,459.5 L120.6,456.6 L121.6,456.0 L124.7,456.5 L125.3,454.8 L126.6,380.3 L127.2,378.6 L128.0,378.3 L131.4,378.3 L132.0,379.5 L133.3,454.1 L133.8,456.0 L134.7,456.6 L139.7,456.5 L140.5,454.8 L142.7,380.3 L143.5,378.6 L144.3,378.3 L148.0,378.3 L148.6,379.5 L149.6,454.1 L150.2,456.0 L151.0,456.4 L154.7,456.5 L155.6,454.8 L158.3,380.3 L159.2,378.6 L160.0,378.3 L162.2,378.3 L163.0,379.5 L165.2,454.1 L166.0,456.0 L166.8,456.6 L170.7,456.5 L171.4,454.8 L172.8,380.3 L173.5,378.6 L174.3,378.3 L183.4,378.3 L184.0,379.5 L185.4,454.1 L186.0,456.0 L186.8,456.4 L190.5,456.5 L191.2,454.8 L192.8,380.3 L193.5,378.6 L194.3,378.3 L197.2,378.3 L197.8,379.5 L199.2,454.1 L199.8,456.0 L200.6,456.4 L203.0,456.5 L203.7,454.8 L205.5,380.3 L206.2,378.6 L207.0,378.3 L212.2,378.3 L212.9,379.5 L214.5,454.1 L215.2,456.0 L216.0,456.5 L218.9,456.5 L219.6,454.8 L221.2,380.3 L221.8,378.6 L222.7,378.3 L227.7,378.3 L228.3,379.5 L229.6,454.1 L230.2,456.0 L231.0,456.7 L233.4,456.5 L234.2,454.8 L236.1,380.3 L236.8,378.6 L237.7,378.3 L248.6,378.0 L249.7,375.7 L249.7,378.3 L250.3,379.5 L251.3,454.1 L251.8,456.0 L252.7,456.4 L257.2,456.5 L257.9,454.8 L259.5,380.3 L260.1,378.6 L261.0,378.3 L265.5,378.3 L266.4,379.5 L269.0,454.1 L270.0,459.8 L271.1,456.6 L272.1,456.0 L272.5,456.5 L273.2,454.8 L274.8,380.3 L275.4,378.6 L276.3,378.3 L279.7,378.3 L280.5,379.5 L282.4,454.1 L283.1,456.0 L284.0,456.7 L286.4,456.5 L287.2,454.8 L289.1,380.3 L289.8,378.6 L290.7,378.3 L295.5,378.3 L296.2,379.5 L297.8,454.1 L298.4,456.0 L299.3,456.6 L301.0,456.5 L301.8,454.8 L303.6,380.3 L304.3,378.6 L305.2,378.3 L309.4,378.3 L310.0,379.5 L311.3,454.1 L311.8,456.0 L312.7,456.5 L314.7,456.5 L315.7,454.8 L318.4,380.3 L319.3,378.6 L320.2,378.3 L323.0,378.3 L323.7,379.5 L325.3,454.1 L326.1,459.5 L327.2,456.6 L328.2,456.0 L330.5,456.5 L331.2,454.8 L332.8,380.3 L333.4,378.6 L334.3,378.3 L337.2,378.3 L338.2,379.5 L340.9,454.1 L341.8,456.0 L342.7,456.7 L345.1,456.5 L345.8,454.8 L347.3,380.3 L347.9,378.6 L348.8,378.3 L352.2,378.3 L352.9,379.5 L354.8,454.1 L355.4,456.0 L356.3,456.5 L358.7,456.5 L359.6,454.8 L361.8,380.3 L362.6,378.6 L363.5,378.3 L367.2,378.3 L367.9,379.5 L369.2,454.1 L369.8,456.0 L370.7,456.5 L373.9,456.5 L374.6,454.8 L376.5,380.3 L377.1,378.6 L378.0,378.3 L381.0,378.3 L381.8,379.5 L384.1,454.1 L384.8,456.0 L385.7,456.4 L388.4,456.5 L389.3,454.8 L391.8,380.3 L392.6,378.6 L393.5,378.3 L397.2,378.3 L397.9,379.5 L399.8,454.1 L400.6,459.9 L401.7,456.6 L402.7,456.0 L402.7,456.5 L403.7,454.8 L406.7,380.3 L407.6,378.6 L408.5,378.3 L411.4,378.3 L412.1,379.5 L413.7,454.1 L414.5,459.8 L415.6,456.6 L416.6,456.0 L418.4,456.5 L419.1,454.8 L420.7,380.3 L421.3,378.6 L422.2,378.3 L425.5,378.3 L426.5,379.5 L429.2,454.1 L430.1,456.0 L431.0,456.6 L433.0,456.5 L433.7,454.8 L435.3,380.3 L435.9,378.6 L436.8,378.3 L440.5,378.3 L441.2,379.5 L442.8,454.1 L443.6,459.8 L444.7,456.6 L445.7,456.0 L446.9,456.5 L447.6,454.8 L449.5,380.3 L450.1,378.6 L451.0,378.3 L455.0,378.3 L455.7,379.5 L457.5,454.1 L458.3,459.5 L459.4,456.6 L460.4,456.0 L461.0,456.5 L461.9,454.8 L464.6,380.3 L465.4,378.6 L466.3,378.3 L469.4,378.3 L470.1,379.5 L471.5,454.1 L472.1,456.0 L473.0,456.5 L476.7,456.5 L477.4,454.8 L478.7,380.3 L479.3,378.6 L480.2,378.3 L483.4,378.3 L484.3,379.5 L486.8,454.1 L487.6,456.0 L488.5,456.6 L491.0,456.5 L491.7,454.8 L493.5,380.3 L494.1,378.6 L495.0,378.3 L498.9,378.3 L499.6,379.5 L501.0,454.1 L501.8,459.7 L502.9,456.6 L503.9,456.0 L505.2,456.5 L505.9,454.8 L507.5,380.3 L508.1,378.6 L509.0,378.3 L512.2,378.3 L513.0,379.5 L515.2,454.1 L515.9,456.0 L516.8,456.6 L519.4,456.5 L520.1,454.8 L521.5,380.3 L522.1,378.6 L523.0,378.3 L527.7,378.3 L528.3,379.5 L529.6,454.1 L530.1,456.0 L531.0,456.6 L533.4,456.5 L534.2,454.8 L536.1,380.3 L536.9,378.6 L537.7,378.3 L541.7,378.3 L542.4,379.5 L543.7,454.1 L544.4,456.0 L545.2,456.5 L547.2,456.5 L548.1,454.8 L550.6,380.3 L551.4,378.6 L552.3,378.3 L556.0,378.3 L556.6,379.5 L557.9,454.1 L558.4,456.0 L559.3,456.7 L561.0,456.5 L561.9,454.8 L564.6,380.3 L565.4,378.6 L566.3,378.3 L569.4,378.3 L570.1,379.5 L571.5,454.1 L572.1,456.0 L573.0,456.6 L575.5,456.5 L576.4,454.8 L579.0,380.3 L579.9,378.6 L580.7,378.3 L583.9,378.3 L584.6,379.5 L586.2,454.1 L586.9,456.0 L587.7,456.5 L589.7,456.5 L590.6,454.8 L593.0,380.3 L593.9,378.6 L594.7,378.3 L597.7,378.3 L598.4,379.5 L600.3,454.1 L600.9,456.0 L601.8,456.6 L604.7,456.5 L605.4,454.8 L607.0,380.3 L607.6,378.6 L608.5,378.3 L612.2,378.3 L612.9,379.5 L614.5,454.1 L615.1,456.0 L616.0,456.6 L618.9,456.5 L619.6,454.8 L621.2,380.3 L621.9,378.6 L622.7,378.3 L625.5,378.3 L626.2,379.5 L627.8,454.1 L628.4,456.0 L629.3,456.7 L633.4,456.5 L634.0,454.8 L635.4,380.3 L635.9,378.6 L636.8,378.3 L639.7,378.3 L640.5,379.5 L642.6,454.1 L643.4,456.0 L644.2,456.7 L646.9,456.5 L647.6,454.8 L649.2,380.3 L649.9,378.6 L650.7,378.3 L653.7,378.3 L654.6,379.5 L656.8,454.1 L657.6,456.0 L658.5,456.5 L661.4,456.5 L662.1,454.8 L663.7,380.3 L664.4,378.6 L665.2,378.3 L668.9,378.3 L669.6,379.5 L671.2,454.1 L671.9,456.0 L672.7,456.7 L675.5,456.5 L676.2,454.8 L677.5,380.3 L678.1,378.6 L679.0,378.3 L682.2,378.3 L683.0,379.5 L685.2,454.1 L685.9,456.0 L686.8,456.4 L689.4,456.5 L690.1,454.8 L692.0,380.3 L692.6,378.6 L693.5,378.3 L697.2,378.3 L697.9,379.5 L699.2,454.1 L699.9,456.0 L700.7,456.5 L704.7,456.5 L705.4,454.8 L707.0,380.3 L707.6,378.6 L708.5,378.3 L711.4,378.3 L712.1,379.5 L713.7,454.1 L714.4,456.0 L715.2,456.7 L718.9,456.5 L719.6,454.8 L721.2,380.3 L721.9,378.6 L722.7,378.3 L725.5,378.3 L726.2,379.5 L727.8,454.1 L728.4,456.0 L729.3,456.5 L733.9,456.5 L734.6,454.8 L736.5,380.3 L737.1,378.6 L738.0,378.3 L781.4,378.3 L782.2,379.5 L784.4,454.1 L785.1,456.0 L786.0,456.6 L790.9,456.5 L791.6,454.8 L793.3,380.3 L793.9,378.6 L794.8,378.3 L797.2,378.3 L797.9,379.5 L799.5,454.1 L800.1,456.0 L801.0,456.4 L805.5,456.5 L806.3,454.8 L808.1,380.3 L808.9,378.6 L809.7,378.3 L813.0,378.3 L813.6,379.5 L814.6,454.1 L815.1,456.0 L816.0,456.6 L820.5,456.5 L821.4,454.8 L824.0,380.3 L824.9,378.6 L825.7,378.3 L828.9,378.3 L829.6,379.5 L831.2,454.1 L831.9,456.0 L832.7,456.7 L836.7,456.5 L837.4,454.8 L839.2,380.3 L839.9,378.6 L840.7,378.3 L843.4,378.3 L844.3,379.5 L846.8,454.1 L847.6,456.0 L848.5,456.6 L852.7,456.5 L853.4,454.8 L854.8,380.3 L855.4,378.6 L856.3,378.3 L859.4,378.3 L860.1,379.5 L861.5,454.1 L862.3,459.7 L863.4,456.6 L864.4,456.0 L868.0,456.5 L868.8,454.8 L870.6,380.3 L871.4,378.6 L872.2,378.3 L875.0,378.3 L875.7,379.5 L877.5,454.1 L878.1,456.0 L879.0,456.6 L883.0,456.5 L884.0,454.8 L886.7,380.3 L887.6,378.6 L888.5,378.3 L891.4,378.3 L892.2,379.5 L894.1,454.1 L895.0,459.8 L896.1,456.6 L897.1,456.0 L898.9,456.5 L899.6,454.8 L901.5,380.3 L902.1,378.6 L903.0,378.3 L911.7,378.3 L912.3,379.5 L913.3,454.1 L913.9,456.0 L914.7,456.6 L918.4,456.5 L919.2,454.8 L921.1,380.3 L921.9,378.6 L922.7,378.3 L925.5,378.3 L926.2,379.5 L927.8,454.1 L928.4,456.0 L929.3,456.7 L931.4,456.5 L932.1,454.8 L933.5,380.3 L934.3,379.3 L935.0,372.3 L936.4,376.8 L937.2,378.3 L938.9,378.3 L940.0,379.5 L943.1,454.1 L944.1,456.0 L945.0,456.7 L945.7,456.5 L946.6,454.8 L949.1,380.3 L949.9,378.6 L950.8,378.3 L955.7,378.3 L956.3,379.5 L957.5,454.1 L958.0,456.0 L958.9,456.6 L961.2,456.5 L962.1,454.8 L964.5,380.3 L965.4,378.6 L966.2,378.3 L980.1,378.3 L980.8,379.5 L982.5,454.1 L983.1,456.0 L984.0,456.6 L989.3,456.5 L989.9,454.8 L991.0,380.3 L991.5,378.6 L992.4,378.3 L999.7,378.3 L1000.3,379.5 L1001.4,454.1 L1001.9,456.0 L1002.8,456.4 L1008.7,456.5 L1009.3,454.8 L1010.6,380.3 L1011.1,378.6 L1012.0,378.3 L1011.7,378.3" fill="none" stroke="#e8e800" stroke-width="0.95" stroke-linejoin="round"/>
<text x="111.9" y="498.6" font-size="16" fill="#ff8c00" text-anchor="middle">2.4µs</text>
<text x="211.9" y="498.6" font-size="16" fill="#ff8c00" text-anchor="middle">7.4µs</text>
<text x="311.9" y="498.6" font-size="16" fill="#ff8c00" text-anchor="middle">12.4µs</text>
<text x="411.9" y="498.6" font-size="16" fill="#ff8c00" text-anchor="middle">17.4µs</text>
<text x="511.9" y="498.6" font-size="16" fill="#ff8c00" text-anchor="middle">22.4µs</text>
<text x="611.9" y="498.6" font-size="16" fill="#ff8c00" text-anchor="middle">27.4µs</text>
<text x="711.9" y="498.6" font-size="16" fill="#ff8c00" text-anchor="middle">32.4µs</text>
<text x="811.9" y="498.6" font-size="16" fill="#ff8c00" text-anchor="middle">37.4µs</text>
<text x="911.9" y="498.6" font-size="16" fill="#ff8c00" text-anchor="middle">42.4µs</text>
<text x="1002.2" y="151.8" font-size="16.3" fill="#ffff00" text-anchor="end">12V</text>
<text x="1002.2" y="203.8" font-size="16.3" fill="#ffff00" text-anchor="end">10V</text>
<text x="1002.2" y="255.8" font-size="16.3" fill="#ffff00" text-anchor="end">8V</text>
<text x="1002.2" y="307.8" font-size="16.3" fill="#ffff00" text-anchor="end">6V</text>
<text x="1002.2" y="359.8" font-size="16.3" fill="#ffff00" text-anchor="end">4V</text>
<text x="1002.2" y="411.8" font-size="16.3" fill="#ffff00" text-anchor="end">2V</text>
<text x="1002.2" y="463.8" font-size="16.3" fill="#ffff00" text-anchor="end">0V</text>
<path d="M54,106.6 H74.4 V125.4 L64.2,135 L54,125.4 Z" fill="#ff8000"/>
<text x="64.2" y="121.9" font-size="17.2" fill="#000" text-anchor="middle">T</text>
<path d="M502.6,94.6 H522.4 L512.5,105.4 Z" fill="#000" stroke="#ff8c00" stroke-width="1.4" stroke-linejoin="miter"/>
<path d="M1012,408.3 H987.3 L977,418.2 L987.3,428 H1012 Z" fill="#ff8000"/>
<text x="998.8" y="423.4" font-size="16.2" fill="#000" text-anchor="middle">T</text>
<path d="M12,289.7 H37.5 L47.7,300.2 L37.5,310.6 H12" fill="#000" stroke="#00e8f0" stroke-width="1.2"/>
<text x="24.8" y="305.9" font-size="17.2" fill="#00e8f0" text-anchor="middle">2</text>
<path d="M12.5,446 H37 L46.7,456 L37,465.8 H12.5 Z" fill="#ffff00" stroke="#000" stroke-width="1.6"/>
<clipPath id="k2"><rect x="7.0" y="444.5" width="34.8" height="17.10"/></clipPath>
<g clip-path="url(#k2)">
<text x="24.4" y="463.55" font-size="17.4" fill="#000" text-anchor="middle">1</text>
</g>
<path d="M965.2,473 H990.4 M965.2,483 H984 M965.2,492.8 H990.4" stroke="#fff" stroke-width="3.4" fill="none"/>
<path d="M999,475.5 L990.8,482.8 L999,490.2" stroke="#fff" stroke-width="3.2" fill="none" stroke-linecap="square"/>
<text x="11.2" y="71.8" font-size="31.8" fill="#fff" textLength="112.2" lengthAdjust="spacingAndGlyphs">DHO914</text>
<rect x="92.3" y="68.6" width="6.0" height="3.8" fill="#3e4346"/><rect x="101.05" y="68.6" width="5.6" height="3.8" fill="#3e4346"/>
<rect x="7.2" y="518.3" width="82.8" height="74.2" rx="8" fill="#000"/>
<rect x="97.3" y="518.3" width="797.4" height="74.4" rx="8" fill="#000"/>
<rect x="901.8" y="518.3" width="115.4" height="74.2" rx="8" fill="#000"/>
<clipPath id="gclip"><circle cx="48.1" cy="555.0" r="35.0"/></clipPath>
<g clip-path="url(#gclip)">
<circle cx="48.1" cy="555.0" r="35.0" fill="url(#gm)"/>
<circle cx="48.1" cy="555.0" r="28.0" fill="url(#gd)"/>
<circle cx="78.06" cy="572.30" r="12.799999999999999" fill="url(#gm)"/>
<circle cx="48.10" cy="589.60" r="12.799999999999999" fill="url(#gm)"/>
<circle cx="18.14" cy="572.30" r="12.799999999999999" fill="url(#gm)"/>
<circle cx="18.14" cy="537.70" r="12.799999999999999" fill="url(#gm)"/>
<circle cx="48.10" cy="520.40" r="12.799999999999999" fill="url(#gm)"/>
<circle cx="78.06" cy="537.70" r="12.799999999999999" fill="url(#gm)"/>
<circle cx="78.06" cy="572.30" r="6.2" fill="#000"/>
<rect x="82.70" y="548.80" width="4" height="12.4" fill="#000" transform="rotate(30 48.1 555.0)"/>
<circle cx="48.10" cy="589.60" r="6.2" fill="#000"/>
<rect x="82.70" y="548.80" width="4" height="12.4" fill="#000" transform="rotate(90 48.1 555.0)"/>
<circle cx="18.14" cy="572.30" r="6.2" fill="#000"/>
<rect x="82.70" y="548.80" width="4" height="12.4" fill="#000" transform="rotate(150 48.1 555.0)"/>
<circle cx="18.14" cy="537.70" r="6.2" fill="#000"/>
<rect x="82.70" y="548.80" width="4" height="12.4" fill="#000" transform="rotate(210 48.1 555.0)"/>
<circle cx="48.10" cy="520.40" r="6.2" fill="#000"/>
<rect x="82.70" y="548.80" width="4" height="12.4" fill="#000" transform="rotate(270 48.1 555.0)"/>
<circle cx="78.06" cy="537.70" r="6.2" fill="#000"/>
<rect x="82.70" y="548.80" width="4" height="12.4" fill="#000" transform="rotate(330 48.1 555.0)"/>
</g>
<text x="34.2" y="568.6" font-size="39.5" fill="url(#gl)" textLength="29.6" lengthAdjust="spacingAndGlyphs" font-weight="bold" stroke="#161414" stroke-width="1.6" paint-order="stroke" stroke-linejoin="round">R</text>
<rect x="100.2" y="526.6" width="109.3" height="60.2" rx="4.5" fill="#2e383e" stroke="#ffff00" stroke-width="2.4"/>
<path d="M103.0,526.6 H206.7 Q209.5,526.6 209.5,530 V532.3 H100.2 V530 Q100.2,526.6 103.0,526.6 Z" fill="#ffff00"/>
<path d="M100.2,565.4 V527.2 Q100.2,523.2 104.2,523.2 H126.80000000000001 Q130.8,523.2 130.8,527.2 V565.4 Z" fill="#000" stroke="#ffff00" stroke-width="2.4" stroke-linejoin="miter"/>
<text x="114.0" y="550.9" font-size="22.0" fill="#ffff00" text-anchor="middle" stroke="#ffff00" stroke-width="1.7" stroke-linejoin="round">1</text>
<rect x="105.0" y="547.6" width="7.7" height="6.5" fill="#000"/><rect x="116.25" y="547.6" width="6" height="6.5" fill="#000"/>
<text x="138.3" y="545" font-size="14" fill="#ffff00" textLength="42.3" lengthAdjust="spacingAndGlyphs">2.00V/</text>
<text x="138.1" y="563.8" font-size="14" fill="#fff" textLength="41" lengthAdjust="spacingAndGlyphs">-6.00V</text>
<path d="M169.0,574.9 h15.4" stroke="#fff" stroke-width="2.2" fill="none"/>
<path d="M169.0,580.1 h15.4" stroke="#fff" stroke-width="1.9" stroke-dasharray="2.8 1.4" fill="none"/>
<rect x="215.2" y="526.6" width="109.3" height="60.2" rx="4.5" fill="#2e383e" stroke="#55626a" stroke-width="2.4"/>
<path d="M218.0,526.6 H321.7 Q324.5,526.6 324.5,530 V532.3 H215.2 V530 Q215.2,526.6 218.0,526.6 Z" fill="#55626a"/>
<path d="M215.2,565.4 V527.2 Q215.2,523.2 219.2,523.2 H241.8 Q245.8,523.2 245.8,527.2 V565.4 Z" fill="#000" stroke="#55626a" stroke-width="2.4" stroke-linejoin="miter"/>
<text x="228.6" y="551.8" font-size="24.8" fill="#00f0ff" font-weight="bold" text-anchor="middle">2</text>
<text x="253.3" y="545" font-size="14" fill="#00f0ff" textLength="42.3" lengthAdjust="spacingAndGlyphs">2.00V/</text>
<text x="253.1" y="563.8" font-size="14" fill="#fff" textLength="36.8" lengthAdjust="spacingAndGlyphs">0.00V</text>
<path d="M284.0,574.9 h15.4" stroke="#fff" stroke-width="2.2" fill="none"/>
<path d="M284.0,580.1 h15.4" stroke="#fff" stroke-width="1.9" stroke-dasharray="2.8 1.4" fill="none"/>
<rect x="330.4" y="526.6" width="109.3" height="60.2" rx="4.5" fill="#2e383e" stroke="#55626a" stroke-width="2.4"/>
<path d="M333.2,526.6 H436.9 Q439.7,526.6 439.7,530 V532.3 H330.4 V530 Q330.4,526.6 333.2,526.6 Z" fill="#55626a"/>
<path d="M330.4,565.4 V527.2 Q330.4,523.2 334.4,523.2 H357.0 Q361.0,523.2 361.0,527.2 V565.4 Z" fill="#000" stroke="#55626a" stroke-width="2.4" stroke-linejoin="miter"/>
<text x="343.8" y="551.8" font-size="24.8" fill="#808b92" font-weight="bold" text-anchor="middle">3</text>
<text x="368.5" y="545" font-size="14" fill="#808b92" textLength="62" lengthAdjust="spacingAndGlyphs">50.00mV/</text>
<text x="368.3" y="563.8" font-size="14" fill="#808b92" textLength="36.3" lengthAdjust="spacingAndGlyphs">0.00V</text>
<path d="M399.2,574.9 h15.4" stroke="#808b92" stroke-width="2.2" fill="none"/>
<path d="M399.2,580.1 h15.4" stroke="#808b92" stroke-width="1.9" stroke-dasharray="2.8 1.4" fill="none"/>
<rect x="445.4" y="526.6" width="109.3" height="60.2" rx="4.5" fill="#2e383e" stroke="#55626a" stroke-width="2.4"/>
<path d="M448.2,526.6 H551.9 Q554.6999999999999,526.6 554.6999999999999,530 V532.3 H445.4 V530 Q445.4,526.6 448.2,526.6 Z" fill="#55626a"/>
<path d="M445.4,565.4 V527.2 Q445.4,523.2 449.4,523.2 H472.0 Q476.0,523.2 476.0,527.2 V565.4 Z" fill="#000" stroke="#55626a" stroke-width="2.4" stroke-linejoin="miter"/>
<text x="458.8" y="551.8" font-size="24.8" fill="#808b92" font-weight="bold" text-anchor="middle">4</text>
<text x="483.5" y="545" font-size="14" fill="#808b92" textLength="62" lengthAdjust="spacingAndGlyphs">50.00mV/</text>
<text x="483.3" y="563.8" font-size="14" fill="#808b92" textLength="36.3" lengthAdjust="spacingAndGlyphs">0.00V</text>
<path d="M514.2,574.9 h15.4" stroke="#808b92" stroke-width="2.2" fill="none"/>
<path d="M514.2,580.1 h15.4" stroke="#808b92" stroke-width="1.9" stroke-dasharray="2.8 1.4" fill="none"/>
<rect x="560.5" y="526.6" width="106.0" height="60.2" rx="4.5" fill="#2e383e" stroke="#55626a" stroke-width="2.4"/>
<rect x="560.5" y="526.6" width="106.0" height="5.7" rx="3" fill="#55626a"/>
<path d="M560.5,565.4 V527.2 Q560.5,523.2 564.5,523.2 H585.0999999999999 Q589.0999999999999,523.2 589.0999999999999,527.2 V565.4 Z" fill="#000" stroke="#55626a" stroke-width="2.4" stroke-linejoin="miter"/>
<text x="565.5999999999999" y="555.6" font-size="28.2" fill="#fff" textLength="18.6" lengthAdjust="spacingAndGlyphs" font-weight="bold">D</text>
<text x="593.7" y="544.3" font-size="10.6" fill="#f2f2f2" text-anchor="middle">0</text>
<text x="612.7" y="544.3" font-size="10.6" fill="#f2f2f2" text-anchor="middle">1</text>
<text x="631.6" y="544.3" font-size="10.6" fill="#f2f2f2" text-anchor="middle">2</text>
<text x="650.9000000000001" y="544.3" font-size="10.6" fill="#f2f2f2" text-anchor="middle">3</text>
<text x="593.7" y="557.3" font-size="10.6" fill="#f2f2f2" text-anchor="middle">4</text>
<text x="612.7" y="557.3" font-size="10.6" fill="#f2f2f2" text-anchor="middle">5</text>
<text x="631.6" y="557.3" font-size="10.6" fill="#f2f2f2" text-anchor="middle">6</text>
<text x="650.9000000000001" y="557.3" font-size="10.6" fill="#f2f2f2" text-anchor="middle">7</text>
<text x="593.7" y="570.3" font-size="10.6" fill="#f2f2f2" text-anchor="middle">8</text>
<text x="612.7" y="570.3" font-size="10.6" fill="#f2f2f2" text-anchor="middle">9</text>
<text x="634.5" y="570.3" font-size="10.6" fill="#f2f2f2" text-anchor="middle">10</text>
<text x="653.8000000000001" y="570.3" font-size="10.6" fill="#f2f2f2" text-anchor="middle">11</text>
<text x="596.6" y="583.2" font-size="10.6" fill="#f2f2f2" text-anchor="middle">12</text>
<text x="615.6" y="583.2" font-size="10.6" fill="#f2f2f2" text-anchor="middle">13</text>
<text x="634.5" y="583.2" font-size="10.6" fill="#f2f2f2" text-anchor="middle">14</text>
<text x="653.8000000000001" y="583.2" font-size="10.6" fill="#f2f2f2" text-anchor="middle">15</text>
<rect x="782.5" y="526.6" width="106.8" height="60.2" rx="4.5" fill="#2e383e" stroke="#55626a" stroke-width="2.4"/>
<rect x="782.5" y="526.6" width="106.8" height="5.7" rx="3" fill="#55626a"/>
<path d="M782.5,565.4 V527.2 Q782.5,523.2 786.5,523.2 H809.0999999999999 Q813.0999999999999,523.2 813.0999999999999,527.2 V565.4 Z" fill="#000" stroke="#55626a" stroke-width="2.4" stroke-linejoin="miter"/>
<text x="785.4" y="552.8" font-size="25.4" fill="#fff" textLength="23.8" lengthAdjust="spacingAndGlyphs" font-weight="bold">M</text>
<rect x="815.4" y="534.9" width="35.6" height="23.5" fill="#7d8890"/>
<text x="833.1999999999999" y="551.3" font-size="12.6" fill="#d9dee1" text-anchor="middle">M1</text>
<rect x="852.1" y="534.9" width="35.6" height="23.5" fill="#7d8890"/>
<text x="869.9" y="551.3" font-size="12.6" fill="#d9dee1" text-anchor="middle">M3</text>
<rect x="815.4" y="560.2" width="35.6" height="23.5" fill="#7d8890"/>
<text x="833.1999999999999" y="576.6" font-size="12.6" fill="#d9dee1" text-anchor="middle">M2</text>
<rect x="852.1" y="560.2" width="35.6" height="23.5" fill="#7d8890"/>
<text x="869.9" y="576.6" font-size="12.6" fill="#d9dee1" text-anchor="middle">M4</text>
<g fill="none" stroke="#d0d0d0" stroke-width="1.1"><path d="M946.5,546.5 V561.5 M946.5,559 L943.4,556.2 V552.6 M946.5,557 L949.8,553.8 V551"/></g>
<path d="M945.1,548.6 L946.5,545.2 L947.9,548.6 Z" fill="#d0d0d0"/>
<circle cx="946.5" cy="563" r="1.8" fill="#d0d0d0"/><circle cx="943.3" cy="551.8" r="1.1" fill="#d0d0d0"/><rect x="948.7" y="549.3" width="2.2" height="2.2" fill="#d0d0d0"/>
<path d="M965.7,552.9 L972.9,548 V562.2 L965.7,557.3 Z" fill="none" stroke="#efefef" stroke-width="1.6" stroke-linejoin="round"/>
<path d="M975.6,548.4 V562" stroke="#d4d4d4" stroke-width="1" fill="none"/>
<path d="M971.4,553.6 a1.5,1.5 0 0 1 0,3" stroke="#cfcfcf" stroke-width="0.8" fill="none"/>
<path d="M977.4,552.2 L984,558.9 M984,552.2 L977.4,558.9" stroke="#c8c8c8" stroke-width="0.9" fill="none"/>
</svg>
</body></html>
